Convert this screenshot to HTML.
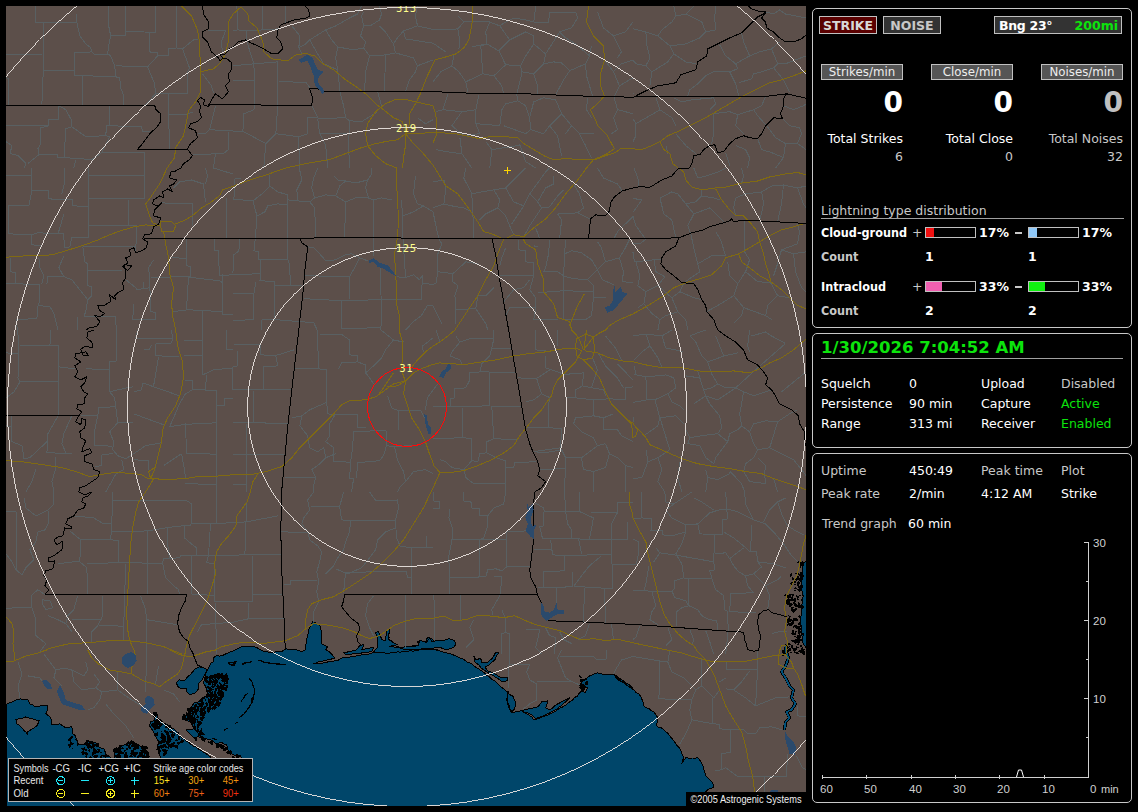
<!DOCTYPE html>
<html><head><meta charset="utf-8"><title>Lightning Detector</title>
<style>
html,body{margin:0;padding:0;background:#000;}
body{width:1138px;height:812px;position:relative;overflow:hidden;font-family:"DejaVu Sans","Liberation Sans",sans-serif;color:#fff;font-size:12.5px;}
#map{position:absolute;left:6px;top:6px;width:800px;height:800px;overflow:hidden;background:#5c4f4a;}
#map svg{position:absolute;left:0;top:0;}
.box{position:absolute;border:1px solid #c8c8c8;border-radius:5px;box-sizing:border-box;}
.t{position:absolute;white-space:nowrap;line-height:16px;height:16px;}
.r{text-align:right;}
.btn{position:absolute;box-sizing:border-box;border:1px solid #c0c0c0;text-align:center;white-space:nowrap;}
.g{color:#c8c8c8}
.gr{color:#0ce40c}
.b{font-weight:bold}
.bc{font-weight:bold;font-family:"DejaVu Sans Condensed","DejaVu Sans","Liberation Sans",sans-serif}
.big{position:absolute;font-weight:bold;font-size:28px;line-height:30px;height:30px;text-align:right;}
.bar{position:absolute;box-sizing:border-box;border:1px solid #c0c0c0;height:11px;width:51px;background:#000;}
.bar i{position:absolute;left:0;top:0;height:9px;display:block;}
</style></head><body>
<div id="map">
<svg width="800" height="800" viewBox="0 0 800 800" shape-rendering="crispEdges">
<g id="ocean"><path d="M0.0 698.9L2.8 697.0L6.0 695.9L8.8 694.4L11.3 693.7L14.0 692.9L16.2 693.2L18.8 693.5L21.9 693.9L23.9 697.9L26.5 698.9L29.9 700.9L32.6 700.7L35.0 699.6L38.3 699.8L40.9 698.9L41.9 701.8L41.0 704.7L39.9 707.8L43.9 710.8L45.0 713.0L45.6 715.9L45.9 718.8L48.2 718.1L51.0 718.5L53.9 717.8L56.5 719.9L59.8 721.8L63.0 721.2L65.8 720.8L66.4 723.9L66.8 727.8L69.8 729.8L70.0 732.1L71.3 735.0L71.8 737.8L74.6 738.3L77.8 738.8L79.7 736.6L81.8 734.8L84.7 735.6L86.9 736.2L89.8 736.8L91.8 739.6L93.8 741.7L97.7 742.7L99.0 745.5L99.7 748.7L103.2 750.3L105.7 752.7L108.7 752.7L108.6 750.0L108.4 746.7L108.7 743.7L110.6 742.6L113.6 741.2L115.7 739.8L119.1 738.6L121.7 737.8L125.7 734.8L128.5 736.5L131.1 738.0L133.7 739.8L136.7 742.2L138.9 743.9L141.6 745.7L141.7 749.4L142.6 752.7L145.5 753.2L148.4 752.5L150.7 752.9L153.6 752.7L154.3 751.0L152.9 747.8L152.2 744.3L151.6 741.5L151.8 739.1L153.0 736.1L151.2 733.2L150.1 731.1L148.5 727.9L147.5 725.3L145.6 723.0L143.5 719.9L144.8 715.8L148.9 714.4L148.5 711.4L147.5 707.7L150.9 706.3L151.1 708.9L151.6 711.7L153.3 713.9L155.7 715.0L157.0 717.2L160.1 718.2L163.8 719.9L165.8 721.7L168.4 723.2L170.6 725.3L172.1 727.9L174.6 730.7L178.7 733.4L180.8 735.3L183.7 737.2L185.5 738.8L187.7 740.3L190.2 741.1L192.2 742.9L194.9 744.5L197.1 745.9L199.0 747.0L201.6 748.9L204.4 751.0L205.4 753.5L206.7 755.3L208.2 757.8L209.9 760.5L212.4 760.1L214.8 760.2L217.6 760.4L220.2 760.9L223.5 760.1L225.9 760.3L228.7 760.1L231.9 761.0L234.2 760.5L237.0 760.5L236.1 757.4L235.9 754.8L235.6 752.4L234.2 749.7L231.9 748.9L228.3 749.2L226.1 748.3L224.1 745.9L222.1 744.2L221.4 741.1L220.7 738.8L218.0 737.9L215.3 736.1L212.9 737.0L209.9 737.5L206.9 735.3L204.4 733.4L201.4 733.0L199.0 732.1L195.7 731.7L192.2 730.7L188.2 732.1L186.0 729.7L184.1 728.0L182.4 726.4L180.1 723.9L183.1 723.8L185.8 723.3L188.2 722.6L186.6 719.9L185.5 717.2L182.6 715.3L180.1 714.4L176.0 711.7L177.3 710.4L180.3 708.8L184.1 707.7L181.4 703.6L185.5 700.9L188.2 696.8L190.7 696.3L193.6 695.5L196.3 691.4L199.5 690.7L201.7 690.1L201.5 687.2L200.4 683.3L199.5 680.4L197.7 677.9L198.1 674.2L199.0 671.1L199.7 667.4L201.1 664.3L202.3 662.5L203.7 659.8L204.4 657.5L207.8 655.5L207.2 652.1L210.5 649.4L213.9 650.1L217.5 649.0L220.7 647.4L223.0 646.4L226.5 645.4L228.8 644.0L231.4 642.8L233.2 642.0L235.9 640.6L238.7 640.9L242.4 640.5L244.8 641.0L247.9 640.6L250.8 641.6L252.8 642.9L255.9 644.6L258.8 645.4L260.5 645.9L263.8 646.2L265.8 646.6L268.2 646.4L270.4 645.6L273.8 646.0L275.8 645.6L279.8 642.6L282.3 643.3L284.7 643.5L287.6 643.1L289.8 643.6L292.5 644.4L295.8 645.6L299.7 643.6L299.7 641.2L300.0 638.5L300.1 636.5L300.7 633.6L301.1 631.1L301.8 629.0L302.2 626.6L302.7 623.6L304.1 621.0L305.4 617.8L306.7 615.7L309.0 616.3L310.9 618.0L313.7 618.7L314.4 622.1L315.7 625.6L315.9 628.7L315.5 631.6L315.8 634.9L315.7 637.6L318.3 639.2L321.7 640.6L319.7 643.6L321.9 644.9L324.7 646.6L323.6 645.9L325.7 648.0L327.3 650.4L329.1 652.2L327.0 652.7L324.1 653.3L321.4 654.0L318.7 654.4L316.2 655.3L313.6 655.4L310.8 656.8L307.6 657.4L311.0 657.2L313.6 657.4L316.3 657.4L319.2 656.2L321.2 656.1L323.8 655.4L326.5 655.4L329.5 654.8L332.2 654.2L333.9 653.1L336.5 651.8L339.2 651.1L341.9 651.6L343.7 651.2L346.4 650.4L349.5 650.4L351.2 649.6L354.0 649.1L356.2 648.8L359.2 648.1L361.6 648.2L364.0 647.9L365.9 646.9L368.9 646.3L370.7 646.0L373.9 645.1L376.0 643.9L378.4 643.0L381.1 643.0L384.1 641.7L387.1 641.9L389.9 640.9L392.7 640.9L394.6 641.8L397.5 641.8L399.9 641.9L402.3 641.6L405.7 642.2L407.9 642.9L411.2 643.0L413.9 642.9L416.0 643.4L418.6 643.5L421.5 643.1L424.2 643.9L426.5 643.2L429.3 643.5L431.8 643.9L429.9 644.0L432.0 644.4L434.5 645.2L437.2 646.0L440.2 646.8L442.4 647.4L444.7 648.0L447.1 648.8L449.9 650.0L452.4 651.2L454.1 652.2L457.1 653.0L459.3 654.5L461.3 656.0L463.4 656.8L465.8 658.0L468.3 660.1L470.3 661.6L473.0 663.1L475.0 664.5L477.0 665.9L479.8 667.9L481.4 669.8L483.5 670.8L485.4 673.1L488.1 674.5L489.8 675.9L491.5 677.4L493.5 679.4L495.4 681.1L497.7 682.9L500.0 684.9L502.7 685.9L502.5 688.6L501.1 691.7L500.7 693.9L501.3 696.2L501.7 698.7L503.0 701.4L503.7 703.8L505.7 706.8L507.9 706.3L510.2 705.6L512.8 705.2L515.7 704.8L517.7 705.9L520.5 707.6L523.3 709.4L525.7 710.8L527.7 713.8L530.3 713.2L532.7 712.6L534.7 711.3L537.7 710.3L539.6 709.8L542.3 708.8L544.0 707.8L547.2 706.4L549.4 705.4L551.6 703.8L553.6 702.3L556.4 701.0L559.1 699.4L561.3 697.9L563.6 695.9L566.4 694.1L568.6 691.4L571.6 689.9L573.2 687.2L575.5 684.9L579.5 686.9L580.1 684.7L581.5 681.9L578.9 681.4L576.3 680.8L573.5 679.9L575.5 676.4L577.5 673.9L580.8 672.2L583.5 669.9L586.2 669.0L589.0 667.5L591.5 666.9L594.4 667.4L596.4 668.0L599.5 668.9L602.4 668.3L605.0 668.7L607.5 667.9L609.4 669.8L611.4 672.1L613.4 673.9L616.4 676.0L618.9 677.5L621.4 679.9L623.9 680.7L627.0 681.9L625.0 680.2L622.6 678.3L619.9 677.0L618.3 675.9L616.1 673.9L613.7 672.6L611.4 670.7L609.6 669.2L607.0 667.9L609.1 670.4L609.8 671.9L612.0 673.9L614.9 675.7L617.2 676.4L619.9 677.9L622.3 680.4L625.0 682.0L627.9 683.9L629.9 686.2L633.0 688.2L634.9 690.9L636.2 693.9L637.3 697.1L637.9 699.9L640.1 701.7L642.9 702.4L644.9 704.3L647.9 705.8L649.8 708.6L651.9 711.8L651.2 714.3L651.0 717.5L650.9 719.8L652.7 721.4L655.9 722.1L657.8 723.8L660.3 726.0L662.2 727.6L663.8 729.8L665.7 732.3L668.3 735.2L669.8 737.8L671.3 739.7L672.9 741.3L674.8 743.7L675.4 746.7L676.6 749.5L677.8 751.7L676.5 754.5L675.8 757.7L677.8 754.4L679.8 751.7L682.7 752.2L686.2 752.0L688.9 752.1L691.8 751.7L694.2 754.8L695.8 757.7L697.0 760.2L697.7 763.7L699.0 766.6L699.7 769.7L702.0 771.8L703.5 773.2L705.7 775.7L707.1 778.3L707.7 781.6L704.7 782.5L701.7 783.6L699.7 786.0L699.5 788.9L700.2 791.0L699.9 793.6L699.8 796.3L699.4 798.7L699.7 801.6L0.0 806.0Z" fill="#00466a" stroke="#000" stroke-width="1" stroke-linejoin="round"/><path d="M170.6 676.5L173.3 673.8L175.8 674.5L178.7 674.5L180.4 672.2L182.1 670.4L184.4 668.8L186.2 666.4L188.1 664.0L190.2 662.3L193.6 660.9L196.1 661.3L199.0 662.3L201.1 664.3L199.8 666.3L198.6 668.6L197.7 671.1L195.0 675.2L192.2 677.9L192.3 680.9L192.2 683.3L189.5 686.7L187.0 687.6L184.1 688.7L180.7 686.0L180.1 682.6L177.3 682.6L174.6 682.6L171.3 679.9Z" fill="#00466a" stroke="#000" stroke-width="1" stroke-linejoin="round"/><path d="M371.6 641.6L371.5 638.8L371.2 636.1L371.6 633.6L370.9 629.8L369.6 626.6L372.6 625.6L373.6 628.4L374.8 630.7L375.5 633.6L379.5 634.6L379.6 631.9L380.0 629.6L380.6 627.4L380.5 624.6L383.5 623.6L383.6 625.8L382.6 628.8L383.1 631.1L382.5 633.6L384.8 634.5L386.9 636.5L389.5 637.6L391.5 638.6L389.2 639.1L385.9 639.7L383.5 640.6L386.2 640.9L389.2 641.1L391.6 641.3L394.1 641.3L396.5 641.7L399.5 641.6L402.1 641.3L405.2 640.2L407.6 639.6L410.8 639.4L413.4 638.6L411.5 635.6L413.8 635.6L416.8 636.3L419.4 636.6L420.3 633.9L421.4 631.6L424.3 632.2L427.0 633.6L428.0 636.6L429.4 639.6L427.3 640.7L424.7 641.6L421.7 642.4L419.4 643.6L417.3 644.0L414.3 643.7L411.9 644.5L409.4 644.4L407.1 645.2L404.2 644.7L401.8 645.3L399.5 645.6L397.1 645.5L394.7 646.2L392.0 645.9L389.9 646.2L387.3 646.4L384.3 647.0L381.9 647.3L379.5 647.2L376.5 646.5L373.3 646.3L370.7 646.3L367.6 645.6L369.3 643.5Z" fill="#00466a" stroke="#000" stroke-width="1" stroke-linejoin="round"/><path d="M337.6 646.6L340.4 646.5L343.3 645.2L346.3 645.0L349.6 644.6L351.9 642.4L353.6 639.6L357.6 638.6L356.8 641.5L355.6 643.6L358.9 643.0L361.3 642.9L364.8 641.7L367.6 641.6L365.6 645.6L362.9 646.0L359.9 646.4L356.9 646.6L354.2 647.4L351.6 648.0L349.0 647.8L346.0 648.0L342.5 648.7L339.6 648.6Z" fill="#00466a" stroke="#000" stroke-width="1" stroke-linejoin="round"/><path d="M400.0 640.6L403.2 640.3L405.6 640.1L408.9 640.2L412.0 639.6L412.7 637.0L414.0 634.6L417.3 635.2L419.9 636.6L421.9 634.4L423.9 631.6L425.9 635.6L428.6 635.0L430.5 634.8L433.7 634.7L435.9 634.6L439.6 633.9L442.9 632.6L445.8 633.4L448.9 634.6L449.2 637.7L448.9 640.6L446.4 641.8L444.1 642.4L441.9 643.6L439.0 643.3L437.2 642.7L434.8 641.7L431.9 641.6L428.7 641.8L426.3 642.5L422.8 642.1L419.9 642.6L417.2 642.9L415.0 643.0L412.0 643.6L409.2 643.8L406.2 643.8L403.1 643.5L400.0 643.6L396.9 643.0L394.0 642.6L397.2 641.3Z" fill="#00466a" stroke="#000" stroke-width="1" stroke-linejoin="round"/><path d="M467.8 650.0L469.8 654.0L472.1 653.2L474.8 652.0L475.1 654.1L475.8 657.0L478.4 656.5L481.8 656.0L483.6 654.4L486.1 652.4L487.8 650.0L489.8 646.0L492.8 647.0L491.2 649.0L489.8 651.6L488.8 654.0L486.9 655.6L484.6 657.2L482.8 659.0L478.8 661.0L481.8 664.9L484.9 666.1L487.8 666.9L491.0 669.2L493.8 670.9L497.7 671.9L501.7 671.9L501.7 674.9L498.9 675.1L495.8 675.9L493.5 673.8L490.8 671.9L488.5 670.5L486.3 669.0L483.8 667.9L480.6 665.7L477.8 663.9L475.0 661.8L472.8 659.0L468.8 656.0L468.4 652.8Z" fill="#00466a" stroke="#000" stroke-width="1" stroke-linejoin="round"/><path d="M501.7 686.9L504.1 688.8L506.7 689.9L508.0 692.7L509.3 695.9L509.3 699.5L508.7 702.8L505.7 705.8L503.3 701.8L503.1 698.9L502.0 696.8L501.3 693.9L501.8 690.7Z" fill="#00466a" stroke="#000" stroke-width="1" stroke-linejoin="round"/><path d="M515.7 704.8L518.0 704.0L520.7 703.3L523.7 702.8L526.7 702.2L529.3 701.4L531.7 700.9L533.9 698.3L535.6 695.9L538.4 695.6L541.6 694.9L541.0 698.0L539.6 701.8L543.6 703.8L546.2 702.2L548.4 700.2L550.8 698.4L553.6 696.9L555.9 695.7L558.7 694.1L560.7 693.0L563.6 691.9L561.7 693.6L559.6 695.9L557.4 697.4L555.8 699.4L553.3 700.8L551.6 702.8L549.1 704.1L546.9 704.9L544.2 706.6L542.0 707.5L539.6 708.8L537.0 710.2L534.5 710.9L532.0 711.8L529.7 712.8L528.0 711.2L525.7 708.8L523.1 707.6L520.9 706.6L517.8 706.2Z" fill="#00466a" stroke="#000" stroke-width="1" stroke-linejoin="round"/><path d="M801.5 553.8L798.9 556.1L796.5 557.8L796.6 561.1L796.8 563.5L796.5 566.8L797.1 569.8L796.7 572.6L795.8 574.9L795.5 577.3L795.1 579.8L795.3 582.1L796.1 585.1L796.3 587.2L797.1 589.7L796.9 592.6L796.0 594.4L796.2 597.6L795.5 599.7L795.3 602.1L795.4 605.2L795.2 608.2L795.0 610.6L794.5 613.7L795.0 616.4L794.9 619.9L795.5 622.4L795.5 625.6L795.7 628.5L796.3 631.5L796.4 634.4L797.1 637.6L799.5 640.9L801.5 643.6L801.1 641.1L801.7 638.1L801.7 635.6L801.6 633.4L801.6 630.6L801.4 628.3L801.4 625.8L801.4 623.0L801.1 620.6L801.5 617.7L801.7 615.6L801.4 612.6L801.5 609.9L801.2 607.6L801.1 605.1L801.5 602.2L801.6 599.7L801.7 597.6L801.5 594.5L801.5 592.2L801.8 589.4L801.8 587.6L801.7 584.9L801.2 582.4L801.5 579.8L801.8 576.6L801.7 574.7L801.1 571.7L801.7 568.9L801.8 566.5L801.7 563.8L801.5 561.9L801.2 558.8L801.5 556.2Z" fill="#00466a" stroke="#000" stroke-width="1" stroke-linejoin="round"/><path d="M10.0 713.8L12.1 712.8L14.7 712.7L17.6 711.9L19.9 710.8L22.3 711.9L24.8 712.4L27.8 713.1L30.6 714.1L32.9 714.8L32.0 717.6L30.9 719.8L28.4 721.7L26.5 722.7L24.4 724.1L21.9 725.8L21.9 728.8L20.3 726.5L17.8 724.3L16.0 721.8L13.4 719.5L11.0 717.8Z" fill="#5c4f4a" stroke="#000" stroke-width="1"/><path d="M779.5 644.0L782.5 652.0L779.5 660.0L775.5 665.9L779.5 671.9L783.5 679.9L787.5 683.9L785.5 691.9L789.5 697.9L785.5 703.8L780.5 705.8L783.5 711.8L779.5 715.8L778.5 723.8" fill="none" stroke="#000" stroke-width="3.2" stroke-linejoin="round"/><path d="M779.5 644.0L782.5 652.0L779.5 660.0L775.5 665.9L779.5 671.9L783.5 679.9L787.5 683.9L785.5 691.9L789.5 697.9L785.5 703.8L780.5 705.8L783.5 711.8L779.5 715.8L778.5 723.8" fill="none" stroke="#00507a" stroke-width="1.6" stroke-linejoin="round"/><path d="M780.5 639.6L779.5 643.6L779.5 648.0" fill="none" stroke="#000" stroke-width="3.2" stroke-linejoin="round"/><path d="M780.5 639.6L779.5 643.6L779.5 648.0" fill="none" stroke="#00507a" stroke-width="1.6" stroke-linejoin="round"/><path d="M209.3 672.6L207.9 670.8L208.1 668.6L210.1 667.6L211.9 668.6L212.5 670.4L210.8 671.2ZM190.0 706.4L190.2 707.1L190.0 708.2L189.1 707.4L188.9 707.0L188.6 706.2L189.4 706.2ZM203.1 704.9L202.6 705.8L201.9 705.2L202.0 704.3L202.6 704.1L203.0 704.0L203.8 703.9L203.6 704.7ZM202.7 707.3L202.2 705.8L201.2 705.4L201.8 704.5L202.6 704.4L203.1 704.9L204.4 705.3L203.1 705.8ZM203.2 699.3L203.2 697.8L205.3 697.3L205.9 699.4L204.7 700.6L203.1 700.6ZM218.1 673.0L217.2 672.8L217.3 671.9L217.8 670.9L219.6 670.9L219.8 672.8ZM187.7 704.1L186.6 703.0L187.6 702.0L188.0 701.0L188.8 701.7L190.1 702.4L189.3 703.7ZM216.9 680.4L216.4 678.7L217.7 677.4L219.3 678.1L219.3 679.6L218.4 680.4ZM212.8 692.5L212.0 692.7L210.2 692.3L211.6 691.0L212.7 691.1L213.0 691.9ZM177.8 710.3L179.5 710.5L178.8 712.1L176.9 712.9L175.9 710.7ZM218.0 672.0L217.2 672.3L216.5 671.9L214.5 671.5L215.1 669.7L216.8 669.2L218.6 669.3L219.1 671.0ZM209.7 689.4L209.5 690.4L209.8 691.1L209.1 691.5L208.1 691.6L208.0 690.6L207.8 689.6L208.8 689.3ZM184.7 716.4L183.0 714.9L185.3 712.9L188.1 714.6L186.6 717.3ZM201.6 677.2L201.6 675.4L203.1 676.3L204.9 677.1L203.7 679.0L201.5 679.2ZM206.1 688.7L206.0 689.8L205.8 690.8L204.8 690.7L204.2 690.3L203.8 689.6L204.1 688.7L205.0 688.9ZM218.8 676.1L218.6 674.8L219.4 673.1L221.1 674.6L220.6 676.6ZM216.8 680.9L217.6 681.5L217.9 682.5L217.4 683.5L216.2 683.2L215.7 682.4L216.1 681.7ZM206.6 678.4L207.1 679.3L206.7 679.9L206.0 680.5L205.8 679.6L205.9 679.0ZM193.4 717.6L193.0 716.3L194.4 716.0L195.9 716.1L196.6 717.9L195.0 718.7L193.6 719.0ZM210.0 692.8L211.0 693.1L211.3 693.9L211.0 694.9L210.2 694.3L209.6 693.8ZM206.7 683.2L205.8 684.0L204.8 684.4L203.6 684.0L203.2 682.7L204.4 682.2L205.1 682.4L206.3 681.9ZM218.5 675.0L217.1 675.2L216.8 673.8L217.5 673.3L218.3 672.8L218.9 673.8ZM207.7 699.5L207.9 697.7L209.4 698.7L210.8 699.1L210.2 700.4L209.2 701.6L208.4 700.3ZM194.5 693.4L195.1 692.6L196.2 692.7L197.7 693.9L196.7 695.8L194.6 696.2L193.0 694.7ZM217.0 671.8L218.0 670.5L219.6 668.9L220.2 671.1L220.1 672.9L218.0 673.6ZM213.8 695.8L214.9 696.4L214.2 697.3L213.3 698.1L212.3 697.3L212.3 695.7ZM206.0 699.3L205.9 697.7L206.2 696.4L207.7 695.8L208.1 697.3L209.5 698.8L207.5 698.7ZM190.0 707.0L188.3 707.3L188.5 705.6L189.0 704.6L190.4 704.5L191.1 705.9ZM189.6 697.6L191.0 698.0L190.3 699.3L189.3 699.1L189.0 698.3ZM199.7 702.6L197.5 703.1L197.3 700.7L199.0 700.0L200.6 701.0ZM194.4 729.3L195.9 730.0L197.3 730.4L196.8 732.1L194.8 732.9L194.4 730.9ZM179.0 713.7L177.7 714.0L176.1 714.1L176.0 712.5L176.4 710.9L178.0 711.7L178.7 712.4ZM199.7 675.6L198.6 675.1L197.4 675.3L197.9 674.2L198.3 673.6L199.1 673.8L199.7 674.4ZM201.3 692.0L200.3 691.4L200.1 690.2L201.2 690.5L201.6 691.0ZM193.7 718.6L193.8 719.4L193.5 720.0L192.5 721.2L191.3 720.2L190.8 718.3L192.7 717.7ZM210.9 694.1L210.4 693.2L211.0 692.2L212.7 691.7L213.9 693.0L213.0 694.5L212.1 695.2L211.2 694.6ZM205.3 680.7L204.9 679.8L206.3 679.3L206.9 680.8L205.8 681.2ZM189.6 702.7L190.1 704.1L188.6 704.8L188.0 703.6L187.3 702.4L188.7 702.3ZM202.3 698.3L202.4 699.0L201.9 699.5L200.5 700.6L199.8 698.9L200.4 697.5L201.8 697.4ZM189.2 704.3L190.1 702.4L191.9 703.4L192.2 705.0L191.3 706.0L190.7 708.1L189.7 706.1L187.5 705.5ZM211.7 687.3L211.3 688.3L211.1 688.8L210.3 689.7L209.7 688.7L209.3 687.5L210.6 687.5ZM211.1 682.8L210.7 681.8L211.2 680.1L213.0 681.2L212.8 683.1ZM212.1 698.0L213.4 698.0L213.8 699.5L212.2 699.7L211.3 700.4L210.3 699.6L210.5 698.5L211.3 698.0ZM186.0 714.4L187.0 713.6L187.9 714.0L189.0 714.1L189.4 715.3L188.4 715.9L187.1 717.1L186.5 715.6ZM199.8 681.0L198.7 680.5L198.4 679.4L199.5 679.0L200.3 679.8ZM180.6 708.1L179.6 707.5L179.7 705.8L181.3 706.5L182.0 707.2L182.3 709.3ZM200.7 705.0L200.9 703.8L201.7 703.1L203.0 703.2L202.8 704.4L202.3 704.8L201.9 705.0ZM221.8 682.9L220.9 684.5L219.3 684.5L219.3 683.1L220.3 681.2ZM192.1 726.4L189.9 725.1L190.9 722.5L193.4 723.1L193.2 724.9ZM185.2 713.8L186.0 713.9L186.2 714.7L185.7 715.3L185.1 716.1L184.5 715.3L184.1 714.6L184.6 714.0ZM209.8 679.9L209.1 680.1L208.2 680.0L208.1 679.0L209.0 678.3L210.0 678.9ZM190.7 713.7L190.7 712.7L191.5 713.2L192.1 713.5L191.8 714.1L191.6 714.5L190.9 715.1L190.6 714.2ZM189.9 723.7L191.3 723.4L191.5 724.7L190.8 725.7L190.2 724.7ZM221.5 675.0L221.9 675.8L221.7 676.5L221.9 678.1L220.5 677.7L220.2 676.6L219.7 675.7L220.1 674.2ZM185.4 703.3L185.8 702.9L186.7 702.6L187.3 703.6L186.5 704.6L185.4 704.3ZM210.5 677.9L211.1 677.7L212.0 677.6L211.8 678.6L211.1 679.3L210.7 678.4ZM214.7 689.2L213.8 690.6L212.8 689.3L211.3 688.8L212.2 687.7L212.9 686.5L214.8 686.1L214.2 688.2ZM217.2 691.3L214.4 692.0L212.9 689.4L215.2 688.2L217.6 688.6ZM194.3 714.6L194.0 715.5L193.1 715.5L192.8 714.6L193.6 714.5ZM220.2 682.2L219.1 681.2L220.4 680.8L221.7 680.5L221.5 682.0ZM186.2 720.1L187.5 719.7L188.3 718.2L189.5 719.2L188.8 720.4L188.6 721.0L187.8 721.8L186.8 721.3ZM183.5 703.3L184.2 704.8L182.4 705.5L181.0 704.1L181.4 702.3L182.9 702.7ZM220.8 671.3L220.0 671.2L218.9 670.4L219.5 669.3L220.6 668.6L221.7 669.1L222.3 670.2L221.1 670.7ZM218.2 683.9L218.4 682.6L219.1 681.7L220.3 682.6L219.3 683.4ZM187.7 709.7L188.7 709.2L189.2 710.4L188.5 711.8L187.5 710.6ZM190.9 708.7L190.2 709.5L189.5 708.8L189.2 708.2L189.4 707.2L190.4 707.0L190.9 707.9ZM189.6 712.3L190.4 713.7L190.0 715.2L188.5 715.0L186.9 715.0L187.1 713.4L188.0 712.2ZM203.9 697.5L203.1 696.9L203.4 695.4L204.7 696.0L205.9 696.9L204.6 697.5ZM216.7 681.1L215.7 681.7L215.8 680.5L216.5 680.4L217.1 680.6ZM197.3 713.8L197.0 714.9L195.9 714.6L195.2 713.9L196.0 713.4L196.5 713.3ZM204.0 682.4L206.2 683.8L205.2 686.0L202.9 686.6L202.0 684.1ZM216.5 676.2L217.3 674.5L218.7 673.6L220.9 675.3L218.4 676.2ZM214.1 685.8L213.9 684.1L215.5 683.0L216.3 684.7L215.7 686.0ZM200.9 692.1L200.4 691.5L200.5 690.4L201.6 690.5L202.3 690.8L202.4 691.5L202.6 692.6L201.5 692.4ZM219.7 669.7L219.3 669.0L218.9 668.3L219.6 667.8L220.5 667.3L221.2 668.1L220.9 669.0L220.5 669.5ZM177.3 708.9L178.4 709.6L178.9 710.6L177.7 711.2L176.5 710.3ZM195.4 704.5L196.8 705.9L197.9 706.6L197.5 707.9L196.2 707.8L195.0 707.7L195.1 706.4ZM205.4 684.9L206.3 684.2L206.8 685.3L207.9 685.9L206.9 686.6L206.2 686.4L205.3 686.6L205.6 685.8ZM209.8 700.5L210.9 701.8L209.8 702.9L209.1 704.1L207.6 703.9L207.4 702.5L206.9 701.0L208.3 700.3ZM184.4 716.0L183.1 716.2L182.4 715.5L182.9 714.7L184.0 714.6ZM203.0 676.9L202.4 676.7L201.2 676.6L201.7 675.6L202.6 675.3L203.4 675.5L203.5 676.3ZM196.9 707.5L195.8 707.0L195.8 706.3L196.3 705.1L197.2 706.3ZM177.9 710.9L177.4 709.2L179.1 709.4L181.0 709.0L179.8 710.6L179.1 711.1ZM214.1 689.5L215.0 687.3L216.7 687.2L217.6 688.6L216.4 689.7ZM182.8 702.2L184.0 701.1L184.7 700.3L185.7 700.7L186.5 701.4L186.7 702.8L185.4 703.5L184.3 702.8ZM201.8 696.2L202.4 694.6L203.2 692.6L205.4 693.7L204.4 695.5L203.7 697.8ZM213.0 682.4L211.6 683.0L210.5 682.0L211.4 681.2L212.5 680.9ZM213.9 690.8L214.9 691.5L214.3 692.5L214.1 693.1L213.5 693.0L212.5 693.3L212.3 692.2L213.0 691.6ZM196.4 709.0L196.2 711.0L194.6 709.8L193.8 709.0L194.4 708.0L195.9 707.4ZM184.7 710.8L185.5 709.7L186.2 708.6L187.3 709.6L187.2 711.0L185.9 712.0ZM203.4 680.8L203.3 682.1L202.5 683.5L201.5 682.1L200.3 681.6L201.0 680.3L202.4 679.6ZM207.4 668.8L208.4 668.5L208.3 669.6L208.0 670.7L206.7 670.8L206.5 669.6L206.9 669.0ZM204.2 696.2L204.0 695.2L205.0 695.4L205.8 695.4L205.2 696.1L204.9 696.8ZM212.1 683.4L212.9 683.0L214.0 682.8L214.3 684.0L213.3 684.6L212.3 684.4ZM182.1 711.4L183.6 710.7L183.2 712.3L182.8 713.8L181.0 713.4L181.4 711.8ZM187.1 706.6L187.9 706.4L188.0 707.2L187.6 707.7L187.0 708.2L186.2 707.9L186.6 707.1L186.6 706.6ZM185.7 712.7L184.2 712.8L184.2 711.3L185.2 710.3L185.7 711.5ZM192.3 713.8L192.5 714.8L191.5 714.9L190.8 714.9L190.7 714.2L190.6 713.7L191.0 712.9L191.9 712.9ZM179.8 713.7L179.8 712.7L180.3 712.1L180.9 712.2L182.3 712.3L182.0 713.6L180.8 713.6ZM196.3 714.6L194.8 714.5L193.3 713.0L195.4 711.8L198.3 712.5ZM176.5 713.1L176.9 710.4L179.9 710.0L179.7 712.6L178.6 713.7ZM195.2 703.1L195.6 702.0L196.7 701.9L197.6 702.7L197.3 703.9L196.2 703.6ZM194.4 705.1L195.3 705.4L195.1 706.4L194.2 706.5L193.8 705.7ZM207.0 674.7L208.4 676.4L206.3 677.9L205.2 676.1L205.1 674.2ZM185.0 714.2L185.6 713.6L186.5 714.3L185.9 715.1L185.5 715.7L184.7 715.6L184.1 714.7ZM195.5 710.0L197.1 709.9L198.6 709.6L197.8 711.0L197.3 711.7L196.2 711.4ZM206.1 693.1L208.2 691.6L209.5 693.4L210.7 695.0L208.8 695.7L206.7 695.6ZM208.5 670.7L207.7 669.2L209.3 669.1L211.3 669.2L209.8 670.7ZM192.6 711.4L192.3 711.6L191.7 712.0L191.8 711.2L191.7 710.7L192.3 710.6L192.9 710.5L193.0 711.2ZM193.1 698.1L193.0 697.2L193.8 696.9L194.2 696.6L194.6 696.9L195.4 697.5L194.7 698.1L194.0 697.8ZM197.2 704.7L196.4 704.1L196.9 703.3L197.5 702.9L198.8 702.6L198.9 704.0L198.2 705.0ZM208.6 676.2L209.1 674.9L210.5 675.4L210.9 677.2L208.9 677.9ZM206.3 689.0L206.5 690.4L205.5 690.9L204.3 691.1L203.9 689.8L204.9 689.1ZM204.4 690.8L203.6 689.8L203.5 688.3L204.8 687.5L206.0 688.1L207.2 688.8L206.9 690.3L205.8 691.5ZM202.8 674.5L204.7 674.4L204.4 676.3L204.4 678.2L202.5 677.9L202.2 676.5L202.1 675.7ZM193.0 715.5L193.2 716.5L192.6 718.1L191.2 716.8L191.4 715.1ZM204.4 682.4L204.2 681.6L205.2 681.1L205.7 682.1L205.0 682.6ZM203.5 671.3L204.5 671.1L205.7 672.1L204.2 672.7L203.3 673.4L202.9 672.4L202.4 671.4ZM216.8 670.4L215.2 670.4L215.3 668.9L214.8 667.8L215.9 667.0L217.5 667.4L217.1 669.0ZM206.4 687.5L205.9 687.8L204.9 687.4L204.6 686.1L206.0 685.9L206.8 686.2L207.1 687.1ZM202.6 679.7L203.4 680.9L204.4 681.8L204.0 683.4L202.4 683.1L201.6 682.4L200.9 681.5L201.0 680.0ZM199.0 710.3L197.5 710.2L195.5 709.8L195.7 707.6L197.6 706.9L198.6 708.0L199.7 708.8ZM185.3 715.0L186.5 715.5L186.9 716.7L186.1 717.7L185.0 717.5L184.6 716.8L184.4 715.8ZM186.6 717.7L185.7 718.0L184.7 717.5L185.6 717.0L186.3 716.7ZM195.8 725.7L195.6 727.8L194.0 726.6L193.3 725.2L194.4 724.1L196.0 724.2ZM186.9 723.3L187.7 721.6L189.6 721.1L189.6 722.9L189.5 723.8L188.6 723.7ZM210.9 672.1L208.9 672.4L208.7 670.5L209.1 669.7L209.5 669.1L210.8 667.5L210.6 669.7L212.2 670.8ZM182.2 714.1L182.4 713.3L183.2 713.0L183.9 713.7L183.4 714.4L182.7 714.5ZM184.8 707.0L184.9 706.4L185.5 706.6L185.6 707.0L185.8 708.0L185.0 707.5ZM215.9 674.6L216.1 673.8L217.3 673.6L218.0 674.9L217.0 676.0L215.2 676.3ZM219.9 670.5L221.1 671.2L221.4 672.5L220.2 673.0L219.3 672.5L218.3 671.2ZM194.5 703.0L193.7 702.3L194.7 701.6L195.6 702.0L195.5 703.2ZM201.8 690.6L202.2 691.5L201.6 692.2L200.8 692.1L200.2 692.0L199.5 691.4L200.1 690.6L200.9 690.3ZM207.2 672.1L208.0 673.7L206.1 673.7L204.8 672.5L206.1 671.0ZM186.3 707.8L184.3 707.4L185.8 706.4L186.5 705.2L188.2 705.3L187.7 707.0L188.5 708.5L187.0 709.1ZM186.3 720.3L187.4 719.5L188.5 719.6L190.6 719.8L189.6 721.6L188.2 722.4L186.7 721.9ZM214.1 683.5L213.0 683.5L212.5 682.7L212.2 681.8L213.1 681.5L213.7 681.5L214.6 681.6L214.3 682.5ZM193.9 713.0L193.7 711.8L194.2 710.9L195.0 711.1L195.8 711.3L196.6 712.6L195.2 713.2ZM197.7 697.5L197.5 699.0L195.6 699.2L194.7 697.4L195.9 695.9L197.9 695.5ZM188.1 702.6L187.9 703.3L187.3 702.9L187.1 702.5L187.3 702.1L187.8 701.5L188.0 702.2ZM208.2 686.7L207.5 685.9L207.6 684.4L209.0 685.0L210.5 685.0L210.2 686.4L209.1 686.9ZM206.0 688.6L205.8 688.0L205.8 687.2L206.7 687.0L206.9 687.7L207.5 688.0L207.2 688.6L206.6 688.8ZM213.5 693.9L213.8 692.4L215.6 691.9L216.2 693.8L214.8 695.1ZM208.2 703.1L207.3 703.2L205.8 704.0L206.4 702.3L206.6 701.7L207.2 700.1L208.5 701.0L208.2 702.3ZM208.7 691.8L208.6 693.3L208.9 694.1L208.4 695.0L207.6 694.2L205.7 694.4L206.8 693.2L207.4 692.6ZM199.5 694.5L199.0 694.2L198.7 693.6L199.3 693.2L199.7 693.4L200.0 693.7L200.3 694.3ZM209.5 678.7L207.6 677.7L207.7 676.1L207.7 674.9L209.0 674.1L210.2 675.2L210.6 676.7ZM211.0 686.7L211.6 685.4L212.1 684.7L212.9 684.6L214.5 684.3L213.6 685.8L213.2 686.4L212.2 687.8ZM210.3 676.5L210.5 677.3L211.1 678.2L210.1 678.7L209.2 678.2L209.0 677.4L209.6 676.9ZM209.2 694.9L209.1 695.7L208.0 696.3L206.9 695.0L208.2 693.4ZM209.9 687.9L208.5 688.2L208.2 686.8L208.8 686.3L209.5 685.9L210.3 686.6ZM186.6 702.2L186.2 702.4L185.7 702.2L185.9 701.7L185.9 701.2L186.4 700.8L186.7 701.4L187.3 701.9ZM200.1 670.3L202.0 671.1L200.6 672.3L199.4 672.7L198.4 671.1ZM202.5 701.7L202.8 700.6L203.9 700.3L204.4 701.3L203.9 701.9L203.2 702.3ZM192.8 699.0L191.7 698.4L191.5 697.8L191.2 696.9L192.1 697.0L193.1 696.9L193.6 698.0ZM202.6 696.9L202.9 696.0L203.8 695.4L203.8 696.4L203.6 697.3ZM208.8 691.8L207.7 689.5L209.6 688.4L210.7 689.5L210.4 690.5ZM216.0 675.3L215.1 674.3L216.4 673.8L217.4 674.0L217.9 675.9ZM188.7 700.4L190.1 701.5L190.1 702.8L189.2 703.5L188.3 703.0L186.6 701.4ZM208.3 679.4L209.5 680.1L208.8 681.1L207.4 681.6L206.7 679.9ZM189.5 724.6L188.6 724.4L188.5 723.3L189.4 723.3L189.9 723.4L190.3 724.1ZM212.6 688.2L213.2 687.5L214.9 686.6L215.8 688.3L214.2 689.3L214.0 691.1L212.9 689.7L211.8 689.2ZM211.2 679.1L212.0 679.3L214.1 679.9L212.1 680.7L211.1 681.9L210.1 680.7L210.6 679.6ZM205.1 669.0L204.7 671.3L203.9 673.3L202.4 671.5L203.1 670.1ZM212.2 674.4L212.6 676.3L211.2 677.8L209.4 677.3L208.7 675.9L208.6 674.0L210.5 673.3ZM218.4 687.1L215.8 688.6L213.7 686.6L214.8 683.7L217.0 685.1ZM201.2 704.3L201.0 701.5L203.6 700.7L205.8 702.6L203.9 705.1ZM193.4 705.0L192.1 705.6L191.4 705.9L189.5 705.9L190.2 704.2L191.2 703.0L192.7 703.6ZM191.1 722.8L191.3 720.9L190.7 719.3L192.4 719.5L193.6 719.9L193.3 721.1L192.6 721.8ZM204.5 693.7L203.6 691.9L203.6 690.8L203.3 688.8L205.2 688.9L207.0 689.3L206.5 691.2L206.0 692.4ZM214.7 676.7L215.2 677.7L214.2 678.8L212.7 677.8L213.3 675.9ZM206.2 674.9L207.4 673.9L208.2 675.2L208.8 677.0L206.8 677.0L205.2 677.0L204.8 675.3ZM191.4 700.4L192.8 699.8L193.2 698.0L194.8 698.6L194.2 700.2L194.3 701.2L193.4 701.5L192.2 701.5ZM182.4 705.7L181.6 704.3L183.1 704.7L183.7 705.2L184.8 706.3L183.4 706.9L181.9 707.4ZM183.5 706.6L182.3 705.0L181.9 702.5L184.6 702.4L186.5 703.9L185.7 706.2ZM192.5 730.3L191.9 728.7L192.9 727.8L193.5 726.7L195.4 726.9L194.6 728.6L194.4 730.3ZM192.9 712.0L192.1 712.1L192.0 711.4L191.9 710.8L192.3 710.3L193.0 710.4L194.1 710.7L193.3 711.5ZM210.9 695.9L211.7 696.1L212.9 697.0L211.9 698.0L210.8 698.1L209.7 698.1L209.8 697.0L209.6 695.6ZM204.8 689.2L204.0 691.4L202.0 690.6L200.3 690.7L199.6 688.7L201.2 687.1L203.3 687.5ZM219.0 676.8L220.2 677.4L219.4 678.7L218.3 678.1L218.1 677.2ZM212.1 689.1L212.7 688.2L214.0 688.3L213.7 689.4L213.4 690.0L212.8 689.7ZM193.6 698.2L195.0 697.1L196.2 698.3L197.2 700.2L195.1 701.4L192.9 700.3ZM184.9 708.3L184.7 711.0L182.3 711.9L181.0 709.8L182.2 707.5ZM181.5 709.8L183.1 710.4L183.7 711.8L183.2 713.2L181.6 714.1L180.9 712.4L180.8 711.3ZM202.0 674.8L200.4 675.8L199.1 676.0L198.8 674.8L198.9 673.2L200.9 673.0ZM211.8 669.7L212.1 667.2L215.2 667.8L214.8 670.5L212.9 670.8ZM213.1 682.8L214.0 683.3L214.5 684.2L214.1 685.2L213.1 684.9L211.8 684.7L211.7 683.2ZM210.3 698.3L211.5 699.4L210.5 700.5L209.5 701.5L208.2 700.4L209.2 699.2ZM213.2 668.9L212.1 669.2L209.9 669.0L211.1 666.7L213.4 667.1ZM185.5 708.8L183.6 709.7L182.1 708.4L182.6 707.1L182.4 705.1L184.6 705.0L185.1 706.9ZM218.2 690.0L217.3 691.8L215.6 692.0L213.9 692.1L214.4 690.3L214.7 689.5L215.4 688.2L216.7 688.8ZM210.3 692.1L209.7 692.7L208.3 692.8L208.2 691.4L209.2 690.9L209.9 689.1L211.4 690.0L211.4 691.6ZM199.3 671.7L200.0 671.1L200.5 670.7L201.6 670.3L201.6 671.5L201.1 671.9L200.7 672.8L200.2 672.1ZM208.9 694.6L209.4 695.4L208.5 696.1L207.3 695.3L208.0 694.2ZM204.8 674.9L204.7 676.5L203.5 675.4L202.8 675.0L202.3 673.9L203.2 672.9L204.5 673.1L205.5 673.9ZM186.0 711.0L185.4 710.4L183.7 709.6L185.4 709.0L186.3 706.9L187.9 708.3L187.3 709.9L187.8 711.7ZM198.7 704.8L200.5 705.6L200.2 707.4L198.5 708.1L197.6 706.4ZM187.5 711.9L186.3 712.7L185.8 713.8L184.4 713.7L184.7 712.2L184.7 711.4L185.4 709.8L187.2 710.1ZM199.4 703.7L199.1 704.3L198.0 704.9L197.5 703.7L198.2 702.7L199.3 702.8ZM196.6 704.8L196.2 707.2L194.5 706.6L192.9 705.8L194.3 703.9ZM194.7 723.4L195.2 722.6L195.7 722.2L196.4 722.4L196.6 723.0L196.1 723.4L195.6 723.8ZM209.8 684.3L210.1 683.6L210.9 683.6L211.9 683.8L211.1 684.6L211.4 685.6L210.5 685.2L209.9 684.9ZM179.4 708.8L179.7 709.7L178.9 710.3L178.0 710.4L177.8 709.6L177.2 708.8L177.8 707.9L178.9 708.1ZM204.3 676.2L205.4 676.8L205.2 677.8L205.3 679.7L203.7 678.8L202.9 677.9L202.0 675.8ZM207.6 686.3L208.0 686.0L208.8 686.0L208.7 687.1L207.5 687.2ZM216.0 683.8L216.9 682.8L217.8 681.5L218.4 682.9L218.7 684.3L217.3 683.8ZM213.5 680.2L214.5 680.7L215.3 681.1L216.3 683.0L214.2 682.5L212.6 682.8L212.2 681.1ZM206.7 678.1L207.1 678.7L206.5 679.0L205.5 678.9L206.1 678.2ZM192.5 700.9L193.1 701.2L193.2 702.0L192.5 702.1L191.9 702.1L191.1 701.5L191.9 701.0ZM194.5 714.9L194.9 716.2L193.7 716.4L192.4 716.7L192.8 715.5L193.4 715.3ZM198.2 698.3L197.9 698.9L197.5 698.5L197.2 698.2L197.1 697.6L197.7 697.6L198.0 697.7L198.5 697.9ZM200.2 671.0L201.3 670.1L202.7 670.7L202.1 671.8L201.7 673.1L200.7 672.2ZM214.6 680.8L215.0 679.9L215.8 680.1L216.7 679.9L216.7 680.8L216.0 681.0L215.5 681.1ZM211.3 671.5L211.8 670.9L212.1 669.5L213.3 670.1L213.1 671.3L213.6 672.3L212.6 673.4L211.3 672.7ZM215.2 689.6L216.7 689.1L217.8 690.9L216.0 692.1L213.8 692.4L214.1 690.2ZM191.4 697.8L192.1 697.2L192.9 696.7L193.4 697.5L193.0 698.1L192.7 698.9L192.2 698.3ZM191.9 709.1L192.7 709.1L192.2 709.8L192.1 710.6L191.3 710.3L191.1 709.7L191.2 709.0ZM202.6 684.5L202.4 685.3L201.1 685.9L201.1 684.5L201.3 683.5L202.2 683.9ZM188.4 703.1L188.7 704.4L187.4 704.2L187.2 703.5L186.6 702.3L187.8 702.8ZM200.9 673.5L200.3 674.6L199.8 674.9L198.9 675.8L198.5 674.7L199.1 674.0L199.7 673.2ZM192.6 699.6L194.4 699.3L193.7 701.0L192.5 701.6L190.6 700.4ZM220.1 673.4L218.6 672.3L220.1 671.3L221.4 670.3L222.4 671.7L223.0 673.0L222.0 674.0L220.6 675.7ZM204.8 696.4L205.5 695.4L206.5 696.0L206.6 697.0L206.5 697.9L205.6 697.5L204.4 697.6ZM219.9 678.7L220.7 678.7L222.0 678.9L222.3 680.5L220.9 681.7L220.0 680.2L218.1 679.4ZM204.0 693.5L203.3 694.2L201.7 693.6L203.1 692.7L204.1 692.5ZM189.2 712.5L188.4 713.4L187.0 712.9L186.9 711.0L188.7 711.4ZM192.3 726.7L191.5 727.3L190.8 726.6L189.9 725.9L190.6 724.9L191.6 725.2L192.3 725.7ZM183.3 712.7L181.6 711.8L182.6 710.6L183.7 710.0L183.9 711.3ZM212.0 681.6L212.2 681.2L212.8 680.9L212.9 681.6L213.3 682.1L212.7 682.3L212.2 682.3L211.7 682.0ZM205.8 683.8L205.7 682.8L206.8 682.6L207.6 683.4L207.4 684.5L206.3 684.4ZM211.0 687.1L210.8 685.8L212.1 685.6L212.6 686.7L212.3 687.5L211.8 687.7L210.9 687.9ZM207.9 699.1L210.0 699.5L209.8 701.0L208.9 703.0L207.3 701.2ZM207.8 700.4L208.6 699.5L210.1 700.0L209.7 701.5L208.8 701.9L207.2 703.4L206.0 701.5ZM204.1 686.3L203.9 685.8L204.4 685.7L205.3 685.2L204.9 686.1L204.9 686.6L204.2 687.1ZM212.1 693.4L212.2 694.8L211.1 694.7L209.5 694.2L210.6 692.5ZM208.6 691.2L209.3 690.7L210.3 691.2L210.2 692.4L209.1 692.2L208.6 691.9ZM220.4 673.1L221.8 673.2L222.1 675.1L220.4 675.9L218.3 675.7L218.2 673.6L219.4 672.7ZM212.9 683.0L212.9 684.1L211.6 684.1L211.7 683.0L212.3 682.6ZM195.8 705.6L195.8 707.4L196.5 709.6L194.4 708.6L193.8 707.6L194.1 706.3ZM185.8 714.2L185.0 711.8L187.0 710.2L187.9 712.1L188.5 714.3ZM207.7 669.5L207.6 670.8L206.8 672.3L205.0 672.3L203.9 670.8L204.7 669.4L205.7 669.2L206.5 669.1ZM203.9 698.2L204.4 698.0L204.8 698.3L205.2 698.8L205.0 699.6L204.2 699.6L203.8 699.1L203.7 698.7ZM190.9 725.4L191.4 723.3L193.5 724.1L193.1 725.8L192.0 726.5ZM191.8 726.6L193.7 726.9L194.3 728.6L192.7 728.8L191.8 728.3ZM189.8 701.9L187.4 700.9L188.6 699.0L190.4 697.7L191.9 700.2ZM190.9 713.1L192.1 712.6L192.5 714.3L191.0 714.7L189.9 713.9ZM213.3 690.0L214.8 687.8L217.2 688.1L218.3 690.1L216.6 691.2L215.0 691.6ZM205.8 669.9L207.1 671.1L205.6 672.1L204.4 671.5L202.7 670.8L204.1 669.7L205.0 669.4ZM209.0 675.8L207.4 674.7L208.7 673.6L209.5 672.1L210.4 673.6L209.8 674.5ZM208.3 676.1L208.1 677.5L206.8 676.9L206.3 676.1L206.8 675.4L207.8 675.1ZM203.9 686.5L203.7 685.7L204.6 685.8L205.1 686.1L205.1 686.9L204.2 687.6ZM200.0 698.2L198.9 697.8L199.2 696.8L199.8 696.3L201.3 696.1L200.9 697.5ZM208.0 697.3L205.8 698.4L204.1 697.3L204.3 695.0L206.9 694.9ZM184.2 708.2L184.0 709.7L181.9 710.4L181.1 707.9L183.2 706.7ZM206.3 687.5L207.4 687.6L209.4 687.1L210.1 689.1L208.4 690.4L206.8 691.2L205.7 689.7L205.8 688.5ZM203.0 704.2L202.7 702.4L204.4 700.4L205.9 702.7L204.7 704.2ZM191.9 719.4L191.6 719.7L191.1 720.6L190.9 719.7L190.7 719.2L191.0 719.0L191.4 718.7L192.2 718.6ZM218.9 671.9L220.3 672.3L220.5 674.0L218.9 674.4L217.3 674.6L216.2 673.3L217.4 672.1L218.2 671.7ZM191.4 711.8L190.9 712.3L190.1 711.8L189.7 710.9L190.7 710.6L191.4 709.9L191.8 710.8L191.9 711.4ZM208.8 677.1L209.6 677.9L209.1 678.8L208.2 679.2L207.2 678.5L207.6 677.3ZM207.2 699.1L206.8 699.9L206.2 700.1L205.6 699.5L206.2 698.5ZM211.5 700.3L211.5 699.5L211.9 698.9L212.6 699.3L213.3 699.7L213.0 700.6L212.1 700.9ZM205.1 687.1L205.3 688.2L204.1 688.5L203.9 687.4L203.1 686.7L204.1 686.2L205.1 686.1ZM192.9 701.9L192.9 703.6L192.7 705.1L191.3 704.2L190.3 704.1L190.8 703.2L191.2 702.3ZM191.3 700.4L189.3 700.2L188.3 699.4L189.2 698.5L191.3 697.9ZM196.0 712.8L196.5 712.3L197.4 712.5L197.0 713.4L197.1 714.3L196.2 714.1L195.6 713.8L194.8 713.1ZM193.3 704.1L194.4 702.5L195.5 700.8L196.9 702.3L196.6 703.6L196.7 705.4L195.2 704.4ZM205.7 672.6L204.6 670.1L206.7 669.1L208.5 668.8L209.1 670.6L207.7 671.3ZM216.5 679.5L218.7 679.8L217.3 681.4L216.3 681.5L214.7 680.4ZM217.7 677.8L217.6 677.0L218.0 675.8L219.3 675.9L219.7 677.1L219.5 678.2L218.4 678.9ZM191.4 728.2L192.1 726.8L194.0 726.3L194.2 728.1L194.2 730.3L192.2 729.5ZM195.3 727.2L196.7 726.4L197.7 727.1L199.0 727.8L198.1 729.1L196.9 729.3L195.5 728.8ZM206.4 691.7L205.2 690.7L205.4 689.2L206.6 688.6L207.5 689.2L207.6 690.0L207.7 691.2ZM186.3 704.4L185.7 706.2L184.3 705.1L183.2 704.2L184.4 703.5L185.0 702.6L186.8 702.7ZM209.8 672.8L208.2 672.6L207.4 672.1L206.6 671.4L206.5 670.0L207.9 668.7L209.9 669.2L210.8 671.1ZM184.5 712.7L184.8 713.8L183.7 714.1L182.9 714.0L182.6 713.3L182.2 711.9L183.5 712.4ZM189.5 703.6L189.9 703.0L190.0 702.8L190.4 702.4L190.7 702.8L191.3 703.4L190.6 703.6L190.0 704.2ZM198.2 693.0L196.6 692.4L197.2 691.0L198.5 690.7L199.6 691.9ZM204.0 677.5L204.5 678.4L204.0 678.9L203.1 679.3L203.4 678.4ZM211.4 696.7L209.6 695.9L210.6 694.0L212.4 694.1L212.9 695.3L212.4 696.1ZM205.7 677.7L205.1 677.1L205.2 675.6L207.3 675.7L206.7 677.5ZM197.8 712.5L196.0 712.8L195.5 710.3L197.9 710.5L198.7 711.7ZM207.5 681.5L207.1 681.8L206.5 681.9L206.0 681.5L205.6 680.6L206.5 680.2L207.5 679.9L207.7 680.9ZM202.2 695.8L201.9 696.3L201.2 696.2L201.5 695.5L201.5 695.2L201.9 694.3L202.6 694.8L203.0 695.6ZM214.2 672.4L212.8 673.9L211.3 672.7L210.4 671.1L212.1 670.3L214.0 670.4ZM179.5 712.1L180.7 712.3L182.6 713.1L180.7 714.1L179.6 714.4L179.1 713.3ZM217.1 671.2L217.4 672.3L217.4 673.6L216.1 673.4L214.8 673.2L214.9 671.8L215.8 670.9ZM184.4 713.3L185.0 712.8L185.6 712.7L186.2 713.0L186.2 713.8L185.5 714.1L184.7 714.1ZM187.5 715.9L187.4 714.1L189.2 714.5L190.0 715.6L189.7 716.7L188.9 717.5L187.3 717.5ZM213.4 695.5L215.3 696.5L215.1 698.3L213.8 698.6L212.6 698.6L211.9 697.0ZM195.6 713.1L196.2 713.4L196.8 713.7L196.3 714.2L195.8 715.4L195.0 714.4L194.7 713.4ZM210.4 697.7L210.6 698.2L210.3 699.0L209.5 699.0L208.2 698.4L209.2 697.5L210.0 697.3ZM182.6 710.2L181.1 708.9L181.9 707.3L182.5 705.7L184.5 706.0L184.6 707.8L183.8 708.7ZM210.9 691.2L210.7 690.4L211.5 690.3L211.9 690.6L212.3 690.9L212.0 691.5L211.5 691.3ZM192.6 715.0L193.4 715.0L194.5 715.7L193.3 716.8L192.3 715.9ZM219.0 683.0L217.7 683.4L216.2 683.0L217.1 681.6L217.4 680.6L218.4 681.0L219.2 681.7ZM205.7 694.3L204.7 693.5L205.7 692.4L206.7 693.3L207.5 694.3L206.4 695.0ZM193.9 716.9L194.9 717.2L195.0 718.3L194.1 718.6L193.3 719.0L192.8 718.1L193.5 717.6ZM217.1 678.7L217.1 678.1L217.7 678.0L218.5 678.0L218.1 678.8L218.2 679.3L217.6 679.5L217.2 679.2ZM216.8 678.7L217.6 680.3L216.6 681.4L215.3 682.7L213.9 681.4L213.6 679.5L214.9 677.9ZM204.8 677.0L203.3 675.2L205.5 674.5L206.8 675.3L206.2 676.5ZM197.3 694.1L196.2 694.2L196.1 693.1L195.7 692.7L195.8 691.6L196.8 692.1L197.3 692.4L197.0 693.0ZM200.9 672.4L200.4 671.6L200.1 670.7L201.0 670.7L201.8 670.9L201.6 671.7ZM202.0 676.3L200.5 676.9L200.0 675.3L201.2 674.1L203.0 674.9ZM200.8 680.5L202.0 680.1L203.0 680.2L204.3 681.1L203.4 682.5L202.0 682.6L201.7 681.5ZM211.7 682.6L210.3 684.4L209.7 686.1L208.5 684.8L208.7 683.6L209.4 681.6ZM166.2 733.5L166.1 734.3L165.5 733.7L165.3 733.3L165.4 732.8L165.9 732.6L167.0 732.7ZM161.5 735.0L161.4 733.2L162.4 731.3L164.7 732.0L165.5 734.5L163.2 734.9ZM172.8 727.2L172.2 728.1L171.1 728.6L170.5 727.5L170.6 726.8L170.8 726.2L171.6 725.5L172.4 726.2ZM156.9 729.9L157.0 728.8L158.0 729.2L158.9 729.6L158.3 730.4L157.4 730.9ZM146.5 720.3L145.1 719.8L145.6 718.4L145.7 717.0L147.2 716.5L147.8 718.0L148.8 719.0L147.3 719.4ZM162.3 734.0L160.6 732.1L161.4 729.9L163.6 729.1L164.6 731.1L164.5 733.1ZM149.3 726.5L150.3 726.8L151.9 726.2L152.1 727.8L151.0 728.6L149.9 729.5L148.9 728.5L149.4 727.5ZM160.0 743.8L160.1 745.3L158.7 745.4L156.4 745.3L156.4 742.5L159.0 743.1ZM156.0 718.3L154.1 720.1L153.2 717.9L153.7 716.6L155.1 716.6ZM157.6 740.9L155.9 739.6L157.7 737.7L160.6 738.8L158.9 740.9ZM156.8 748.6L156.5 747.3L157.5 746.5L158.8 746.7L159.3 747.8L158.8 748.9L157.7 749.5ZM153.4 744.2L152.5 744.4L150.4 744.0L150.8 741.9L152.5 740.5L154.1 741.7L154.2 743.1L155.1 744.5ZM149.2 724.0L148.8 724.4L148.2 724.6L147.9 724.1L148.2 723.7L148.4 723.0L148.9 723.5ZM163.4 742.4L163.1 743.5L161.7 743.2L161.8 741.8L163.0 741.5ZM164.5 739.2L165.4 736.6L167.3 738.6L167.1 740.6L165.3 740.6ZM156.3 739.4L157.5 739.3L158.9 739.9L157.6 740.7L156.6 740.7ZM163.0 723.5L163.2 721.3L165.0 721.4L166.4 721.8L166.1 723.2L164.9 723.2ZM159.0 746.7L160.0 745.9L159.7 747.1L159.9 747.7L159.5 748.6L158.9 747.7L158.2 747.5L158.6 746.9ZM147.9 716.0L148.8 715.8L149.4 716.1L149.5 717.3L148.3 716.9ZM161.9 719.7L164.1 718.8L165.0 719.9L164.8 721.2L163.1 721.8ZM160.8 721.7L159.2 722.0L158.3 720.9L159.2 719.8L161.1 719.7ZM152.8 719.4L153.7 719.4L154.4 719.4L154.7 720.2L154.5 721.4L153.2 721.4L152.4 720.5ZM167.2 729.7L167.2 731.0L165.9 730.7L164.7 730.3L165.1 729.0L166.6 728.1ZM154.2 737.4L152.8 737.5L152.1 736.4L151.8 735.0L153.1 734.7L154.2 734.2L154.4 735.4L155.0 736.3ZM151.3 740.3L152.8 739.6L153.6 741.0L154.3 741.8L153.3 742.3L152.6 742.2L151.1 742.0ZM163.3 729.2L161.1 730.3L159.7 728.1L160.4 725.5L162.7 726.4L163.1 727.6ZM161.8 727.3L159.5 727.3L158.8 726.1L159.3 724.4L161.0 725.1ZM158.0 737.4L157.7 736.5L157.0 735.8L157.6 735.1L158.4 735.6L159.2 735.5L158.6 736.2L158.8 737.0ZM172.8 738.6L171.8 738.4L171.0 738.1L171.1 737.2L171.0 736.0L172.3 735.9L173.5 736.4L173.6 737.7ZM171.5 731.6L171.6 731.0L172.5 730.3L173.6 731.0L172.8 732.0L172.3 732.5L171.4 732.4ZM163.3 725.6L162.7 726.7L162.1 727.1L161.0 727.8L160.4 726.5L160.9 725.2L162.1 725.5ZM150.6 719.4L151.0 720.7L152.5 721.9L150.6 722.1L149.9 722.0L148.8 722.0L149.4 721.0L149.3 719.8ZM158.2 747.6L158.8 748.7L158.7 749.6L157.8 750.2L157.0 749.3L156.9 748.0ZM161.6 721.9L161.0 721.4L160.5 721.0L160.6 720.4L160.9 719.5L162.2 719.0L163.0 720.2L163.3 721.8ZM174.6 732.1L173.7 733.6L171.6 734.2L171.6 732.0L173.0 731.0ZM167.7 729.5L166.0 730.2L164.7 728.4L166.3 727.0L167.2 728.3ZM175.1 734.7L175.2 736.2L174.6 737.2L173.6 736.5L173.8 735.5ZM171.4 733.3L171.7 734.8L170.2 735.1L168.7 734.6L169.8 733.6L170.4 732.8ZM162.0 741.5L162.1 739.2L161.5 738.3L161.9 736.7L163.3 737.7L165.1 737.8L165.2 739.6L164.0 741.1ZM149.2 716.0L151.4 716.7L151.2 719.1L149.3 719.9L148.4 718.6L147.3 717.0ZM159.4 744.8L161.0 745.5L160.6 747.8L158.0 748.6L158.1 746.1L158.0 744.9ZM157.0 731.7L155.9 730.5L157.1 728.0L159.2 729.9L158.1 731.5ZM160.1 741.8L158.1 740.8L159.0 739.3L159.9 739.3L161.5 740.1ZM154.3 738.0L153.2 737.8L153.6 736.7L153.2 735.1L154.9 734.6L155.4 736.2L156.4 737.2L155.6 738.4ZM147.5 717.3L148.4 718.2L147.8 719.2L147.6 720.3L146.6 719.9L145.9 719.4L144.6 718.0L146.6 718.2ZM162.8 725.5L163.8 725.2L164.4 724.8L164.9 725.3L165.0 726.0L165.0 727.0L164.0 726.6L163.4 726.3ZM152.9 746.6L152.7 745.3L152.6 744.6L153.1 744.2L153.9 743.6L154.7 744.3L154.9 745.4L154.0 746.2ZM165.2 729.3L165.5 728.0L167.1 728.2L166.8 729.6L166.0 729.7ZM165.2 741.2L164.5 739.6L164.8 738.0L166.5 737.7L168.6 739.0L167.6 741.5ZM175.3 732.6L176.6 733.8L177.8 734.5L177.5 735.8L176.6 737.4L174.6 737.2L174.3 735.4L175.2 734.5ZM167.9 737.3L167.4 736.9L167.5 736.0L168.4 735.9L168.9 736.7L168.5 737.4ZM167.9 739.4L169.6 739.0L171.2 738.6L171.8 740.3L171.7 742.6L169.5 741.8L168.4 741.0ZM160.2 737.8L159.1 735.2L161.4 734.7L163.6 735.1L162.5 737.2ZM162.7 730.6L162.1 730.4L162.0 729.9L162.5 729.3L163.4 730.0ZM154.5 725.5L154.5 724.4L155.7 724.8L155.5 725.8L154.7 726.3ZM153.0 714.2L152.8 715.1L151.9 715.2L151.2 715.7L150.5 715.1L150.6 714.1L151.5 714.2L152.0 714.0ZM155.4 718.2L156.3 717.4L157.0 718.3L156.5 718.9L155.5 719.5ZM158.8 736.0L158.1 735.3L157.2 734.8L157.9 734.0L158.5 733.1L159.5 733.6L160.3 734.4L160.1 735.7ZM156.0 741.2L156.2 740.0L157.2 740.0L158.7 740.0L158.0 741.4L157.0 742.3ZM153.9 739.3L155.6 739.4L156.4 740.6L156.6 742.2L155.1 743.0L154.2 741.8L153.3 740.8ZM164.2 739.2L163.8 738.7L164.0 737.6L164.8 738.3L165.1 738.8L165.2 739.5L164.5 739.6ZM156.6 734.6L155.5 733.5L154.0 732.0L155.4 730.0L157.3 731.3L159.1 732.1L158.5 734.1ZM156.5 715.4L155.3 716.0L154.6 715.7L153.0 715.7L154.0 714.7L154.7 714.3L155.3 714.7ZM148.6 717.5L148.8 716.5L149.8 715.5L150.3 717.0L151.1 717.5L151.0 718.6L149.8 718.6L149.2 718.2ZM154.1 716.8L152.7 718.3L152.0 719.8L151.1 718.4L150.7 716.9L152.2 715.7ZM155.3 727.7L156.6 727.2L157.3 728.6L156.2 729.3L155.2 729.7L155.0 728.6ZM157.3 727.6L156.8 729.0L155.6 728.8L154.7 728.4L155.0 727.3L156.1 726.6ZM161.3 741.5L160.8 742.2L160.1 742.0L159.4 741.7L159.1 740.6L160.2 740.2L161.0 740.8ZM148.3 715.4L148.0 714.8L147.9 713.6L149.0 713.8L150.2 714.2L150.4 715.7L149.0 716.2ZM153.4 722.7L152.1 722.4L151.8 720.9L153.4 719.8L154.1 721.5ZM166.4 729.4L168.0 727.5L168.7 730.0L167.6 731.8L165.1 731.3ZM152.0 714.1L150.5 715.6L150.2 713.3L149.3 712.2L150.6 712.0L152.5 710.5L151.9 712.8ZM168.2 727.2L169.8 727.7L169.0 729.2L167.6 730.3L167.0 728.7L167.4 727.9ZM173.8 730.6L173.2 730.9L172.8 730.3L173.1 729.9L173.7 729.6L174.0 730.1ZM160.4 744.0L162.0 744.3L161.2 745.7L160.2 746.8L158.8 746.0L158.6 744.1ZM150.4 721.6L150.3 722.5L149.3 722.7L147.6 722.9L147.3 721.0L148.7 719.8L150.6 719.7ZM160.5 729.7L162.8 730.0L163.9 732.3L161.6 733.5L160.6 731.8ZM157.7 725.1L158.0 724.4L158.8 724.2L159.8 724.7L159.5 725.8L158.6 726.2L158.0 725.7ZM149.2 706.4L148.8 708.2L148.1 709.3L146.9 708.8L147.0 707.8L147.2 706.0ZM172.2 728.8L170.6 728.6L170.5 727.2L171.2 726.4L172.5 726.0L173.0 727.5ZM160.7 733.3L159.0 733.8L158.0 732.7L157.1 730.8L159.4 730.1L160.1 731.8ZM152.9 722.5L151.8 723.6L150.3 722.9L150.1 721.5L150.4 719.8L152.2 719.9L152.3 721.4ZM151.0 730.0L149.7 729.8L148.7 729.7L147.6 728.7L147.8 726.9L149.6 726.9L150.6 727.8L151.6 728.7ZM153.0 740.7L153.8 740.4L154.2 741.2L153.8 741.9L153.0 742.6L152.2 741.9L152.6 741.1ZM149.4 723.7L148.7 723.2L148.4 722.8L148.0 721.9L148.9 721.6L149.3 722.3L150.0 722.9ZM162.7 732.9L162.0 733.5L161.4 734.1L160.6 733.6L161.0 732.8L161.1 731.7L161.8 732.6ZM149.2 719.4L148.4 721.0L146.7 721.1L145.7 719.7L146.9 719.0L148.0 718.0ZM164.0 736.6L162.4 736.9L161.6 735.0L163.6 734.2L164.7 735.4ZM152.7 743.3L153.5 743.7L153.5 744.7L152.8 745.5L151.8 745.2L151.5 744.2L151.8 743.4ZM155.6 718.5L155.9 719.9L154.4 719.7L153.9 718.7L154.1 717.4L155.8 716.6ZM153.1 715.6L151.8 714.4L151.3 713.9L151.4 713.0L152.2 712.1L153.4 712.8L153.8 714.0ZM165.2 740.1L166.0 741.0L165.4 741.8L164.7 741.8L163.7 742.1L163.7 741.1L164.3 740.4ZM153.3 714.6L152.8 714.0L153.1 713.1L154.1 712.8L154.8 713.5L155.6 714.5L154.3 714.7L153.7 715.2ZM160.9 740.9L162.4 740.6L163.5 741.3L163.4 743.3L161.9 742.0ZM153.3 736.1L154.4 734.6L155.3 734.0L156.7 733.8L158.0 734.8L158.0 736.8L156.1 737.0L154.5 737.4ZM156.7 745.1L157.0 744.3L157.5 742.5L159.1 743.5L159.7 745.1L158.7 746.5L157.2 746.3ZM153.9 747.8L152.9 748.3L152.1 747.0L153.4 746.4L154.4 746.9ZM150.2 718.0L150.9 716.1L151.3 714.2L153.5 714.8L153.9 717.0L152.3 718.1ZM152.3 720.1L152.9 720.8L152.0 721.2L151.2 722.0L150.9 720.8L150.1 720.0L150.9 718.9L152.0 719.3ZM164.5 737.5L166.0 737.3L167.0 736.3L168.8 737.0L168.0 738.7L167.3 740.0L166.1 739.0L164.7 739.0ZM165.0 725.5L165.9 724.8L167.0 725.0L168.2 725.7L168.2 727.2L166.6 727.1L165.7 727.3L165.1 726.5ZM162.4 737.9L162.1 738.8L161.3 738.8L160.4 738.4L160.9 737.7L161.8 736.8ZM154.2 734.9L155.4 735.5L154.9 736.7L154.6 737.7L153.1 738.2L152.8 736.6L153.5 735.9ZM166.2 728.6L166.5 728.9L166.5 729.5L165.9 729.8L165.5 729.4L165.1 729.0L165.1 728.2L165.9 728.3ZM152.0 728.7L151.8 729.7L151.0 729.2L150.9 728.8L150.7 727.8L151.5 728.3ZM164.0 721.7L165.2 722.5L163.7 722.9L163.2 723.7L161.7 723.9L162.2 722.4L162.4 721.6L163.2 720.9ZM147.2 710.2L147.4 709.2L147.8 707.5L149.7 707.4L151.3 708.9L150.0 710.5L149.4 712.3L147.7 711.5ZM142.3 743.1L140.3 743.5L138.5 742.9L139.7 741.5L140.4 739.9L142.1 740.9ZM136.1 744.1L135.9 743.4L136.3 741.6L137.5 743.0L138.1 743.8L138.3 745.7L136.2 746.2ZM133.7 748.7L133.0 748.3L133.2 747.4L134.0 747.2L135.1 747.1L136.2 748.5L134.8 749.5ZM135.6 742.2L135.1 741.5L135.8 741.1L136.5 741.3L136.6 742.4ZM136.4 748.1L137.4 747.8L137.5 749.0L136.5 749.0L136.0 748.6ZM139.7 749.4L139.7 748.7L140.3 748.3L140.9 748.6L141.0 749.1L141.1 749.7L140.6 750.1L139.8 750.2ZM136.7 743.4L134.6 742.7L135.5 740.9L136.6 739.3L137.9 740.8L138.2 742.4ZM137.2 751.2L136.8 751.6L135.8 751.5L135.7 750.5L136.5 750.1L137.2 750.2L137.7 750.7ZM139.0 743.7L137.0 742.4L135.3 740.5L137.7 739.5L139.7 739.5L140.2 741.6ZM137.0 748.1L136.9 749.0L136.0 748.7L135.3 748.6L135.9 748.1L136.4 747.5ZM140.3 752.6L141.0 750.8L140.2 749.4L141.6 748.7L142.9 749.4L143.7 750.5L142.7 751.4L142.1 753.1ZM141.0 744.6L140.5 745.4L139.7 745.2L138.1 745.8L137.7 744.2L138.6 743.0L139.9 743.8L140.8 743.7ZM135.2 746.7L135.7 747.6L135.3 748.6L133.0 749.2L132.9 746.4ZM90.5 737.1L92.9 737.5L92.8 739.9L90.8 741.1L88.5 739.2ZM93.3 747.1L91.4 747.2L90.4 746.3L91.1 745.0L93.4 744.6ZM77.8 743.2L77.4 742.9L77.0 742.8L76.4 742.0L77.4 742.0L78.0 741.8L78.8 742.2L78.2 742.8ZM88.3 739.4L87.9 740.3L86.9 739.9L86.5 739.2L85.3 737.8L86.7 736.6L88.4 737.0L88.6 738.5ZM96.4 748.7L97.7 748.6L98.6 749.2L98.7 750.8L97.1 750.8L96.0 750.0ZM81.2 738.3L83.1 738.3L84.8 739.2L83.5 740.6L83.1 743.0L81.1 742.0L80.5 740.1ZM79.0 744.7L79.8 743.3L81.3 743.0L81.3 744.4L81.1 745.2L80.2 745.4ZM79.5 742.7L80.3 743.3L81.1 743.3L81.5 744.1L81.0 745.1L79.9 744.9L79.6 744.2L78.6 743.5ZM88.7 751.9L89.6 751.7L90.2 752.3L89.8 752.9L89.3 752.9L89.1 752.6ZM101.7 749.6L102.4 751.2L100.6 751.3L98.9 750.5L99.8 747.7ZM103.6 753.5L102.6 752.9L103.1 751.9L103.8 751.4L104.3 752.1L104.9 753.1ZM79.8 737.0L80.8 735.9L81.8 736.6L82.4 737.4L81.6 737.8L80.8 737.8ZM79.8 735.6L80.4 735.4L81.4 735.7L81.2 736.8L80.3 736.7L79.8 736.6L79.0 736.0ZM92.3 743.8L92.8 742.6L94.0 743.0L94.1 744.0L94.7 744.8L94.1 745.8L92.8 745.7L91.9 744.9ZM80.9 738.2L80.7 736.8L82.0 737.1L83.4 737.0L82.8 738.3L81.8 738.6ZM84.4 750.4L85.8 750.9L85.5 752.1L85.6 753.1L84.6 753.4L83.5 752.8L84.1 751.8ZM85.7 741.0L85.5 742.6L84.0 742.0L83.1 741.6L82.9 740.7L82.9 739.3L84.3 739.4L85.7 739.6ZM82.9 742.3L81.9 742.7L81.1 742.2L81.4 741.4L81.1 740.4L82.0 739.7L82.6 740.8L83.5 741.4ZM88.6 744.7L87.8 744.3L87.1 743.7L87.7 743.0L88.5 742.1L89.4 742.9L89.9 744.2ZM90.1 749.2L92.4 749.2L91.3 751.1L90.3 752.9L88.6 751.7L87.0 750.2L88.7 748.8ZM84.3 736.0L84.4 737.6L83.7 738.8L82.2 738.1L82.9 736.8ZM85.9 747.6L86.7 745.7L89.0 745.7L89.5 747.8L88.1 748.5L86.4 749.7ZM81.0 739.4L80.7 739.7L79.9 739.9L80.0 739.0L80.3 738.6L80.8 737.8L81.1 738.8L81.4 739.1ZM89.6 740.2L88.3 739.6L89.2 738.6L89.7 737.9L91.1 738.2L90.9 739.7ZM90.9 746.2L88.8 745.4L87.2 744.2L88.5 742.7L89.8 743.3L90.4 744.0ZM84.4 740.2L83.6 741.0L83.3 742.4L81.7 742.3L82.0 740.8L81.5 739.7L82.5 739.1L83.9 738.9ZM86.5 736.6L86.1 737.6L84.6 737.9L83.8 736.5L84.4 735.1L85.7 735.6L87.0 735.4ZM78.5 737.8L79.4 738.3L79.7 738.5L80.3 739.6L79.2 739.3L78.7 738.8ZM99.9 751.7L98.6 751.7L98.3 750.2L99.7 750.2L100.3 750.8ZM81.1 737.9L79.8 736.7L79.8 735.3L80.1 733.4L81.9 734.0L82.3 735.4L82.5 736.8ZM89.7 747.1L88.3 746.6L87.1 745.9L86.5 744.3L88.4 744.3L89.5 743.3L90.2 744.5L90.9 745.9ZM82.1 745.2L82.5 743.6L83.2 742.8L84.1 743.4L84.5 744.3L83.8 745.6ZM89.0 740.7L87.1 741.4L85.4 741.1L86.2 739.6L87.4 739.3ZM86.7 738.6L87.0 738.3L87.4 738.4L87.5 738.8L87.9 739.4L87.3 739.8L86.5 739.9L86.3 739.1ZM90.5 740.5L89.3 739.6L90.8 739.3L91.4 739.2L92.4 739.0L92.4 739.9L91.9 740.6L91.2 740.6ZM86.8 740.5L87.9 741.0L88.6 741.8L87.5 743.1L86.2 741.9ZM80.4 750.3L79.1 747.8L79.6 745.5L81.6 746.6L82.6 748.3ZM87.3 736.1L88.6 736.9L87.4 737.8L86.5 738.4L85.7 737.7L84.7 736.9L85.9 736.2L86.6 734.7ZM95.6 749.2L96.6 750.9L95.7 752.3L93.2 752.7L94.0 750.3ZM79.8 743.5L80.6 743.8L81.0 744.4L80.9 745.5L79.9 745.2L79.5 744.8L79.1 744.1ZM84.4 752.6L83.9 752.9L82.6 753.2L83.1 752.0L83.2 750.7L84.6 750.8L84.9 752.0ZM88.9 746.2L90.0 745.3L91.0 746.5L90.4 747.5L89.1 747.5ZM79.8 749.1L81.3 749.0L81.3 750.4L80.5 751.6L79.5 750.5ZM97.7 750.6L97.1 749.9L97.6 749.1L98.4 749.1L99.1 749.1L99.5 749.8L99.2 750.5L98.5 750.4ZM76.2 749.0L75.2 746.2L77.5 744.1L78.9 746.3L78.8 748.2ZM79.9 740.9L79.3 741.8L78.5 741.7L77.8 740.8L78.9 740.8ZM100.5 750.6L100.2 749.8L100.9 749.3L102.0 749.4L102.2 750.5L101.2 750.8ZM95.6 747.5L94.6 747.0L94.1 745.9L95.3 746.2L96.1 746.5ZM83.3 741.9L81.7 741.6L80.1 740.9L81.5 739.9L82.3 739.4L82.9 740.3ZM90.5 749.7L91.6 750.8L90.5 752.8L88.9 751.4L87.9 750.0L89.2 748.5ZM76.5 744.2L75.1 742.7L76.8 741.5L78.6 741.6L78.9 743.3L77.9 744.5ZM91.0 743.3L91.3 742.6L91.8 743.0L92.3 743.5L92.0 744.6L90.7 744.3ZM131.8 752.3L131.8 751.2L133.0 750.6L133.6 751.8L134.3 753.2L133.0 754.2L132.2 752.9ZM126.6 748.7L125.4 748.6L123.8 747.7L125.3 746.6L126.4 744.9L128.2 746.0L127.2 747.8ZM125.0 738.1L125.5 736.6L126.0 735.4L127.4 735.0L128.9 735.7L129.0 737.4L127.8 738.4L126.7 737.9ZM131.9 738.4L132.9 740.5L132.7 742.6L130.4 743.1L128.8 741.4L130.5 740.1ZM111.0 741.1L112.4 742.3L113.9 743.4L112.0 744.3L111.3 744.6L110.1 744.8L110.3 743.7L109.2 741.9ZM119.6 753.7L117.3 753.9L117.7 751.3L120.4 749.8L122.2 752.8ZM139.1 750.8L139.8 752.2L138.3 753.1L137.1 752.1L137.6 750.6ZM113.3 746.1L111.6 746.5L111.7 744.9L112.1 743.4L113.6 744.0L114.8 744.2L114.6 745.4L114.7 746.9ZM116.6 746.7L116.5 748.4L114.8 747.9L114.2 746.5L115.0 745.5L116.0 745.0L116.6 745.9ZM112.2 745.5L111.9 744.1L111.1 742.0L113.2 741.6L114.0 743.2L115.8 743.7L115.0 745.2L113.6 745.6ZM132.9 749.6L133.7 750.1L133.7 751.2L132.7 750.9L131.9 750.8L132.1 750.0ZM111.2 751.9L112.1 749.4L114.0 747.2L114.4 750.1L114.1 752.1ZM124.8 736.5L124.3 737.9L124.9 739.2L123.5 738.6L123.0 738.5L121.9 738.0L122.5 737.0L123.5 736.7ZM109.1 741.9L110.1 741.1L110.8 742.2L111.6 742.9L111.0 743.7L110.2 744.7L109.1 744.2L108.6 743.0ZM130.5 739.0L130.6 741.5L127.8 741.3L126.6 738.7L129.1 737.0ZM124.9 742.0L124.7 743.4L123.5 742.6L121.8 741.4L123.8 741.0L125.8 740.0ZM132.5 746.3L134.3 745.7L135.5 746.6L135.0 747.9L133.6 747.8ZM131.6 752.2L131.3 751.6L130.8 750.4L131.9 749.1L133.6 749.6L133.3 751.3L133.9 752.7L132.5 753.7ZM123.9 749.2L125.0 749.5L125.7 749.6L126.3 750.5L125.4 751.0L124.8 750.6L124.2 750.3ZM125.0 751.5L122.8 751.3L123.7 749.3L125.1 749.2L127.1 750.4ZM114.3 748.0L112.5 749.2L111.9 747.2L112.5 745.9L113.5 744.6L114.4 746.0L115.5 747.1ZM128.9 739.3L128.3 740.8L127.4 741.4L125.6 741.4L125.3 739.3L127.3 739.5ZM122.9 738.9L124.3 739.5L123.4 740.8L122.0 740.8L121.6 739.3ZM121.1 748.9L121.8 750.9L119.7 751.1L118.8 750.9L117.0 750.3L118.6 749.3L119.5 748.7ZM118.5 747.8L117.8 748.1L116.8 748.2L116.7 747.2L116.8 746.0L118.1 746.0L118.2 747.0ZM140.4 751.8L139.3 751.7L138.9 750.8L139.0 749.4L140.4 749.8L141.7 750.9ZM127.2 749.6L127.8 749.1L128.4 748.6L128.8 749.3L129.1 750.1L128.3 750.5L127.8 750.0ZM118.8 747.7L119.4 747.7L119.6 748.3L119.5 749.0L118.8 748.6L118.2 748.6L118.4 748.0ZM127.6 739.7L127.9 738.5L128.8 739.0L130.2 739.1L129.2 740.0L128.3 740.6ZM139.4 748.3L140.2 746.9L141.3 746.0L142.6 746.5L142.7 747.7L143.1 748.9L141.8 748.9L140.9 749.0ZM112.5 742.9L111.8 742.5L111.8 741.8L112.0 741.0L112.9 741.0L113.6 741.7L113.4 742.6ZM127.0 746.9L128.1 746.3L129.7 746.2L129.7 747.9L128.9 748.6L128.2 749.2L127.4 748.8L127.3 748.0ZM130.0 739.2L129.4 738.6L129.7 737.8L129.9 737.1L130.7 736.8L131.1 737.6L131.4 738.3L131.1 739.3ZM121.8 738.0L120.6 737.1L121.6 736.1L122.6 735.4L123.2 736.5L123.3 737.0L123.4 737.8L122.7 737.8ZM141.9 745.7L142.4 746.8L141.5 747.3L141.1 747.5L140.6 747.3L139.9 746.5L140.9 746.3ZM138.6 749.9L137.6 750.4L137.4 749.3L137.6 748.7L138.4 748.1L138.8 749.1ZM133.4 748.4L134.8 747.5L134.9 749.1L134.5 750.7L133.4 749.5ZM124.0 742.6L121.6 741.7L121.7 739.7L123.4 738.3L123.9 740.3ZM130.9 750.4L128.4 750.6L126.4 748.8L128.6 747.6L129.8 748.3ZM136.1 747.9L135.6 747.4L134.6 746.4L135.7 745.3L136.7 746.4L137.3 747.0L137.5 748.4ZM135.3 752.3L137.2 751.3L138.7 749.4L140.0 751.4L140.5 753.5L138.5 754.4L136.4 754.3ZM137.4 744.6L136.0 746.3L134.1 744.6L136.0 743.3L137.2 741.4L139.1 743.2ZM129.8 740.3L130.1 738.8L131.5 739.4L132.9 741.2L130.5 742.3ZM128.0 741.3L129.2 740.8L129.7 742.1L130.5 743.8L128.6 744.3L127.0 743.7L126.6 742.0ZM109.4 749.8L110.9 748.5L112.3 749.9L111.9 751.4L110.7 752.4L109.8 751.2ZM109.4 745.9L107.5 745.5L107.0 743.6L108.4 742.4L110.2 742.8L111.0 744.7ZM139.5 744.9L138.6 745.4L137.6 745.1L136.9 744.1L137.6 743.1L138.5 741.4L140.1 742.4L140.1 744.0ZM133.2 751.2L133.5 752.1L132.5 752.6L131.9 751.8L131.9 751.3L131.9 750.3L132.8 750.6ZM122.4 742.0L121.6 743.4L121.3 744.3L120.4 743.8L119.7 743.6L119.3 742.7L120.1 742.2L121.0 741.5ZM113.0 747.0L112.3 746.6L112.2 745.1L113.5 745.7L114.7 746.3L114.1 747.8ZM138.2 745.0L140.2 745.7L139.3 748.4L137.4 746.9L137.0 745.6ZM111.6 751.0L109.8 751.9L109.1 749.7L110.8 748.9L112.8 748.0L112.2 750.1ZM113.9 741.0L114.8 742.0L113.6 744.1L111.4 742.4L113.0 740.9ZM125.9 738.4L125.3 736.4L126.9 735.1L128.0 736.4L128.3 737.3L127.9 739.1ZM128.9 748.3L127.9 748.5L127.9 747.2L128.9 747.5L130.0 747.8ZM126.5 744.6L127.0 745.9L128.3 746.7L127.4 747.8L126.1 748.0L125.0 747.5L125.0 746.3L125.4 745.3ZM134.8 751.1L134.0 751.4L132.4 751.6L133.0 750.0L134.1 748.8L135.4 749.9ZM124.2 735.7L125.9 733.9L127.7 736.0L126.7 738.4L124.3 737.8ZM130.2 737.6L129.6 738.5L129.1 738.9L128.2 739.1L128.3 738.2L128.7 737.8L129.3 736.9ZM119.8 750.6L120.5 751.4L119.3 752.4L118.9 751.1L118.7 749.6ZM117.6 741.9L117.5 743.6L116.0 743.0L114.8 742.7L115.6 741.8L116.4 741.4ZM118.0 744.1L118.7 743.3L119.5 743.9L120.0 745.2L118.2 745.8ZM137.1 749.7L135.4 751.2L133.8 749.3L135.4 748.3L136.8 747.9ZM120.8 753.8L119.6 753.4L119.5 752.3L119.7 751.0L120.9 751.4L121.9 751.3L123.3 752.4L121.8 753.4ZM124.3 749.8L124.9 747.7L126.3 746.4L126.7 748.2L126.4 749.3ZM116.5 739.3L115.5 741.5L114.4 742.4L112.2 741.4L113.5 738.8ZM113.3 746.1L111.2 747.7L108.9 746.6L110.3 744.8L111.5 744.8ZM127.8 745.5L127.1 746.5L126.0 746.6L125.2 745.8L125.3 744.0L127.4 743.6ZM141.8 752.3L140.9 752.8L139.0 753.0L139.7 751.2L140.7 749.7L142.2 750.9ZM138.4 750.9L137.4 749.3L139.1 749.8L140.7 749.2L140.6 750.8L141.0 752.5L139.2 752.0L137.8 752.4ZM115.7 749.9L115.0 751.1L114.1 751.9L113.3 751.2L112.0 750.9L112.5 749.8L113.2 748.7L114.7 748.7ZM128.4 746.4L129.9 746.5L131.7 746.3L131.6 748.3L129.8 749.0L128.1 748.2ZM121.1 750.3L119.9 750.3L120.0 749.0L120.9 748.1L121.5 749.1L122.2 750.0ZM119.0 749.0L119.0 747.6L118.5 746.4L119.6 745.7L120.8 745.9L121.2 747.0L121.1 747.9L120.4 749.0ZM108.5 743.4L108.5 742.2L109.5 742.6L110.5 743.0L110.5 744.1L110.0 745.3L108.7 744.7L108.3 744.0ZM119.9 740.1L120.4 738.0L120.3 737.1L121.3 736.6L123.2 736.6L122.1 738.2L121.9 739.9ZM138.9 750.7L139.9 752.0L139.7 753.6L137.8 753.5L136.6 751.4ZM114.4 747.9L114.3 749.2L112.9 750.0L110.9 749.5L111.8 747.5L112.2 746.2L113.7 744.9L115.4 746.2ZM141.1 752.3L140.5 752.2L140.3 752.0L140.1 751.8L140.1 751.4L140.4 751.3L141.1 750.9L141.2 751.7ZM63.1 732.1L64.8 732.6L65.3 734.2L63.9 734.9L63.2 733.8ZM64.1 731.9L64.2 730.9L65.1 729.8L66.6 730.3L66.7 731.7L65.8 732.4L64.6 733.2ZM62.3 735.4L62.1 734.7L62.3 734.4L62.1 733.6L62.9 733.5L63.2 734.2L63.8 734.8L63.1 735.3ZM62.6 740.5L62.2 738.1L64.6 738.5L65.8 740.3L64.3 741.3L62.9 742.0ZM67.0 742.6L66.8 742.8L66.4 743.4L65.9 743.1L65.9 742.5L66.0 741.9L66.6 742.2L66.8 742.3ZM64.8 734.9L66.5 736.5L68.3 737.5L66.5 738.6L64.4 739.4L63.6 737.1ZM63.6 739.0L63.7 737.0L64.1 734.7L66.1 736.2L66.0 738.5ZM62.5 735.2L62.2 733.3L63.9 731.8L64.8 733.7L64.2 735.0ZM63.4 738.9L64.1 738.2L64.8 738.5L65.3 738.9L65.0 739.7L64.3 739.3ZM73.0 738.6L71.3 739.9L70.8 738.1L71.1 737.2L72.1 737.4ZM70.8 733.0L71.4 734.0L72.0 734.9L70.8 735.4L69.6 735.0L69.4 733.4ZM211.4 738.4L212.0 738.0L213.2 738.4L212.3 739.3L211.6 739.5L210.7 739.0ZM197.7 733.7L198.6 732.4L199.9 733.3L199.4 734.5L199.5 735.4L198.5 735.6L198.1 734.7ZM221.2 745.6L221.5 745.2L221.9 744.9L222.9 745.3L222.1 745.9L221.3 746.7ZM198.7 731.5L199.8 731.9L200.1 733.1L199.3 734.2L198.2 733.7L197.8 732.9L198.3 732.4ZM212.8 739.4L212.8 738.4L213.0 737.8L214.0 737.9L213.8 738.9ZM220.1 740.8L220.6 740.8L220.8 741.3L220.7 741.9L220.1 742.3L219.2 742.1L219.3 741.3L219.5 740.6ZM221.9 745.9L222.1 746.8L221.8 747.7L221.0 747.4L220.4 747.2L220.0 746.3L220.9 745.7ZM217.6 739.0L218.7 739.9L218.3 741.2L218.0 742.9L216.1 743.3L215.7 741.3L216.1 740.4L216.0 738.7ZM188.3 732.4L188.5 731.7L189.1 730.9L189.7 731.8L190.5 732.2L189.8 732.8L189.3 733.8L188.8 732.8ZM197.8 732.0L198.9 733.6L197.2 734.9L195.3 734.1L194.6 732.3L196.3 731.6L197.4 730.7ZM206.3 735.9L205.4 736.8L204.2 736.9L203.2 735.7L204.6 735.2L205.8 734.4ZM202.7 736.7L201.8 736.1L202.6 735.3L203.5 735.7L203.2 736.4ZM204.5 737.3L203.8 737.0L203.6 736.5L204.1 735.9L205.4 736.3ZM220.4 743.2L219.8 744.6L218.5 745.3L217.4 744.5L217.0 743.4L217.6 742.6L218.3 742.2L219.7 741.9ZM230.9 752.5L231.1 751.2L231.5 749.9L233.4 749.0L233.2 751.2L233.5 752.4L232.2 752.6ZM220.9 740.6L221.8 740.9L222.8 741.8L221.6 742.4L221.0 744.4L219.5 743.4L219.2 741.9L219.9 740.8ZM225.2 747.7L223.0 748.5L222.0 746.9L222.4 745.0L223.9 746.1ZM228.3 752.0L227.9 751.1L228.8 751.0L229.3 751.5L229.3 752.0L229.1 752.5L228.4 752.8ZM231.4 748.2L231.6 748.9L231.2 749.5L230.9 749.9L230.3 749.7L228.9 749.4L229.9 748.5L230.5 748.1ZM207.2 736.1L207.5 737.6L206.5 738.9L205.1 738.4L203.5 738.1L204.4 736.7L205.0 736.2L206.0 735.4ZM203.0 736.6L203.1 736.1L203.9 735.6L204.5 736.3L204.2 737.1L203.7 737.3L203.1 737.9L202.8 737.1ZM232.4 750.0L232.2 750.9L232.3 752.2L230.8 752.3L229.9 751.1L230.0 749.6L231.5 748.8ZM233.7 749.5L234.1 750.9L232.6 750.8L230.5 749.5L232.9 748.8ZM225.0 748.6L223.2 748.3L223.3 746.7L222.6 744.9L224.6 744.1L225.9 745.6L226.6 747.4ZM225.8 751.0L227.0 750.1L228.0 750.6L228.7 752.2L226.4 753.3ZM210.9 740.6L210.8 738.9L211.4 737.4L213.0 737.7L214.7 737.7L214.6 739.4L213.8 740.5L212.5 741.6ZM211.6 738.6L212.7 738.9L212.5 739.9L212.5 741.0L211.4 741.7L209.8 741.4L209.7 739.8L209.9 738.0ZM188.7 734.9L188.6 733.0L189.9 731.6L191.2 732.9L191.2 734.0L190.5 735.2ZM215.6 738.1L216.7 740.1L217.6 741.8L215.7 743.2L214.5 741.5L213.3 739.5ZM792.9 554.8L793.4 556.2L792.7 557.4L791.3 556.9L791.3 555.4ZM795.2 558.1L796.5 557.5L797.6 557.8L798.2 559.1L797.0 560.4L794.6 560.4ZM796.4 559.3L794.5 559.9L793.0 559.1L792.9 557.6L793.7 556.5L795.0 556.4L796.4 557.3ZM795.6 560.1L795.0 561.7L793.5 561.4L793.3 560.2L794.2 559.5ZM797.0 557.5L796.0 557.2L795.0 556.2L796.4 555.3L797.3 556.3ZM784.7 578.4L784.7 577.4L785.6 577.3L786.5 577.1L786.4 578.0L786.1 578.4L785.4 579.3ZM790.8 568.0L789.7 567.9L788.9 568.0L788.8 567.1L789.5 566.7L790.4 566.9ZM796.1 573.4L795.0 573.8L794.4 573.2L794.3 572.5L794.9 572.0L795.8 572.3ZM785.5 572.5L785.5 571.3L786.7 571.0L787.5 571.7L787.3 572.6L787.4 573.4L786.6 573.7L785.7 573.4ZM788.3 576.6L787.3 575.5L788.7 574.7L789.8 575.5L789.8 577.3ZM796.9 566.1L797.0 567.4L796.7 568.9L795.5 567.8L794.7 567.6L794.7 566.5L795.7 566.6ZM793.0 569.4L793.7 567.9L795.3 568.3L796.1 569.2L796.5 570.7L795.0 571.5L794.3 570.1ZM788.5 585.1L788.0 584.2L789.0 584.2L789.8 584.4L789.4 585.3ZM786.2 573.6L786.4 572.5L788.1 572.3L787.9 574.1L786.7 574.6ZM792.3 569.3L790.8 568.2L791.2 567.1L792.3 566.4L793.6 567.7ZM788.3 574.6L788.0 574.0L787.6 573.0L788.6 572.9L789.5 572.7L789.5 573.6L789.8 574.3L789.0 574.5ZM794.3 575.4L792.6 574.3L793.4 572.5L794.8 571.2L796.5 572.0L797.5 573.3L796.3 574.4L795.9 576.3ZM791.0 578.9L791.2 577.5L792.7 578.0L793.1 579.3L792.4 580.5L791.0 580.1ZM797.0 580.0L795.9 581.1L794.6 580.7L794.1 579.7L794.0 578.4L795.3 578.9L796.2 578.9ZM786.2 578.7L786.3 578.2L785.9 577.0L787.0 577.2L787.7 577.7L787.3 578.4L787.1 578.9L786.7 578.8ZM796.2 568.1L795.7 569.0L794.8 568.5L794.4 568.0L794.2 567.3L794.4 566.1L795.7 566.4L796.1 567.3ZM793.3 569.7L793.1 571.8L794.3 573.0L793.3 574.7L791.4 574.2L790.2 572.9L790.6 571.4L791.3 569.6ZM788.8 572.3L790.3 572.7L791.2 572.4L791.1 573.3L791.1 574.0L790.7 574.7L789.7 574.5L788.6 573.8ZM791.0 582.5L789.8 583.0L788.7 583.4L788.2 582.2L788.9 580.9L789.9 581.7ZM797.4 579.5L797.3 581.1L796.5 581.9L795.3 581.9L793.7 580.6L795.3 578.7ZM783.8 571.0L784.0 569.0L784.3 568.1L785.2 566.9L786.1 568.1L786.6 569.3L785.5 569.9ZM793.1 581.7L791.5 581.9L792.0 580.4L792.7 579.6L794.0 579.8L793.7 581.0ZM795.0 569.8L796.3 570.0L796.9 571.0L796.7 572.0L796.1 573.4L795.0 572.5L794.7 571.7L793.6 570.4ZM791.1 583.5L792.6 582.8L793.7 581.2L795.7 581.9L794.9 583.9L794.5 585.2L793.1 586.6L792.4 584.6ZM788.0 578.6L788.0 577.3L789.2 577.8L790.2 578.1L789.8 579.1L789.1 579.5L788.3 579.4ZM791.6 575.4L793.2 575.3L793.2 576.8L792.9 578.2L790.8 578.7L790.7 576.6ZM784.8 576.2L786.3 575.9L787.8 577.1L786.5 578.8L784.0 578.3ZM795.6 567.9L797.2 567.5L797.4 569.2L796.3 570.7L794.9 569.3ZM793.4 578.8L792.3 579.0L791.1 578.3L791.6 577.0L792.4 576.2L793.9 575.5L793.9 577.3L793.6 578.0ZM786.8 597.4L787.6 596.0L789.0 596.2L789.8 596.7L790.2 597.5L790.1 598.8L788.9 598.8L787.6 598.6ZM797.2 600.6L797.5 601.5L797.0 602.9L795.5 602.6L794.8 601.5L795.1 600.3L795.8 599.3L797.1 599.5ZM794.3 602.2L793.3 601.8L794.1 601.0L794.3 600.5L795.2 600.3L795.3 601.1L795.4 602.2ZM782.8 597.7L781.8 597.0L781.2 595.7L782.5 594.8L783.5 595.7L783.9 596.9ZM782.1 597.2L782.7 598.0L783.3 599.3L781.9 599.2L780.6 598.9L780.8 597.4ZM782.6 588.6L785.1 589.4L784.5 591.4L782.7 593.4L780.8 590.9ZM784.9 604.4L786.0 603.4L787.2 602.5L788.2 603.6L787.8 604.7L787.6 606.6L785.8 605.8ZM788.2 594.5L786.8 595.4L785.8 595.2L784.4 594.1L785.9 593.3L787.2 593.2ZM783.0 592.1L783.2 594.2L782.6 595.1L781.9 595.6L780.3 595.9L780.0 594.2L781.2 593.2ZM793.2 591.5L792.0 591.8L791.0 592.6L790.8 591.3L790.1 590.4L790.7 588.9L791.9 590.2L793.1 590.2ZM784.6 595.8L784.5 595.2L785.1 594.4L785.6 595.3L785.2 595.8ZM794.9 588.9L794.9 589.7L794.6 590.2L793.6 590.7L793.3 589.6L793.9 588.8ZM791.8 594.4L790.9 593.4L791.1 592.1L792.2 592.5L792.9 592.8L793.1 593.9ZM784.9 591.9L784.1 591.8L784.4 591.1L785.2 590.5L785.9 591.5ZM786.4 588.5L787.5 587.7L787.9 589.0L787.7 590.2L786.5 590.9L785.6 589.9L785.9 589.0ZM789.1 601.2L787.9 599.1L789.6 598.2L790.8 598.5L791.3 600.2ZM783.3 596.0L783.9 597.4L782.4 597.8L781.2 599.0L780.0 597.7L780.7 596.1L781.9 595.1ZM789.9 595.8L788.9 595.8L788.2 595.8L787.5 595.1L788.3 594.5L788.8 593.9L789.5 594.2L789.9 594.9ZM786.4 601.2L787.6 600.5L788.0 601.8L787.2 602.5L786.8 603.4L785.5 603.5L785.6 602.2L784.9 600.9ZM778.8 588.3L780.3 588.6L780.9 589.0L782.0 589.3L781.5 590.3L780.7 590.8L779.7 590.6L778.4 589.9ZM785.6 599.1L785.7 600.3L784.6 600.5L783.6 601.0L782.3 600.0L783.9 599.4L784.6 598.2ZM780.7 596.2L781.6 596.1L783.2 597.5L781.0 599.1L780.2 597.0ZM784.3 593.5L785.9 594.8L783.8 595.4L782.8 597.3L781.4 595.8L781.8 594.1L782.9 593.1ZM785.6 593.4L783.8 591.8L785.4 590.6L786.8 590.6L787.6 592.3ZM789.1 605.2L788.2 605.0L788.3 604.0L788.8 603.5L789.5 602.4L789.8 603.7L790.4 604.3L789.9 604.9ZM789.6 597.9L790.2 599.3L788.7 599.3L787.8 598.8L786.8 597.7L787.9 596.5L789.3 596.7ZM784.0 587.4L784.9 588.1L785.8 588.7L785.3 589.8L784.2 590.1L783.5 589.3L783.2 588.3ZM790.8 603.7L790.6 604.4L789.8 604.5L789.4 603.9L788.6 603.3L789.1 602.4L790.1 602.3L791.1 602.7ZM796.0 593.0L797.3 592.6L797.1 593.8L797.4 595.2L796.0 594.6L794.6 595.0L794.9 593.7L794.6 592.1ZM791.1 598.6L793.1 598.6L794.7 599.2L795.1 601.5L792.7 602.6L791.3 600.7ZM784.6 597.8L785.9 597.1L786.5 598.4L786.4 599.4L785.7 599.9L784.7 600.7L784.3 599.5L784.1 598.7ZM783.3 593.6L783.9 592.9L784.8 592.5L785.9 592.8L785.8 594.0L785.3 594.8L784.4 594.8L783.9 594.3ZM782.6 588.3L783.1 586.8L783.9 588.2L783.8 589.3L782.7 589.1ZM785.7 599.7L784.2 601.1L783.3 599.2L782.7 597.6L784.3 596.8L786.1 596.6L786.9 598.5ZM785.5 601.5L786.8 601.3L786.9 602.7L786.5 603.2L786.1 603.6L785.7 603.2L785.3 602.7ZM789.4 604.6L789.3 603.7L789.4 603.0L790.1 603.2L791.0 603.2L791.1 604.1L790.3 604.6ZM792.9 599.3L791.7 598.7L791.6 597.1L792.9 596.2L794.1 596.9L794.5 598.0L794.3 599.3ZM786.6 603.2L787.7 603.0L788.7 603.5L788.8 604.7L788.4 606.2L787.1 605.4L786.1 605.0L785.3 603.8ZM792.3 596.0L793.6 596.6L794.0 597.2L794.2 598.4L792.9 598.3L792.8 597.3ZM797.4 602.0L796.5 602.5L795.1 602.7L795.7 601.4L796.3 600.8L798.4 600.1ZM788.3 594.7L787.4 593.6L788.0 592.3L789.2 592.3L790.1 592.8L790.1 593.7L789.6 594.7ZM784.8 610.5L784.4 611.2L784.4 611.7L783.9 611.9L783.4 611.7L783.6 611.1L783.2 610.3L784.1 610.3ZM792.3 622.7L790.1 623.1L789.9 620.5L792.0 620.0L792.8 621.4ZM785.8 618.4L785.8 619.5L784.4 619.5L784.6 618.3L784.8 617.6L786.0 617.1ZM785.8 613.9L785.2 616.0L783.3 616.3L781.7 616.4L780.2 615.0L781.4 613.5L782.4 611.7L784.3 612.4ZM784.8 616.1L783.7 614.6L782.6 613.5L784.1 612.9L785.5 613.0L785.6 614.4ZM781.4 618.1L781.7 617.2L782.6 616.8L783.6 617.3L784.5 618.5L783.2 619.2L782.3 619.5L780.4 619.8ZM793.3 625.0L792.1 623.3L792.0 622.4L792.3 620.1L794.4 621.2L795.1 623.4ZM788.0 615.7L786.4 616.0L787.1 614.6L787.7 614.1L788.4 613.4L789.1 614.0L789.7 615.0L788.7 615.4ZM788.0 614.8L786.4 614.3L786.7 612.8L788.0 612.3L789.0 613.5ZM794.3 620.5L793.5 619.5L794.6 618.6L795.6 619.3L796.3 620.3L795.1 620.6ZM795.2 617.5L794.3 618.9L792.9 619.6L791.6 618.7L791.9 617.3L792.7 616.5L794.4 615.8ZM791.9 624.3L791.6 622.9L791.9 621.3L793.7 621.1L794.5 622.3L794.6 623.3L793.9 623.7L793.1 625.2ZM787.1 614.4L787.2 614.7L787.0 615.2L786.4 615.6L786.2 614.9L786.3 614.4L786.6 614.2L787.2 613.5ZM790.0 619.5L789.7 620.8L788.9 621.9L788.1 620.8L788.0 620.0L788.6 618.5ZM788.3 619.8L788.3 620.7L788.4 621.7L787.4 621.8L786.6 621.4L786.4 620.7L786.9 620.1L787.4 620.0ZM784.8 617.6L784.4 618.8L783.1 620.1L781.8 618.7L782.0 617.2L783.0 616.4L784.1 616.8ZM783.0 615.7L782.7 617.2L780.9 616.7L781.2 615.1L782.3 614.9ZM790.4 615.2L788.9 615.3L789.1 613.8L788.0 612.4L789.4 611.5L790.6 612.5L791.5 613.2L791.5 614.5ZM784.0 613.2L785.0 612.6L785.6 613.6L786.6 614.0L786.5 615.3L785.2 615.0L783.9 615.6L783.5 614.3ZM792.1 620.5L791.0 622.5L789.1 621.8L788.3 620.3L789.2 618.9L790.7 619.2ZM792.3 621.8L791.8 620.9L792.7 620.5L793.8 620.2L794.5 621.2L794.3 622.4L793.2 622.4L792.6 622.1ZM792.3 611.1L791.8 609.7L793.1 609.4L794.2 609.5L794.3 610.7L793.6 612.3ZM792.3 618.2L792.3 617.3L793.0 617.1L793.6 617.6L793.2 618.3ZM787.7 616.6L787.4 618.5L785.6 618.7L784.1 617.6L785.2 616.3L786.5 615.0ZM792.7 610.6L792.9 609.6L792.6 608.8L793.4 609.2L794.0 609.2L794.0 609.8L793.4 610.0ZM789.0 619.8L790.3 619.6L791.4 619.8L791.0 620.8L790.4 622.0L789.8 620.8ZM783.1 619.0L783.8 617.7L784.0 617.1L784.6 616.4L785.8 616.6L785.4 617.8L785.0 618.3L784.4 619.9ZM783.3 608.8L783.3 609.7L782.6 610.1L781.6 609.8L782.3 608.9ZM795.2 647.3L794.5 645.9L796.0 645.7L798.1 644.8L797.3 646.8L796.4 647.4ZM787.8 628.6L786.9 627.8L786.5 625.9L788.5 626.6L790.0 625.7L790.0 627.3L790.2 628.7L788.8 628.8ZM791.1 635.0L792.1 635.6L792.7 635.8L793.6 636.5L793.0 637.6L791.9 636.8L791.0 636.9L790.7 636.0ZM782.7 643.0L783.2 642.0L784.5 642.0L785.3 643.2L784.8 644.6L783.6 645.3L782.8 644.2L782.0 643.7ZM788.0 625.1L788.3 626.5L786.5 627.4L786.2 625.5L786.6 623.2ZM792.4 641.7L791.8 642.0L791.1 642.4L790.7 641.7L790.1 640.8L791.3 640.7L791.9 640.6L793.0 640.8ZM791.3 634.8L791.5 634.0L792.4 633.7L792.7 634.5L792.6 635.2L791.8 635.6ZM790.0 631.4L790.3 630.7L791.0 631.1L791.1 631.6L791.6 632.3L790.9 632.8L790.3 632.3L789.8 632.0ZM791.8 633.7L791.1 634.3L789.8 634.0L789.9 632.4L791.2 632.8L792.3 632.8ZM798.9 647.0L799.2 648.5L797.3 648.5L796.6 646.6L798.4 645.5ZM789.8 646.7L791.0 646.5L791.7 645.7L792.4 646.4L792.9 647.4L791.9 647.8L791.2 648.1L790.2 647.8ZM796.6 640.4L794.9 641.1L793.8 640.0L794.5 639.0L795.4 639.3ZM798.8 645.3L798.9 646.3L797.9 646.3L797.1 645.8L796.9 644.8L797.6 643.6L798.5 644.7ZM795.0 634.2L795.9 633.9L796.2 634.8L795.5 635.4L794.5 635.1ZM791.7 639.2L790.6 639.9L790.5 638.5L791.3 637.7L792.1 638.4ZM796.1 628.8L795.5 628.7L794.8 628.1L794.6 626.7L796.1 627.2L797.3 626.7L798.3 628.0L797.0 628.9ZM793.4 637.2L792.9 639.1L791.9 637.6L790.4 636.5L792.0 635.7L793.0 635.9L794.7 636.2ZM787.3 641.5L787.8 642.1L787.1 642.7L786.3 642.5L785.7 641.7L786.1 640.7L787.2 640.3ZM789.1 624.8L789.8 624.3L790.5 624.8L790.6 625.6L789.9 625.7L789.6 625.7L788.8 625.5ZM795.1 634.5L794.5 634.2L794.4 633.7L794.1 633.0L794.9 632.7L795.6 632.9L796.3 633.5L795.4 634.0ZM784.2 637.9L784.9 638.4L784.5 639.1L783.7 639.0L783.1 638.9L781.8 638.3L782.5 637.1L783.8 637.2ZM793.9 645.1L795.3 643.6L797.2 644.7L798.1 647.0L795.7 647.0L793.5 647.4ZM791.1 635.2L791.8 633.9L793.2 632.3L793.8 634.4L794.3 635.5L793.5 636.7L792.3 635.9ZM779.2 638.1L780.7 638.8L780.7 640.3L779.5 640.3L778.5 639.6ZM798.8 647.1L798.3 647.8L797.5 647.3L797.3 646.8L797.3 646.0L798.1 645.7L798.5 646.4ZM793.8 645.8L793.0 646.0L792.1 646.7L791.9 645.6L791.6 644.8L792.5 644.9L793.3 643.9L793.8 644.9ZM796.1 642.4L795.4 642.0L795.9 641.3L796.5 641.3L796.8 641.7L797.4 642.0L796.8 642.3L796.5 642.6ZM791.3 632.7L791.5 630.9L791.4 629.4L793.0 629.2L795.1 629.6L794.6 631.7L793.2 632.9ZM788.9 631.3L788.2 630.5L789.1 630.1L790.4 629.9L790.2 631.4ZM795.3 643.6L794.9 641.5L796.6 642.8L798.7 643.4L797.2 645.0L795.6 644.8ZM797.4 646.3L797.1 645.4L798.0 645.0L798.5 645.6L799.0 646.4L798.1 646.7ZM794.3 627.5L792.0 628.0L792.1 625.7L792.6 623.2L794.7 624.7L795.9 626.3ZM780.9 641.1L781.2 640.0L782.2 640.5L783.0 641.3L782.3 642.2L781.6 642.7L780.7 642.4L779.9 641.7ZM775.4 644.8L777.1 643.9L778.5 644.7L779.2 645.7L778.5 646.8L777.5 646.5L776.0 646.7ZM787.5 641.5L789.7 641.5L791.2 643.2L790.0 645.0L787.9 645.4L786.5 643.6ZM788.4 636.5L789.3 636.1L790.1 636.7L790.3 637.9L789.1 637.9L788.5 637.3ZM794.5 640.0L793.7 639.9L793.7 639.0L794.4 639.0L794.8 639.4ZM794.9 645.2L794.0 646.0L791.8 645.4L793.5 644.0L794.9 643.9ZM783.2 648.8L782.1 648.3L782.2 647.5L782.8 646.9L783.6 647.6ZM789.7 640.6L790.3 639.5L791.5 640.0L791.1 641.0L790.8 641.6L789.9 641.5ZM780.3 644.7L781.5 644.3L783.0 644.6L782.5 646.0L781.7 646.5L780.9 646.5L780.4 645.8ZM776.3 647.8L776.9 647.0L777.2 645.5L778.4 646.3L779.0 647.1L779.3 648.3L778.3 649.3L776.7 649.4ZM787.2 633.3L787.4 634.2L789.0 635.6L787.0 635.6L785.8 636.3L785.4 635.0L784.6 633.6L786.2 633.6ZM797.1 628.3L797.8 627.8L798.6 628.7L797.8 629.7L796.7 629.1ZM790.0 629.1L789.0 628.9L789.5 627.8L790.4 628.2L790.5 628.8ZM790.6 633.9L790.2 634.8L789.5 634.4L788.6 633.7L789.8 633.5ZM792.8 630.1L792.0 629.5L792.8 628.8L793.9 628.1L794.2 629.4L793.6 630.0ZM793.7 645.4L796.2 645.4L798.3 644.5L798.5 646.9L796.9 648.2L795.7 647.0ZM778.3 649.5L776.2 649.8L776.7 647.7L776.8 646.0L778.5 646.8L780.0 646.5L779.8 648.0L779.3 648.9ZM792.4 634.2L791.6 636.4L789.4 635.8L788.1 634.1L789.8 633.2L791.5 632.2ZM789.8 646.2L789.9 647.1L788.9 647.2L788.4 647.1L787.6 646.8L787.8 645.9L788.4 645.4L789.1 645.8ZM785.0 647.5L784.3 647.2L784.1 646.2L785.0 645.4L786.3 646.0L786.2 647.4ZM785.1 640.5L785.2 640.0L785.6 639.1L786.9 639.2L786.7 640.4L786.2 641.0L785.7 642.1L784.8 641.5ZM786.9 627.2L787.8 628.8L785.9 628.7L785.0 627.6L785.9 626.5ZM794.5 635.2L794.3 635.7L793.6 635.7L793.6 635.0L793.1 634.3L793.8 633.9L794.7 633.9L795.3 634.6ZM782.7 639.3L783.1 639.6L783.4 639.8L783.6 640.6L782.8 640.8L782.4 640.2L782.5 639.7ZM790.4 647.0L789.3 647.2L788.8 645.9L790.0 645.7L790.7 645.8L790.8 646.5ZM575.6 674.2L576.4 673.1L577.6 672.8L578.3 673.8L578.0 675.2L576.7 674.9ZM575.9 674.2L576.6 674.8L576.4 675.7L575.7 676.0L575.1 675.6L574.6 675.1L575.1 674.4ZM574.1 670.2L575.0 670.6L575.7 671.0L575.6 671.8L575.1 672.2L574.3 672.5L573.2 672.2L573.8 671.2ZM575.8 678.9L575.8 680.1L575.3 680.7L574.2 681.3L574.3 680.0L574.5 679.0ZM580.0 674.5L579.0 674.2L579.4 673.4L580.1 672.8L580.7 673.8ZM579.1 683.4L577.6 684.5L576.3 684.7L575.0 683.5L575.9 681.8L578.0 681.6ZM575.1 672.6L576.7 673.0L577.8 673.4L578.1 675.2L576.3 675.3L574.8 674.5ZM579.2 678.0L578.8 676.6L579.9 675.3L581.7 675.2L582.0 676.9L582.5 678.2L581.3 679.0L579.9 679.5ZM575.3 677.4L575.8 677.4L576.0 677.8L576.1 678.7L575.1 679.2L574.6 678.2L574.9 677.6ZM579.4 679.7L580.2 680.7L579.3 681.7L578.2 681.4L577.3 680.7L577.1 679.2L578.6 679.4ZM578.3 680.1L577.5 681.0L575.8 680.9L575.0 679.1L576.5 677.9L577.8 678.6L578.8 679.1ZM573.6 673.2L575.5 672.9L576.7 674.7L575.1 675.8L573.4 676.5L573.7 674.7ZM576.8 674.4L576.6 675.7L575.8 674.8L575.3 674.0L576.0 673.0L577.2 673.4ZM575.8 679.5L577.2 680.1L577.8 681.4L577.6 683.1L575.9 682.7L574.4 683.1L573.3 681.6L574.9 680.6ZM577.7 675.1L576.5 673.5L577.9 672.2L579.0 673.1L579.4 674.5ZM573.1 671.1L572.6 670.2L572.9 669.3L573.9 669.2L574.5 669.6L574.2 670.3L574.0 670.7Z" fill="#000"/><g fill="none" stroke="#000" stroke-width="1.2"><path d="M243.0 672.4L246.4 676.5L247.1 679.5L248.5 683.3L248.4 686.8L247.8 690.1L246.4 695.5L244.4 699.2L242.4 702.2L240.1 705.3L238.3 707.7L235.3 710.0L232.9 711.7"/><path d="M228.8 717.8L231.5 715.8"/><path d="M218.0 724.2L222.1 721.9"/><path d="M205.8 732.1L211.2 734.1"/><path d="M222.1 656.9L225.8 656.6L228.8 656.2L226.1 659.6L222.1 656.9"/><path d="M235.6 658.6L239.7 657.5"/><path d="M242.4 656.5L246.4 655.5"/><path d="M237.0 692.8L239.7 688.7L242.4 687.3"/><path d="M234.9 696.2L236.3 693.4"/><path d="M245.1 695.5L246.4 691.4"/><path d="M221.8 656.8L225.6 656.4L229.8 655.8L227.8 659.8"/><path d="M235.8 657.4L240.1 656.7L243.8 656.2"/><path d="M251.7 654.2L255.5 654.9L258.2 656.2L261.7 656.8L264.4 657.2L267.7 657.6L270.7 658.0L273.7 658.0L276.4 658.4L279.7 658.8"/></g></g>
<g id="counties"><g fill="none" stroke="#596062" stroke-width="1" stroke-linejoin="round"><path d="M29.9 0.0L29.9 16.4L70.8 16.4"/><path d="M37.3 17.0L37.3 63.8L35.9 97.7"/><path d="M0.0 48.9L35.9 48.9"/><path d="M37.3 64.2L68.8 64.2"/><path d="M70.8 8.0L70.8 16.4L73.8 29.9L79.8 37.9L84.8 41.9L85.8 45.9L68.8 46.9L68.8 69.4L109.7 70.8L108.7 59.8L104.7 49.9L101.7 47.9L102.7 39.9L104.7 29.9L102.7 19.9L102.7 0.0"/><path d="M85.8 45.9L88.8 48.9L101.7 48.9"/><path d="M104.7 29.5L119.7 29.5L119.7 0.0"/><path d="M119.7 25.5L149.6 26.3L149.6 0.0"/><path d="M143.6 26.9L143.6 45.9L151.6 46.9L151.6 49.9L162.6 49.9L162.6 42.9L170.6 41.9L170.6 0.0"/><path d="M109.7 59.8L141.6 60.8L151.6 49.9"/><path d="M141.6 60.8L148.6 77.8L149.6 87.8L139.6 98.7"/><path d="M109.7 70.8L113.7 71.8L114.7 81.8L117.7 89.8L117.7 98.7"/><path d="M76.8 69.8L76.8 98.7"/><path d="M0.0 71.8L2.4 72.2L2.4 98.7"/><path d="M170.6 41.9L176.5 42.9L187.5 33.9L192.5 32.9"/><path d="M176.5 42.9L183.5 61.8L181.5 65.8L181.5 87.2L149.6 87.2"/><path d="M162.6 87.8L162.6 108.7L179.5 108.7"/><path d="M162.6 108.7L163.6 143.2"/><path d="M201.5 24.9L219.4 24.9L215.4 35.9L216.4 45.9"/><path d="M196.5 67.8L205.5 79.8L207.5 86.8"/><path d="M52.9 99.7L52.3 113.7L42.9 113.7L42.9 119.7L0.0 119.7"/><path d="M52.9 99.7L59.8 103.7L65.8 114.7L65.8 120.7L59.8 122.7L58.8 139.6L58.8 151.6L51.9 151.6L51.9 148.6L32.9 148.6L31.9 142.6L34.9 137.6L34.9 121.7L42.9 119.7"/><path d="M65.8 120.7L79.8 130.7L99.7 129.7L100.7 119.7L103.7 118.7L103.7 99.7"/><path d="M100.7 119.7L135.6 120.7L136.6 125.3L143.6 125.3"/><path d="M99.7 129.7L103.7 130.7L95.8 146.6L138.6 146.6L138.6 162.0"/><path d="M58.8 151.6L85.8 153.6L95.8 146.6"/><path d="M0.0 135.6L6.0 139.6L4.0 147.6L12.0 149.6L19.9 157.6L18.0 162.0"/><path d="M32.9 148.6L21.9 157.6"/><path d="M179.5 108.7L187.5 105.7"/><path d="M209.5 99.7L203.5 123.7L227.0 125.0"/><path d="M203.5 123.7L199.5 127.7L191.5 127.7"/><path d="M222.4 125.7L222.4 143.6L217.4 147.6L187.5 148.6"/><path d="M209.5 147.6L207.5 162.0"/><path d="M69.8 153.6L67.8 162.0"/><path d="M230.9 0.0L231.9 23.9L226.9 24.3"/><path d="M231.9 23.9L240.9 24.9L240.9 35.9"/><path d="M256.9 0.0L256.9 23.9L240.9 24.9"/><path d="M256.9 23.9L271.8 22.9"/><path d="M279.8 0.0L279.8 17.0"/><path d="M240.9 35.9L247.9 57.8L248.9 99.7"/><path d="M226.9 59.8L247.9 57.8L271.8 55.9L271.8 99.2"/><path d="M226.9 74.8L247.9 74.2"/><path d="M272.8 75.8L299.7 76.2L304.7 82.8"/><path d="M285.8 19.9L293.8 29.9L292.8 41.9L299.7 37.9L303.7 33.9L319.7 23.9L329.7 19.9L343.6 12.0L351.6 8.0L355.6 0.0"/><path d="M292.8 41.9L295.8 47.9"/><path d="M303.7 33.9L311.7 47.9L317.7 57.8L331.7 63.8L334.2 86.8"/><path d="M319.7 23.9L325.7 33.9L331.7 40.9L347.6 43.9L357.6 41.9L359.6 35.9L354.6 29.9L357.6 19.9L355.6 10.0L357.6 6.0"/><path d="M331.7 40.9L329.7 51.9L331.7 63.8"/><path d="M357.6 19.9L365.6 19.0L373.5 14.0L375.5 8.0L373.5 0.0"/><path d="M357.6 41.9L363.6 49.9L379.5 48.9L389.5 46.9L387.5 37.9L391.5 31.9L397.5 24.9L411.5 19.9L409.5 10.0L411.5 0.0"/><path d="M363.6 49.9L359.6 65.8L358.6 85.8"/><path d="M379.5 48.9L378.5 85.8"/><path d="M389.5 46.9L407.5 51.9L411.5 59.8L409.5 65.8L403.5 73.8L399.5 85.4"/><path d="M411.5 59.8L427.0 53.9"/><path d="M411.5 19.9L427.0 23.4"/><path d="M373.5 19.9L379.5 25.9L387.5 37.9"/><path d="M397.5 24.9L399.5 32.9L427.0 37.2"/><path d="M227.0 125.0L236.9 125.3L237.9 107.7L247.9 103.7L248.9 99.7"/><path d="M236.9 125.3L259.8 137.6L269.8 127.7L271.8 99.2"/><path d="M259.8 137.6L257.8 162.0"/><path d="M269.8 127.7L292.8 130.7L293.3 162.0"/><path d="M292.8 130.7L301.7 127.7L301.7 111.7L311.7 111.7L305.7 99.7"/><path d="M311.7 112.7L313.7 127.7L319.7 139.6L321.7 162.0"/><path d="M311.7 112.7L339.6 111.7L337.6 99.7L334.2 86.8"/><path d="M339.6 111.7L343.6 114.7L355.6 115.7L371.6 105.7"/><path d="M343.6 114.7L342.6 139.6L343.6 162.0"/><path d="M313.7 127.7L342.6 127.7"/><path d="M371.6 85.8L375.5 99.7"/><path d="M411.5 111.7L419.4 117.7L427.0 113.7"/><path d="M427.0 23.4L433.9 23.9L451.9 22.9L453.9 35.9L452.9 42.9"/><path d="M427.0 37.2L439.9 45.9"/><path d="M451.9 10.0L457.8 16.0L451.9 22.9"/><path d="M457.8 16.0L465.8 15.0L483.8 16.0L479.8 25.9L480.8 37.9L465.8 40.9"/><path d="M480.8 37.9L474.8 39.9L476.8 67.8L459.8 75.8L452.9 65.8L445.9 59.8L447.9 48.9"/><path d="M459.8 75.8L461.8 85.8"/><path d="M445.9 59.8L434.9 65.8L426.9 75.8L426.9 75.8"/><path d="M483.8 16.0L493.8 19.9L503.7 33.9L492.8 44.9L480.8 37.9"/><path d="M493.8 19.9L499.7 16.0L507.7 12.0L519.7 14.0L527.7 16.0L529.7 0.0"/><path d="M503.7 33.9L511.7 29.9L519.7 25.9L527.7 29.9L527.7 37.9L519.7 49.9L514.7 59.8L499.7 58.8L492.8 44.9"/><path d="M499.7 58.8L487.8 69.8L476.8 67.8"/><path d="M487.8 69.8L495.8 79.8L497.7 87.4"/><path d="M514.7 59.8L515.7 67.8L510.7 88.3"/><path d="M515.7 65.8L527.7 67.8L531.7 79.8L531.7 88.8"/><path d="M527.7 37.9L539.6 47.9L537.6 57.8L527.7 67.8"/><path d="M539.6 47.9L553.6 25.9L565.6 21.9L571.6 12.0L569.6 6.0L543.6 6.0L542.6 16.0L527.7 16.0"/><path d="M537.6 57.8L547.6 55.9L555.6 56.9L563.6 64.8L557.6 73.8L549.6 88.8"/><path d="M563.6 64.8L579.5 57.8L583.5 49.9L585.5 39.9"/><path d="M553.6 25.9L559.6 31.9L569.6 37.9L583.5 49.9"/><path d="M579.5 57.8L580.5 69.8L586.5 89.8"/><path d="M598.5 53.9L607.5 65.8L613.4 79.8L608.0 91.3"/><path d="M607.5 65.8L615.4 57.8L627.0 54.0"/><path d="M613.4 79.8L627.0 71.8"/><path d="M591.5 6.0L597.5 21.9L607.5 29.9L619.4 25.9L627.0 16.0"/><path d="M607.5 29.9L615.4 45.9L611.5 51.9"/><path d="M441.9 87.8L436.9 103.7L429.9 105.7"/><path d="M436.9 103.7L455.9 105.7L469.8 103.7L472.8 88.8"/><path d="M469.8 103.7L469.8 117.7L473.8 127.7L457.8 129.7L445.9 119.7L455.9 105.7"/><path d="M469.8 117.7L493.8 119.7L495.8 103.7L499.7 97.7L511.7 94.8L510.7 88.3"/><path d="M511.7 94.8L519.7 99.7L523.7 111.7L524.7 123.7L519.7 127.7L497.7 119.7"/><path d="M523.7 111.7L527.7 95.8L537.6 91.8L549.6 93.8L555.6 107.7L543.6 119.7L537.6 127.7L524.7 123.7"/><path d="M555.6 107.7L565.6 119.7L573.5 127.7L579.5 139.6L585.5 151.6"/><path d="M543.6 119.7L551.6 129.7L555.6 149.6"/><path d="M581.5 91.8L580.5 103.7L585.5 111.7"/><path d="M573.5 127.7L587.5 127.7"/><path d="M608.0 91.3L611.5 103.7L607.5 111.7L611.5 123.7L605.5 127.7"/><path d="M611.5 103.7L627.0 107.7"/><path d="M453.9 131.7L455.9 147.6L445.9 146.6L429.9 143.6"/><path d="M455.9 147.6L465.8 162.0"/><path d="M479.8 135.6L485.8 143.6L483.8 162.0"/><path d="M485.8 143.6L511.7 139.6L513.7 138.6"/><path d="M513.7 138.6L519.7 155.6L529.7 162.0"/><path d="M559.6 127.7L565.6 119.7"/><path d="M626.9 22.7L639.9 25.9L651.9 29.9L655.9 23.9L665.8 16.0L669.8 10.0L667.8 0.0"/><path d="M639.9 25.9L640.9 39.9L643.9 51.9L639.9 59.8L645.9 65.8L643.9 79.8"/><path d="M627.0 54.0L629.9 57.8L639.9 59.8"/><path d="M651.9 29.9L663.8 39.9L667.8 47.9L661.8 55.9L645.9 65.8"/><path d="M669.8 10.0L679.8 8.0L687.8 0.0"/><path d="M679.8 8.0L695.8 16.0L699.7 25.9L693.8 31.9L679.8 37.9L663.8 39.9"/><path d="M699.7 25.9L709.7 23.9L708.7 12.0L709.7 0.0"/><path d="M667.8 47.9L679.8 55.9L689.8 57.8"/><path d="M713.7 38.9L719.7 49.9L729.7 57.8L743.6 49.9L753.6 45.9L765.6 42.9L773.5 35.9"/><path d="M735.6 26.9L737.6 35.9L743.6 49.9"/><path d="M729.7 57.8L731.7 62.8L723.7 65.8L707.7 65.8L699.7 69.8L691.8 77.8L683.8 83.8L681.8 89.8"/><path d="M723.7 65.8L729.7 77.8L732.7 89.8"/><path d="M765.6 42.9L771.6 57.8L779.5 57.8L800.1 49.9"/><path d="M771.6 57.8L767.6 61.8L755.6 65.8L747.6 67.8L745.6 72.8L732.7 76.8"/><path d="M767.6 61.8L777.5 73.8L783.5 85.8"/><path d="M626.9 87.3L627.9 87.8"/><path d="M626.9 112.7L629.9 117.7L643.9 109.7L653.9 103.7L649.9 91.8"/><path d="M629.9 117.7L629.9 129.7L626.9 135.6"/><path d="M653.9 103.7L665.8 111.7L669.8 119.7"/><path d="M667.8 91.8L675.8 95.8L685.8 93.8L707.7 91.8L709.7 97.7L703.7 103.7"/><path d="M707.7 107.7L707.7 127.7L705.7 137.6"/><path d="M707.7 107.7L723.7 105.7L731.7 108.7L729.7 119.7L737.6 127.7"/><path d="M731.7 108.7L747.6 103.7L751.6 109.7L760.6 119.7"/><path d="M747.6 103.7L755.6 99.7L759.6 90.8"/><path d="M669.8 127.7L679.8 139.6L689.8 147.6"/><path d="M659.8 139.6L661.8 147.6"/><path d="M777.5 99.7L787.5 103.7L797.5 99.7L800.1 97.7"/><path d="M776.5 112.7L783.5 119.7L793.5 121.7L795.5 127.7L791.5 137.6L779.5 137.6L769.6 131.7L760.6 119.7"/><path d="M779.5 137.6L777.5 151.6L769.6 162.0"/><path d="M729.7 139.6L739.6 143.6L743.6 151.6L741.6 162.0"/><path d="M751.6 132.7L755.6 143.6L765.6 146.6L777.5 151.6"/><path d="M791.5 137.6L800.1 143.6"/><path d="M719.7 146.6L723.7 159.6"/><path d="M759.6 6.0L767.6 8.0L773.5 4.0L779.5 8.0L800.1 12.0"/><path d="M82.8 162.0L82.8 231.8L65.8 231.8L63.8 240.8L58.3 241.8"/><path d="M82.8 169.6L138.2 169.6L138.6 162.0"/><path d="M138.2 169.6L138.9 192.9"/><path d="M82.8 192.3L138.9 192.9"/><path d="M122.3 193.5L122.3 219.3L82.8 219.3"/><path d="M122.3 219.3L130.7 219.8L129.7 246.8"/><path d="M25.9 162.0L25.9 184.9L42.9 184.9L42.9 192.9L66.8 193.9L66.8 199.9L82.8 200.3"/><path d="M58.8 162.0L58.8 176.0L55.9 187.9"/><path d="M25.9 184.9L22.9 199.9L2.0 199.9L2.0 227.8L25.9 228.8L25.9 238.8L35.9 239.8"/><path d="M0.0 169.0L25.9 169.0"/><path d="M57.8 207.9L53.9 221.8L51.9 227.8L57.8 227.8L58.3 241.8"/><path d="M25.9 228.8L31.9 226.8L57.8 227.8"/><path d="M76.8 240.8L78.8 255.8L81.8 257.8L81.8 279.7L85.8 280.7L85.8 289.7L81.8 293.7L79.8 305.6L77.8 310.6"/><path d="M76.8 240.8L129.7 240.4"/><path d="M81.8 264.1L115.7 264.7"/><path d="M4.0 251.8L4.0 265.7L10.0 266.7L9.0 277.7L33.9 278.7L32.9 299.6L43.9 300.6L47.9 307.6L51.9 324.0"/><path d="M32.9 251.8L33.9 261.7L37.9 269.7L35.9 277.7"/><path d="M57.8 249.8L52.9 261.7L57.8 270.7L41.9 270.7L40.9 277.7"/><path d="M57.8 270.7L65.8 273.7L73.8 283.7L81.8 293.7"/><path d="M77.8 310.6L109.7 310.6L110.2 324.0"/><path d="M71.8 310.6L71.8 324.0"/><path d="M31.9 299.6L30.9 312.6L10.0 313.6L11.5 324.0"/><path d="M0.0 277.7L9.0 277.7"/><path d="M167.6 181.9L173.5 176.0L185.5 174.0L197.5 178.0L199.5 195.9"/><path d="M199.5 162.0L201.5 170.0L199.5 178.0"/><path d="M155.6 196.9L186.5 197.9L186.5 219.8"/><path d="M220.4 191.9L220.4 231.8"/><path d="M180.5 232.8L180.5 259.7L184.5 260.7L184.5 270.7L144.6 271.3"/><path d="M147.6 253.8L142.6 261.7L143.6 271.3L144.6 305.6L149.6 306.6L149.6 313.8"/><path d="M208.5 232.8L208.5 244.8L212.4 244.8L213.4 269.7L227.0 268.7"/><path d="M182.5 271.2L213.4 274.7L216.4 276.7"/><path d="M182.5 271.2L180.5 303.6L196.5 304.6L196.5 324.0"/><path d="M166.6 305.6L180.5 304.0"/><path d="M216.4 267.7L216.4 308.6L227.0 308.6"/><path d="M196.5 304.6L216.4 305.6"/><path d="M130.7 283.7L143.6 281.7"/><path d="M127.7 297.6L126.7 313.6L149.6 313.8"/><path d="M137.6 275.7L137.6 281.7"/><path d="M119.7 273.7L129.7 281.7L130.7 283.7"/><path d="M165.6 251.8L180.5 252.2"/><path d="M207.5 162.0L227.0 168.0"/><path d="M228.9 173.0L227.9 192.9L227.4 193.1"/><path d="M227.4 193.1L246.9 194.9L250.9 209.9L249.4 232.3"/><path d="M246.9 194.9L255.9 187.9L263.8 180.0L263.8 169.0"/><path d="M263.8 180.0L271.8 185.9L281.8 188.9L281.3 232.3"/><path d="M250.9 209.9L258.8 205.9L261.8 199.9L271.8 197.9L281.8 198.9"/><path d="M281.8 193.9L291.8 194.9L290.8 183.9L295.8 174.0L293.3 162.0"/><path d="M291.8 194.9L303.7 195.9L308.7 201.9L309.7 231.8"/><path d="M303.7 195.9L308.7 191.9L319.7 188.9L329.7 189.9L339.6 195.9L338.6 231.8"/><path d="M308.7 191.9L305.7 181.9L307.7 172.0L311.7 162.0"/><path d="M339.6 195.9L349.6 191.9L361.6 191.9L367.6 193.9L367.1 232.3"/><path d="M329.7 189.9L333.7 180.0L339.6 175.0L349.6 177.0L361.6 174.0L365.6 168.0L365.6 162.0"/><path d="M361.6 174.0L359.6 181.9L362.6 191.9"/><path d="M367.6 193.9L375.5 191.9L385.5 193.9"/><path d="M327.7 170.0L331.7 174.0L339.6 175.0"/><path d="M395.5 193.9L396.5 209.9L407.5 205.9L417.4 199.9L427.0 205.6"/><path d="M409.5 170.0L407.5 187.9L411.5 197.9L417.4 199.9"/><path d="M396.5 209.9L397.0 232.3"/><path d="M228.9 173.0L234.9 172.0"/><path d="M233.9 232.8L232.9 244.8L227.9 248.8L226.9 266.7"/><path d="M227.0 268.7L254.9 267.7"/><path d="M249.4 232.3L247.9 244.8L252.9 245.8L252.9 253.8L281.8 253.8L281.3 232.3"/><path d="M254.9 253.8L254.9 267.7L253.9 274.7L268.8 275.7L268.8 279.7L295.8 279.7"/><path d="M282.8 253.8L284.8 279.7"/><path d="M249.9 275.7L247.9 287.7L226.9 287.3"/><path d="M247.9 287.7L247.9 313.6L226.9 314.6"/><path d="M268.8 279.7L268.8 313.6L255.9 314.0L255.9 324.0"/><path d="M268.8 313.6L292.8 315.6"/><path d="M301.7 240.8L307.7 241.8L313.7 247.8L319.7 254.8L329.7 253.8L339.6 248.8L345.6 247.8L353.6 251.8L361.6 254.8"/><path d="M353.6 251.8L348.6 261.7L343.6 270.7L343.6 292.7"/><path d="M298.7 269.7L343.6 270.7"/><path d="M297.7 292.7L335.6 294.7L374.5 293.7L390.5 293.5"/><path d="M335.6 294.7L335.6 322.8"/><path d="M374.5 261.7L375.1 293.7L375.0 324.0"/><path d="M367.1 232.3L367.2 249.8"/><path d="M390.5 270.7L399.5 271.7L407.5 268.7L413.4 273.7L416.4 269.7L415.4 293.7L390.5 293.5"/><path d="M416.4 277.7L427.0 278.2"/><path d="M397.0 232.3L399.5 270.7"/><path d="M427.0 299.9L421.4 299.6L415.4 309.6L407.5 315.6L399.5 324.0"/><path d="M335.6 322.8L374.5 321.6"/><path d="M292.8 315.6L307.7 316.6L311.2 324.0"/><path d="M426.9 175.8L437.9 174.0"/><path d="M437.9 174.0L439.9 181.9L437.9 197.9L426.9 201.6"/><path d="M437.9 197.9L445.9 199.9L457.8 201.9L463.8 204.9"/><path d="M427.0 205.6L429.9 219.8L432.9 233.3"/><path d="M465.8 187.9L466.8 205.9L467.8 231.8"/><path d="M459.8 162.0L457.8 172.0L465.8 187.9L475.8 185.9L487.8 183.9L499.7 181.9L511.7 170.0L519.7 162.0"/><path d="M487.8 183.9L493.8 193.9L491.8 201.9L479.8 207.9L473.8 213.9"/><path d="M491.8 201.9L499.7 209.9L503.7 219.8L507.7 228.8"/><path d="M499.7 181.9L507.7 195.9L517.7 199.9L505.7 217.9"/><path d="M517.7 199.9L523.7 187.9L539.6 166.0L543.6 162.0"/><path d="M523.7 187.9L531.7 195.9L535.6 201.9L523.7 219.8L517.7 230.8"/><path d="M535.6 201.9L543.6 200.9L551.6 189.9L557.6 183.9"/><path d="M551.6 207.9L555.6 213.9L553.6 232.8"/><path d="M551.6 207.9L571.6 206.9L577.5 201.9L573.5 187.9L567.6 178.0"/><path d="M571.6 206.9L583.5 212.9"/><path d="M547.6 170.0L547.6 178.0L539.6 181.9L531.7 195.9"/><path d="M529.7 221.8L533.7 232.8"/><path d="M591.5 162.0L597.5 172.0L611.5 178.0L616.4 184.9"/><path d="M627.0 210.4L619.4 217.9L611.5 225.8L607.5 233.2"/><path d="M512.7 233.8L512.7 243.8L519.7 244.8L519.7 255.8L527.7 256.8L527.7 269.7L493.8 269.7"/><path d="M527.7 239.8L531.7 240.8"/><path d="M543.6 233.8L542.6 247.8L539.6 261.7L537.6 265.7L551.6 265.7L557.6 269.7L558.6 247.8L559.6 233.8"/><path d="M527.7 269.7L523.7 283.7L529.7 291.7L529.7 301.6L527.7 313.6"/><path d="M557.6 270.2L557.6 313.6"/><path d="M558.6 247.8L565.6 244.8L575.5 246.8L585.5 253.8L591.5 263.7L581.5 273.7L567.6 272.7L557.6 270.2"/><path d="M581.5 273.7L587.5 279.7L587.5 291.7L599.5 291.7"/><path d="M531.7 286.7L557.6 284.7L587.5 285.7"/><path d="M591.5 263.7L599.5 255.8L595.5 241.8L591.5 235.8"/><path d="M599.5 255.8L613.4 251.8L619.4 241.8L623.4 233.8"/><path d="M613.4 251.8L617.4 265.7L616.4 275.7L627.0 276.7"/><path d="M591.5 263.7L596.5 273.7L607.5 278.7"/><path d="M499.7 241.8L495.8 251.8L493.8 259.7"/><path d="M523.7 273.7L517.7 281.7L507.7 283.7L497.7 295.7"/><path d="M529.7 301.6L503.7 301.6L499.7 309.6"/><path d="M587.5 291.7L585.5 309.6L579.5 313.6L557.6 313.6"/><path d="M527.7 313.6L551.6 313.6"/><path d="M432.9 233.3L435.9 237.8L431.9 247.8L431.9 265.7L446.9 267.7L446.9 275.7L451.9 279.7L448.9 289.7L449.9 303.6L469.8 302.6L471.8 289.7"/><path d="M427.0 278.2L429.9 277.7L431.9 265.7"/><path d="M427.0 299.9L431.9 309.6L435.9 317.6"/><path d="M449.9 303.6L449.9 317.6"/><path d="M469.8 302.6L479.8 317.6L481.8 324.0"/><path d="M471.8 257.8L459.8 255.8L446.9 267.7"/><path d="M487.8 281.7L479.8 289.7L471.8 289.7"/><path d="M627.9 162.0L631.9 172.0L632.9 181.0"/><path d="M635.9 193.9L626.9 206.5"/><path d="M635.9 193.9L626.9 192.4"/><path d="M627.0 210.4L629.9 219.8L639.9 233.3"/><path d="M653.9 191.9L665.8 185.9L671.8 187.9L679.8 197.9L687.8 207.9L681.8 219.8L684.8 227.8"/><path d="M653.9 191.9L657.8 207.9L665.8 213.9L669.8 231.8"/><path d="M679.8 197.9L689.8 195.9L695.8 189.9L695.8 183.9"/><path d="M687.8 207.9L703.7 201.9L711.7 209.9L717.7 215.9"/><path d="M695.8 189.9L707.7 191.9L713.7 193.9"/><path d="M729.7 191.9L727.7 201.9L729.7 209.9"/><path d="M729.7 191.9L739.6 187.9L755.6 185.9L765.6 180.0L777.5 179.0L791.5 181.9L800.1 180.0"/><path d="M755.6 185.9L757.6 197.9L753.6 214.9"/><path d="M777.5 179.0L775.5 197.9L771.6 215.5"/><path d="M791.5 181.9L797.5 197.9L800.1 201.9"/><path d="M687.8 162.0L691.8 172.0L699.7 170.0L711.7 166.0L719.7 162.0"/><path d="M735.6 162.0L737.6 170.0L735.6 177.0"/><path d="M684.8 227.8L687.8 241.8L691.8 257.8L693.8 265.7L677.8 276.7"/><path d="M709.7 225.8L714.7 233.8L717.7 243.8L719.7 249.8"/><path d="M738.6 214.9L738.6 245.8"/><path d="M691.8 257.8L705.7 249.8L719.7 249.8"/><path d="M721.7 255.8L723.7 269.7L731.7 277.7L739.6 265.7L743.6 253.8L738.6 245.8"/><path d="M731.7 277.7L727.7 289.7L737.6 301.6L735.6 309.6L727.7 317.6"/><path d="M727.7 289.7L711.7 299.6L700.7 305.6"/><path d="M739.6 265.7L751.6 275.7L764.6 276.7"/><path d="M775.5 243.8L771.6 257.8L767.6 269.7"/><path d="M775.5 243.8L791.5 237.8L793.5 225.8L791.5 217.9"/><path d="M775.5 243.8L787.5 247.8L800.1 245.8"/><path d="M764.6 276.7L771.6 289.7L761.6 299.6L759.6 309.6L765.6 313.6"/><path d="M737.6 301.6L759.6 309.6"/><path d="M771.6 289.7L783.5 291.7"/><path d="M787.5 247.8L789.5 265.7L795.5 281.7L800.1 285.7"/><path d="M626.9 245.8L628.4 255.3"/><path d="M626.9 237.8L633.9 237.8L639.9 233.3"/><path d="M628.4 255.3L629.9 255.8L647.9 253.8L655.9 253.8"/><path d="M629.9 255.8L633.9 269.7L631.9 279.7L639.9 285.7L637.9 297.6L631.9 301.6"/><path d="M647.9 253.8L649.9 265.7L658.8 270.7"/><path d="M639.9 285.7L651.9 279.7L658.8 270.7"/><path d="M651.9 279.7L665.8 291.7L673.8 285.7L677.8 276.7"/><path d="M665.8 291.7L671.8 305.6L679.8 313.6L681.8 324.0"/><path d="M673.8 285.7L687.8 291.7L695.8 293.7"/><path d="M671.8 305.6L659.8 309.6L653.9 313.6L651.9 324.0"/><path d="M637.9 297.6L645.9 307.6L653.9 313.6"/><path d="M11.5 324.0L13.0 339.0L43.9 339.6L44.9 324.0"/><path d="M43.9 339.6L52.9 340.0L52.4 409.3"/><path d="M13.0 339.0L12.0 371.9L14.0 375.9L51.9 375.5"/><path d="M0.0 346.9L12.0 347.5"/><path d="M14.0 375.9L8.0 385.8L0.0 391.8"/><path d="M52.9 360.9L68.8 362.9"/><path d="M110.2 324.0L110.7 354.9L103.7 355.9L103.7 385.8L120.7 381.8L126.7 380.9"/><path d="M79.8 362.9L103.7 363.3"/><path d="M103.7 385.8L108.7 391.8L109.7 400.8L92.8 401.4L91.8 409.4L74.8 409.4"/><path d="M109.7 400.8L111.7 416.8L126.7 416.8"/><path d="M91.8 409.4L88.8 423.7L88.8 439.7L105.7 440.1"/><path d="M111.7 416.8L103.7 425.7L107.7 435.7L106.7 443.7L111.7 449.7L119.7 452.7L127.7 447.7"/><path d="M95.8 448.7L106.7 447.7"/><path d="M95.8 448.7L95.8 459.6L88.8 460.6"/><path d="M131.7 324.0L129.7 332.0L166.6 333.0L165.6 324.0"/><path d="M166.6 333.0L165.6 337.0L149.6 338.0L149.6 349.9L172.6 350.3"/><path d="M137.6 343.9L143.6 343.0L145.6 339.0"/><path d="M152.6 350.9L147.6 379.9"/><path d="M136.6 376.9L173.5 389.8"/><path d="M127.7 385.8L135.6 383.8L136.6 376.9"/><path d="M127.7 407.8L157.6 418.8"/><path d="M177.5 334.0L196.5 334.0L196.5 324.0"/><path d="M196.5 334.0L196.5 368.9L207.5 363.9L227.0 361.9"/><path d="M177.5 349.9L196.5 349.9"/><path d="M220.4 324.0L220.4 343.9L227.0 343.9"/><path d="M178.5 373.9L186.5 374.9L186.5 383.8L210.5 384.2L210.5 486.0"/><path d="M200.5 368.9L199.5 383.8"/><path d="M186.5 383.8L179.5 387.8L173.5 397.8L167.6 411.8L163.6 420.7L179.5 418.3"/><path d="M179.5 418.3L210.5 416.8"/><path d="M179.5 416.8L180.5 447.7L210.5 448.1"/><path d="M210.5 399.8L218.4 399.8L218.4 392.8L227.0 392.8"/><path d="M127.7 447.7L139.6 439.7L155.6 436.7"/><path d="M175.5 447.7L178.5 463.6L179.5 471.6"/><path d="M157.6 459.6L175.5 447.7"/><path d="M127.7 453.7L142.6 454.7L142.6 463.6"/><path d="M115.7 453.7L117.7 463.6L109.7 468.1"/><path d="M179.5 477.6L210.5 478.6"/><path d="M52.4 409.3L41.9 427.7L40.9 446.7L65.8 447.7"/><path d="M65.8 409.8L57.8 427.7L55.9 437.7L59.8 446.7"/><path d="M5.0 409.8L6.0 435.7L16.0 439.7L18.0 452.7"/><path d="M40.9 435.7L23.9 451.7L18.0 452.7"/><path d="M49.9 450.7L49.4 463.6"/><path d="M0.0 419.8L5.0 420.7"/><path d="M29.9 463.6L25.9 475.6L19.9 486.0"/><path d="M49.4 463.6L45.9 475.6L47.9 486.0"/><path d="M109.7 468.1L105.7 475.6L99.7 486.0"/><path d="M226.9 338.0L254.9 338.4L254.9 348.9L269.8 349.5L271.8 359.9L257.8 360.9L257.8 383.8"/><path d="M231.9 344.9L231.9 359.9L226.9 360.9L226.9 383.8"/><path d="M226.9 383.8L285.8 383.8"/><path d="M247.9 384.8L247.9 416.8L226.9 416.8"/><path d="M247.9 416.8L281.8 417.4"/><path d="M269.8 349.5L287.8 343.9"/><path d="M311.2 324.0L312.7 362.9L288.8 362.3"/><path d="M312.7 328.0L335.6 328.4L343.6 334.0L343.6 348.9L351.6 349.5L351.6 355.9"/><path d="M312.7 362.9L320.7 363.9L320.7 396.8L321.7 407.8L328.7 409.3"/><path d="M332.7 362.9L335.6 356.9L351.6 355.9L359.6 358.9L359.6 366.9L363.6 371.9L367.6 377.9"/><path d="M375.0 324.0L387.5 334.0L379.5 343.9L375.5 351.9L367.6 359.9L359.6 366.9"/><path d="M387.5 334.0L397.5 336.0"/><path d="M427.0 332.0L416.4 340.0L417.4 345.9"/><path d="M285.8 411.8L295.8 409.8L303.7 403.8L319.7 396.8"/><path d="M295.8 409.8L293.8 419.8L301.7 429.7L303.7 441.7L311.7 445.7L317.7 441.7L319.7 451.7L329.7 447.7"/><path d="M328.7 409.3L323.7 417.8L323.7 429.7L319.7 435.7L327.7 441.7L327.7 455.7L343.6 456.1"/><path d="M327.7 408.8L351.6 408.8L351.6 421.7L359.6 421.7"/><path d="M347.6 425.3L346.6 441.7L344.6 456.1L343.6 472.6L347.6 472.6L345.6 486.0"/><path d="M347.6 425.3L380.5 424.7"/><path d="M381.5 389.8L385.5 401.8L392.5 404.8L392.5 423.7"/><path d="M392.5 404.8L414.4 404.2L418.4 411.8"/><path d="M380.5 424.7L380.5 439.7L377.5 449.7L373.5 454.7L351.6 456.7L350.6 471.6"/><path d="M380.5 439.7L388.5 440.7L391.5 453.7L397.5 465.6L399.5 475.6"/><path d="M388.5 440.7L415.4 438.7"/><path d="M427.0 384.2L421.4 391.8L419.4 403.8"/><path d="M319.7 451.7L311.7 459.6L305.7 463.6L309.7 471.6L307.7 479.6L307.7 486.0"/><path d="M278.8 471.6L309.7 472.0"/><path d="M226.9 448.3L277.8 448.7"/><path d="M240.9 417.8L240.9 486.0"/><path d="M226.9 478.6L240.9 478.6"/><path d="M399.5 475.6L407.5 465.6L419.4 463.6L427.0 467.6"/><path d="M399.5 475.6L393.5 481.6L391.5 486.0"/><path d="M429.9 324.0L433.9 336.0"/><path d="M449.9 330.0L453.9 336.0L465.8 332.0L487.8 333.0L485.8 342.0L483.8 349.9L475.8 357.9"/><path d="M453.9 336.0L445.9 345.9L443.9 349.9L453.9 353.9L455.9 357.9"/><path d="M487.8 324.0L487.8 333.0"/><path d="M485.8 342.0L505.7 343.0"/><path d="M475.8 357.9L473.8 365.9L463.8 366.9L463.8 373.9L459.8 381.8L448.9 382.8L448.9 391.8L444.9 392.8L444.9 400.8"/><path d="M473.8 365.9L508.7 366.3"/><path d="M483.8 366.9L483.8 399.8L444.9 400.8L426.9 400.8"/><path d="M427.0 384.2L431.9 377.9"/><path d="M485.8 400.3L515.7 400.2"/><path d="M456.9 401.8L456.9 431.7L426.9 432.7L426.9 432.7"/><path d="M456.9 431.7L465.8 432.7L465.8 454.7L457.8 463.6"/><path d="M485.8 400.3L487.8 432.7L480.8 435.7L480.8 446.7L489.8 451.7L499.7 454.7L499.7 486.0"/><path d="M487.8 432.7L511.7 433.7"/><path d="M465.8 454.7L471.8 455.7L473.8 447.7L480.8 446.7"/><path d="M499.7 461.6L507.7 461.6L508.7 456.7L529.7 455.7"/><path d="M433.9 453.7L439.9 455.7L445.9 461.6L457.8 463.6L459.8 471.6L467.8 477.6L499.7 478.0"/><path d="M529.7 324.0L529.7 343.9L539.6 344.9"/><path d="M511.7 371.9L530.7 372.5L535.6 387.8L543.1 391.3"/><path d="M519.7 395.8L527.7 393.8L535.6 387.8"/><path d="M539.6 349.9L539.6 361.9L558.6 368.4"/><path d="M531.7 371.9L543.6 363.9"/><path d="M543.1 391.3L542.6 421.7L520.7 421.7"/><path d="M542.6 421.7L555.6 422.7L554.6 441.7L527.7 445.7"/><path d="M558.6 368.4L577.5 366.9L576.5 379.9L569.6 383.8L569.6 391.8L560.6 391.8"/><path d="M576.5 379.9L585.5 381.8L597.5 383.8L599.5 389.8"/><path d="M569.6 391.8L587.5 393.8L587.5 409.8L569.6 411.8L567.6 417.8L575.5 425.7L587.5 431.7L591.5 439.7L599.5 437.7"/><path d="M587.5 393.8L603.5 392.8L619.4 393.8L619.4 381.8L627.0 380.9"/><path d="M587.5 409.8L597.5 411.8L607.5 407.8"/><path d="M597.5 411.8L597.5 423.7L611.5 423.7L615.4 429.7L627.0 435.7"/><path d="M591.5 439.7L583.5 445.7L575.5 451.7L559.6 451.7L555.6 443.7"/><path d="M559.6 451.7L558.6 486.0"/><path d="M575.5 451.7L577.5 463.6L587.5 465.6L587.5 486.0"/><path d="M599.5 437.7L603.5 447.7L611.5 451.7L619.4 459.6L627.0 461.6"/><path d="M587.5 465.6L599.5 461.6L603.5 447.7"/><path d="M619.4 459.6L619.4 486.0"/><path d="M527.7 445.7L539.6 446.7L555.6 443.7"/><path d="M533.7 463.6L559.6 462.6"/><path d="M551.6 324.0L551.6 340.0"/><path d="M591.5 345.9L599.5 359.9L611.5 371.9L617.4 381.8"/><path d="M611.5 357.9L627.0 373.9"/><path d="M599.5 330.0L609.5 342.0L615.4 353.9"/><path d="M586.5 351.9L591.5 363.9L585.5 381.8"/><path d="M626.9 330.0L639.9 328.0L655.9 330.0L665.8 324.0"/><path d="M639.9 328.0L643.9 340.0L635.9 345.9L627.9 353.9"/><path d="M655.9 330.0L659.8 342.0L669.8 343.9L676.8 345.9"/><path d="M643.9 340.0L651.9 351.9L655.9 360.9"/><path d="M627.9 359.9L629.9 367.9L628.4 368.5"/><path d="M628.4 368.5L639.9 370.9L659.8 368.9L667.8 371.9L669.8 381.8L661.8 387.8L665.8 395.8L673.8 399.8L677.8 403.8"/><path d="M639.9 370.9L640.9 393.8"/><path d="M626.9 396.5L640.9 393.8L648.9 393.8L661.8 387.8"/><path d="M648.9 393.8L653.9 411.8L663.8 443.7"/><path d="M653.9 411.8L669.8 409.8L677.8 417.8"/><path d="M626.9 410.8L627.9 415.8"/><path d="M637.9 429.7L651.9 419.8L653.9 411.8"/><path d="M683.8 330.0L689.8 336.0L695.8 349.9L701.7 355.9L707.7 353.9L717.7 349.9L727.7 347.9L731.7 346.9"/><path d="M683.8 330.0L693.8 326.0L699.7 324.0"/><path d="M709.7 330.0L717.7 349.9"/><path d="M701.7 355.9L705.7 367.9L711.7 377.9L719.7 381.8L729.7 381.8L737.6 385.8L735.6 397.8L733.7 407.8L735.6 419.8L731.7 423.7L723.7 427.7L721.7 435.7L715.7 443.7L709.7 451.7L707.7 457.7"/><path d="M729.7 381.8L711.7 393.8L699.7 389.8L697.7 383.8L705.7 381.8L711.7 377.9"/><path d="M697.7 383.8L693.8 371.9L691.8 364.9"/><path d="M679.8 369.9L693.8 371.9"/><path d="M699.7 389.8L703.7 397.8L713.7 409.8L715.7 421.7L711.7 427.7L695.8 429.7L683.8 431.7L679.8 423.7"/><path d="M687.8 397.8L699.7 389.8"/><path d="M737.6 385.8L747.6 389.8L759.6 385.8L765.6 383.8"/><path d="M735.6 419.8L743.6 425.7L747.6 437.7L751.6 443.7L747.6 451.7L739.6 457.7L737.6 465.6"/><path d="M743.6 425.7L747.6 417.8L759.6 414.8L771.6 415.8L765.6 435.7L763.6 441.7L751.6 443.7"/><path d="M771.6 415.8L783.5 407.8L791.5 403.8"/><path d="M763.6 441.7L775.5 447.7L787.5 453.7L795.5 463.6L800.1 469.6"/><path d="M751.6 451.7L759.6 459.6L758.6 467.6"/><path d="M683.8 431.7L681.8 437.7L693.8 439.7L699.7 451.7L707.7 457.7"/><path d="M711.7 427.7L721.7 435.7"/><path d="M639.9 443.7L641.9 455.7L635.9 471.6L626.9 472.5"/><path d="M641.9 455.7L651.9 451.7L663.8 443.7"/><path d="M651.9 451.7L655.9 463.6L651.9 475.6L658.8 486.0"/><path d="M673.8 455.7L671.8 471.6L675.8 486.0"/><path d="M699.7 463.6L701.7 471.6L711.7 473.6L723.7 467.6L724.2 465.6"/><path d="M701.7 471.6L699.7 486.0"/><path d="M724.2 465.6L735.6 477.6L738.6 486.0"/><path d="M737.6 465.6L743.6 475.6L759.6 477.6L758.6 467.6"/><path d="M767.6 472.6L771.6 486.0"/><path d="M729.7 381.8L751.6 361.9L779.5 337.5"/><path d="M743.6 324.0L741.6 340.0L743.6 345.9"/><path d="M745.6 330.0L759.6 326.0L765.6 330.0L779.5 337.5"/><path d="M775.5 385.8L800.1 365.9"/><path d="M106.7 486.0L106.7 494.0L180.5 494.4L185.5 498.0L185.5 517.9L210.5 517.9L210.5 486.0"/><path d="M106.7 494.0L105.7 517.9L104.7 533.9L112.7 534.3L112.7 556.8L80.8 557.4"/><path d="M105.7 525.9L141.6 524.9L161.6 521.5L185.5 518.9"/><path d="M141.6 524.9L141.6 587.7"/><path d="M112.7 556.8L156.6 557.2L157.6 552.8L173.5 551.8L174.5 549.8L227.0 549.2"/><path d="M161.6 521.5L161.6 537.9L163.6 552.8"/><path d="M178.5 519.9L178.5 531.9L185.5 537.9L190.5 541.9L190.5 549.4"/><path d="M156.6 557.2L159.6 571.8L167.6 579.8L172.6 583.7L173.5 588.1"/><path d="M185.5 549.8L186.0 588.4"/><path d="M204.5 517.9L202.5 549.6"/><path d="M202.5 549.6L200.5 556.8L208.5 557.5"/><path d="M210.5 517.9L227.0 516.4"/><path d="M119.7 557.8L118.7 588.9"/><path d="M73.8 533.9L104.7 533.9"/><path d="M63.8 524.9L74.8 533.9L73.8 555.8L80.8 561.8L81.8 587.7"/><path d="M67.8 509.9L87.8 511.9L97.7 517.9L105.7 517.9"/><path d="M51.9 557.8L67.8 555.8L73.8 555.8"/><path d="M10.0 505.6L10.0 563.8L16.0 568.8"/><path d="M0.0 505.0L10.0 505.6"/><path d="M18.0 492.0L19.9 502.0L29.9 509.9L41.9 504.0L42.9 515.9L38.9 523.9L31.9 525.9L29.9 535.9L23.9 543.8L27.9 553.8L19.9 561.8L16.0 568.8"/><path d="M47.9 486.0L47.9 498.0L41.9 504.0"/><path d="M25.9 588.7L25.9 601.7L0.0 602.1"/><path d="M25.9 601.7L29.9 613.7L29.9 629.6L39.9 637.6L33.9 645.6"/><path d="M38.9 588.7L31.9 583.7L25.9 588.7"/><path d="M71.8 589.7L67.8 603.7L61.8 609.7L59.8 617.7L65.8 625.6"/><path d="M96.7 589.7L96.7 609.7L91.8 619.7L85.8 625.6L85.8 636.6"/><path d="M65.8 613.7L95.8 613.7"/><path d="M118.7 588.9L117.3 634.6"/><path d="M92.8 619.7L117.3 620.1"/><path d="M134.6 589.7L139.6 603.7L140.6 613.7L140.6 646.0"/><path d="M140.6 613.7L171.6 618.7"/><path d="M186.0 588.4L208.5 589.3"/><path d="M208.5 557.5L208.5 595.7L227.0 596.0"/><path d="M227.0 616.2L195.5 618.7L191.5 625.6"/><path d="M209.5 596.7L210.5 648.0"/><path d="M35.9 593.7L43.9 594.7L46.9 601.7L39.9 603.7L36.9 598.7L35.9 593.7"/><path d="M41.9 609.7L51.9 613.7L59.8 617.7"/><path d="M0.0 547.8L6.0 555.8L10.0 563.8"/><path d="M227.0 516.4L240.9 515.9L240.9 496.0"/><path d="M239.9 515.9L271.8 509.9"/><path d="M239.9 515.9L238.9 548.8L227.0 549.2"/><path d="M238.9 548.8L274.8 548.8"/><path d="M246.9 549.8L246.9 595.7L227.0 596.0"/><path d="M246.9 588.7L275.8 588.7"/><path d="M242.9 596.7L242.9 612.7L227.0 616.2"/><path d="M242.9 612.7L277.8 612.1"/><path d="M307.7 486.0L301.7 494.0L303.7 504.0L297.7 511.9L295.8 517.9L301.7 525.9L303.7 533.9L311.7 539.9L315.7 545.8L313.7 555.8L310.7 565.8L312.7 575.8L310.7 585.7L312.7 595.7"/><path d="M274.8 525.9L300.7 526.3"/><path d="M303.7 500.0L333.7 500.4L337.6 486.0"/><path d="M333.7 500.4L335.6 513.9L344.6 514.9L343.6 525.9L339.6 535.9L337.6 543.8L331.7 551.8L327.7 559.8L319.7 567.8"/><path d="M344.6 514.9L389.5 514.3L392.5 502.0L391.5 494.0L369.6 494.4L363.6 486.0"/><path d="M389.5 514.3L390.5 531.9L394.5 540.9L427.0 541.5"/><path d="M389.5 521.9L379.5 525.9L371.6 533.9L369.6 543.8L363.6 551.8L355.6 561.8L341.6 567.8L329.7 562.8"/><path d="M420.4 529.9L420.4 541.5"/><path d="M405.5 541.9L405.5 587.7"/><path d="M339.6 566.3L337.6 586.7"/><path d="M339.6 566.3L400.5 565.4L401.5 571.8L405.5 571.8"/><path d="M277.8 578.8L284.8 578.2L284.8 574.8L310.7 574.8"/><path d="M312.7 595.7L307.7 605.7L307.7 615.7"/><path d="M399.5 589.3L399.5 641.6"/><path d="M367.6 589.7L361.6 597.7L359.6 609.7L363.6 621.6L367.6 629.6"/><path d="M427.9 486.0L427.9 495.0L433.9 495.0L433.9 502.0L426.9 502.7"/><path d="M457.8 486.0L457.8 495.0L464.8 495.0L465.8 502.0L473.8 503.0L473.8 509.9L481.8 509.9"/><path d="M443.9 503.0L442.9 511.9L446.9 523.9L445.9 533.9L442.9 549.8"/><path d="M499.7 486.0L497.7 498.0L487.8 502.0L481.8 509.9L481.8 519.9L477.8 531.9L473.8 533.9L473.8 569.8"/><path d="M445.9 533.9L499.7 533.5"/><path d="M500.7 525.9L500.7 560.8L523.7 560.8"/><path d="M500.7 525.9L519.7 524.9"/><path d="M442.9 549.8L443.5 587.7"/><path d="M443.9 571.8L479.8 570.8L481.8 563.8L489.8 562.8L495.8 564.8L500.7 560.8"/><path d="M487.8 570.8L495.8 570.8L494.3 588.7"/><path d="M527.7 496.0L537.6 502.0L538.6 505.9L573.5 505.5L587.5 511.9L583.5 532.9"/><path d="M537.6 505.9L537.6 519.9L533.7 520.9L536.6 532.9L606.0 533.1"/><path d="M559.6 505.7L561.6 517.9L565.6 523.9L565.6 532.3"/><path d="M558.6 486.0L559.6 505.7"/><path d="M573.5 486.0L573.5 505.5"/><path d="M585.5 506.9L611.5 506.5L611.5 496.0L627.0 496.0"/><path d="M611.5 506.5L605.5 517.9L605.5 532.3L606.5 582.7"/><path d="M544.6 533.9L546.6 548.8L557.6 549.8L605.5 548.2"/><path d="M572.6 532.9L575.5 547.8"/><path d="M527.7 543.8L545.6 543.8"/><path d="M558.6 549.8L558.6 564.8L537.6 565.8L537.6 580.8"/><path d="M566.6 565.8L566.6 580.8L531.7 581.8"/><path d="M567.6 580.3L606.5 582.7"/><path d="M595.5 549.8L583.5 559.8L575.5 569.8L567.6 580.3"/><path d="M550.6 581.8L550.6 596.7"/><path d="M578.5 581.8L577.5 615.7"/><path d="M598.5 581.8L599.5 616.7"/><path d="M621.4 515.9L621.4 533.9L606.0 533.1"/><path d="M606.5 558.8L627.0 558.5"/><path d="M427.9 588.7L428.9 633.6"/><path d="M454.9 588.7L454.9 613.7"/><path d="M494.3 588.7L485.8 603.7L486.8 608.7"/><path d="M467.8 613.7L463.8 621.6L467.8 633.6L459.8 641.6"/><path d="M495.8 603.7L499.7 613.7L499.7 626.6L495.8 627.6L495.8 648.0"/><path d="M499.7 626.6L503.7 628.0L503.2 646.0"/><path d="M519.7 623.6L533.7 623.6L531.7 633.6L529.7 641.6L535.6 648.0"/><path d="M539.6 621.6L543.6 629.6L549.6 631.6L548.6 648.0"/><path d="M583.5 617.7L579.5 629.6L571.6 633.6"/><path d="M605.5 617.7L607.5 633.6"/><path d="M553.6 625.6L557.6 633.6L565.6 637.6"/><path d="M635.9 486.0L635.9 511.9L626.9 512.9"/><path d="M635.9 511.9L645.9 512.9L645.9 523.9L643.9 524.9"/><path d="M626.9 532.9L632.9 535.9L631.9 551.8L629.9 558.8L627.0 558.5"/><path d="M626.9 584.4L637.9 584.7L639.9 577.8L642.9 559.8"/><path d="M643.9 524.9L656.9 524.9L656.9 528.9L665.8 529.9L679.8 525.9L679.8 518.9L665.8 511.9L659.8 504.0L667.8 498.0L685.8 486.0"/><path d="M679.8 525.9L675.8 537.9L669.8 547.8L675.8 557.8L677.8 571.8L668.8 574.8L668.8 581.8L665.8 585.2"/><path d="M670.8 549.3L653.9 546.8L647.9 555.8"/><path d="M649.9 541.9L653.9 546.8"/><path d="M670.8 549.3L707.7 555.8L708.7 528.9L716.7 528.5L716.7 513.9L721.7 512.9L720.7 502.5"/><path d="M679.8 518.9L691.8 517.9L693.8 527.9L708.7 528.5"/><path d="M691.8 517.9L703.7 506.9L715.7 503.0L721.7 503.0L731.7 505.9L747.6 513.9L759.6 517.9L767.6 525.9L777.5 537.9L785.5 549.8L791.5 555.8"/><path d="M687.8 492.0L695.8 496.0L707.7 504.0"/><path d="M717.7 525.9L727.7 531.9L737.6 539.9L743.6 545.8L750.6 545.8L751.6 555.8L755.6 560.8L747.6 567.8L739.6 569.8L732.7 565.8L727.7 559.8L723.7 552.8L729.7 547.8L737.6 541.9"/><path d="M745.6 518.9L744.6 545.8"/><path d="M708.7 547.8L719.7 546.8L723.7 552.8"/><path d="M707.7 555.8L708.7 563.8L703.7 564.8L705.7 571.8L709.7 583.7L717.7 589.7L718.7 603.7L721.7 605.7L722.2 624.6"/><path d="M677.8 572.8L705.7 572.2"/><path d="M682.8 572.8L682.8 599.7L675.8 601.7L670.8 605.7L670.8 619.7"/><path d="M682.8 599.7L691.8 603.7L695.8 609.7L703.7 613.7L710.7 614.7L711.7 623.6"/><path d="M665.8 584.7L668.8 591.7L679.8 594.7L682.8 599.7"/><path d="M637.9 584.7L649.9 585.7L665.8 585.2"/><path d="M645.9 585.7L649.9 599.7L645.9 605.7L643.9 613.7L651.9 618.7"/><path d="M739.6 569.8L741.6 579.8L747.6 586.7L724.7 587.7L723.7 605.7L749.6 606.7"/><path d="M747.6 567.8L759.6 579.8L771.6 573.8L775.5 569.8"/><path d="M751.6 555.8L767.6 557.8L779.5 561.8"/><path d="M757.6 515.9L763.6 504.0L771.6 496.0L779.5 492.0"/><path d="M771.6 496.0L775.5 507.9L781.5 519.9L791.5 525.9L797.5 528.9"/><path d="M719.7 486.0L720.7 502.5"/><path d="M738.6 486.0L739.6 498.0L747.6 513.9"/><path d="M759.6 579.8L763.6 589.7L761.6 603.7"/><path d="M658.8 486.0L659.8 496.0L667.8 498.0"/><path d="M633.9 619.7L629.9 631.6L626.9 633.4"/><path d="M661.8 621.6L665.8 633.6L659.8 639.6"/><path d="M683.8 623.6L687.8 633.6L685.8 639.6"/><path d="M699.7 624.6L703.7 635.6L707.7 648.0"/><path d="M722.2 624.6L719.7 648.0"/><path d="M765.6 627.6L773.5 625.6L780.5 625.6"/><path d="M503.2 646.0L502.7 681.9"/><path d="M523.7 658.0L520.7 665.9L523.7 673.9L530.7 677.9L530.7 693.9L523.7 697.9L517.7 702.8"/><path d="M502.7 659.0L523.7 658.0"/><path d="M530.7 675.9L565.6 675.5L573.5 678.9"/><path d="M555.6 644.0L551.6 652.0L555.6 662.0L559.6 671.9L565.6 675.5"/><path d="M553.6 650.0L587.5 650.0L589.5 653.0L600.1 653.0L600.1 644.0"/><path d="M627.0 650.5L615.4 654.0L609.5 663.9L607.5 667.9"/><path d="M627.0 650.5L653.9 655.0L652.9 692.9L685.8 693.5"/><path d="M663.8 644.0L661.8 656.0L665.8 665.9L677.8 671.9L683.8 677.9L689.8 683.9"/><path d="M653.9 655.0L661.8 656.0"/><path d="M695.8 652.0L695.8 679.9L689.8 683.9L685.8 693.9L683.8 703.8L685.8 713.8L679.8 727.8L673.8 737.8"/><path d="M695.8 679.9L707.7 691.9L713.7 683.9"/><path d="M720.7 656.0L720.7 663.9L751.6 663.9L751.6 644.0"/><path d="M743.6 664.9L735.6 675.9L727.7 683.9L719.7 682.9"/><path d="M719.7 671.9L713.7 675.9"/><path d="M727.7 683.9L739.6 691.9L749.6 699.9L751.6 663.9"/><path d="M706.7 691.9L706.7 717.8L713.7 718.2L713.7 722.8L724.7 723.8L724.7 746.7L715.7 747.3L715.7 763.7L708.7 764.7"/><path d="M685.8 713.8L706.7 717.8"/><path d="M724.7 723.8L737.6 723.8L741.6 727.8L749.6 727.8L753.6 721.8L765.6 720.8L775.5 723.8"/><path d="M749.6 699.9L759.6 695.9L769.6 691.9L783.5 690.9"/><path d="M715.7 763.7L719.7 761.7L731.7 770.7L780.5 770.1L781.5 747.7"/><path d="M758.6 770.7L758.6 786.0"/><path d="M791.5 699.9L791.5 709.8L800.1 710.8"/><path d="M790.5 749.7L796.5 761.7L800.1 763.7"/><path d="M37.9 648.0L43.9 656.0L49.9 663.9L57.8 662.0L65.8 663.9L77.8 669.9L81.8 663.9L79.8 656.0"/><path d="M12.0 656.0L16.0 667.9L12.0 679.9L14.0 691.9"/><path d="M21.9 669.9L33.9 671.9L35.9 674.9"/><path d="M65.8 663.9L67.8 675.9L75.8 683.9L89.8 681.9L93.8 675.9L87.8 667.9"/><path d="M89.8 681.9L95.8 685.9L111.7 683.9L119.7 689.9L135.6 699.9"/><path d="M95.8 685.9L93.8 693.9L87.8 701.8L81.8 703.8"/><path d="M99.7 697.9L107.7 707.8L119.7 719.8L127.7 731.8"/><path d="M140.6 646.0L139.6 685.9"/><path d="M152.6 660.0L149.6 677.9"/><path d="M157.6 683.9L167.6 687.9L173.5 695.9"/><path d="M111.7 665.9L111.7 683.9"/><path d="M49.9 663.9L47.9 671.9L55.9 679.9"/></g></g>
<g id="roads"><g fill="none" stroke="#806a12" stroke-width="1" stroke-linejoin="round"><path d="M175.5 0.0L185.5 10.0L191.5 23.9L193.5 35.9L194.5 65.8L194.5 85.8L189.5 95.8L182.5 104.7L180.5 115.7L177.5 129.7L169.6 141.6L168.6 151.6L161.1 162.0"/><path d="M227.0 8.1L222.4 16.0L222.4 35.9L218.4 49.9L213.4 57.8L207.5 62.8L194.5 65.8"/><path d="M226.9 41.9L226.9 41.9"/><path d="M227.0 8.1L234.9 1.0L241.9 8.0L242.9 15.0L250.9 21.9L256.9 35.9L257.8 45.9L265.8 52.9L281.8 54.9L289.8 48.9L299.7 47.5L308.7 49.9L315.7 56.9L327.7 63.8L339.6 73.8L351.6 81.8L359.6 87.8L369.6 97.7L377.5 103.7L387.5 111.7L396.5 115.7L399.5 127.7"/><path d="M359.6 127.7L361.6 117.7L369.6 105.7L379.5 97.7L389.5 93.4L399.5 93.4L409.5 95.8L427.0 99.7"/><path d="M359.6 127.7L361.6 139.6L369.6 149.6L379.5 157.6L391.0 162.0"/><path d="M399.5 127.7L403.5 117.7L403.5 107.7L409.5 97.7L414.4 87.8L417.4 79.8L421.4 69.8L427.0 58.3"/><path d="M399.5 127.7L391.5 133.7L379.5 135.6L369.6 137.6L355.6 141.6L339.6 147.6L323.7 153.6L299.7 157.6L279.8 162.0"/><path d="M399.5 127.7L411.5 127.7L427.0 126.2"/><path d="M399.5 127.7L399.5 139.6L397.5 151.6L396.5 162.0"/><path d="M399.5 127.7L407.5 137.6L417.4 147.6L427.0 159.3"/><path d="M427.0 58.3L428.9 53.9L439.9 50.9L449.9 47.9L457.8 41.9L462.8 33.9L464.8 23.9L466.8 12.0L466.8 0.0"/><path d="M427.0 99.7L428.9 105.7L430.9 115.7L430.9 127.7L426.9 137.2"/><path d="M427.0 126.2L449.9 127.7L473.8 132.7L483.8 130.7L499.7 130.7L511.7 131.7L517.7 137.6L527.7 143.6L539.6 150.6L547.6 153.6L559.6 152.6L575.5 153.6L589.5 153.6L599.5 149.6L609.5 146.6L615.4 142.0L627.0 142.8"/><path d="M582.5 0.0L580.5 16.0L587.5 29.9L597.5 39.9L598.5 53.9L594.5 67.8L594.5 79.8L598.5 89.8L591.5 97.7L584.5 103.7L589.5 113.7L591.5 119.7L601.5 129.7L605.5 137.6L608.5 142.6"/><path d="M608.5 142.6L599.5 148.6L587.5 153.6L580.5 162.0"/><path d="M427.0 159.3L428.9 162.0"/><path d="M800.1 64.8L787.5 69.8L775.5 73.8L763.6 76.8L753.6 81.8L743.6 86.8L735.6 90.8L723.7 97.7L711.7 104.7L699.7 111.7L685.8 118.7L673.8 124.7L661.8 129.7L653.9 135.6L645.9 139.6L635.9 143.6L627.0 142.8"/><path d="M653.9 135.6L657.8 143.6L663.8 147.6L666.8 157.6L672.3 162.0"/><path d="M161.1 162.0L153.6 178.0L145.6 189.9L139.6 197.9L143.6 209.9L146.6 216.9L154.6 219.8"/><path d="M154.6 219.8L139.6 218.9L127.7 220.8L111.7 225.8L103.7 228.8L89.8 234.8L75.8 239.8L59.8 244.8L45.9 248.8L31.9 249.8L19.9 249.8L0.0 251.2"/><path d="M154.6 219.8L154.6 215.9L165.6 215.5L169.6 219.8L167.6 225.4L155.6 225.8L154.6 219.8"/><path d="M169.6 217.9L179.5 213.9L187.5 208.9L195.5 201.9L205.5 195.9L213.4 189.9L216.4 183.9L227.0 180.4"/><path d="M157.6 225.8L159.6 237.8L162.6 251.8L163.6 267.7L167.6 281.7L165.6 297.6L166.6 309.6L169.6 324.0"/><path d="M227.0 180.4L229.9 179.0L243.9 174.0L259.8 169.0L279.8 162.0"/><path d="M391.0 162.0L390.5 178.0L391.5 191.9L392.5 213.9L391.5 231.8L388.5 247.8L389.5 265.7L390.5 281.7L390.5 297.6L393.5 309.6L393.0 324.0"/><path d="M428.9 162.0L439.9 180.0L451.9 187.9L463.8 203.9L471.8 215.9L477.8 225.8L485.8 227.8L497.7 233.2"/><path d="M580.5 162.0L571.6 174.0L559.6 187.9L549.6 201.9L539.6 212.9L527.7 221.8L517.7 230.8L507.7 228.8L501.7 231.8L497.7 233.2"/><path d="M497.7 233.2L491.8 247.8L487.8 259.7L479.8 273.7L471.8 289.7L459.8 307.6L448.9 324.0"/><path d="M516.7 231.8L519.7 237.8L529.7 243.8L531.7 257.8L537.6 273.7L537.6 285.7L547.6 297.6L551.6 311.6L563.6 315.6L565.6 324.0"/><path d="M578.5 287.7L571.6 299.6L567.6 309.6L563.6 319.6"/><path d="M627.0 307.9L611.5 314.6L603.5 319.6L599.5 324.0"/><path d="M672.3 162.0L677.8 166.0L679.8 174.0L685.8 181.0L695.8 183.9L709.7 181.9L719.7 181.0L735.6 177.0L751.6 175.0L763.6 171.0L779.5 168.0L791.5 166.4L800.1 169.0"/><path d="M709.7 182.9L715.7 193.9L723.7 203.9L729.7 209.9L737.6 209.9L743.6 215.9L751.6 225.8L753.6 235.8L757.6 247.8L759.6 257.8L763.6 269.7L764.6 275.7"/><path d="M627.0 307.9L641.9 299.6L657.8 289.7L667.8 281.7L679.8 276.7L693.8 272.7L705.7 268.7L715.7 259.7L719.7 251.8L732.7 247.8L743.6 241.8L753.6 235.8L763.6 229.8L775.5 223.8L787.5 220.8L800.1 216.9"/><path d="M732.7 247.8L735.6 255.8L743.6 261.7L753.6 269.7L764.6 275.7L775.5 283.7L783.5 291.7L791.5 299.6L800.1 302.6"/><path d="M169.6 324.0L171.6 340.0L176.5 355.9L177.5 371.9L174.5 387.8L169.6 399.8L161.6 411.8L156.6 423.7L155.6 435.7L151.6 451.7L148.6 463.6L144.6 472.6"/><path d="M0.0 454.7L16.0 455.7L35.9 458.6L55.9 461.6L69.8 465.6L83.8 470.6L93.8 468.6L107.7 466.6L123.7 467.2L135.6 468.6L141.6 472.6L147.6 472.6L159.6 473.6L179.5 472.6L191.5 470.6L209.5 470.2L227.0 468.8"/><path d="M144.6 472.6L142.6 465.6L148.6 461.6"/><path d="M147.6 472.6L143.6 479.6L139.6 486.0"/><path d="M227.0 468.8L247.9 468.0L259.8 465.6L275.8 460.6L285.8 451.7L293.8 441.7L303.7 431.7L315.7 419.8L327.7 407.8L335.6 398.8L343.6 394.8L359.6 393.8L369.6 390.8L379.5 383.8L387.5 377.9L399.5 374.9L407.5 366.9L417.4 361.9L427.0 358.4"/><path d="M251.9 468.0L246.9 475.6L244.4 486.0"/><path d="M393.0 324.0L396.5 336.0L396.5 349.9L395.5 363.9L399.5 375.9L397.5 387.8L401.5 399.8L405.5 411.8L413.4 423.7L419.4 435.7L423.4 447.7L427.0 456.7"/><path d="M427.0 340.0L419.4 345.9L411.5 353.9L403.5 363.9"/><path d="M381.5 380.9L391.5 379.9L399.5 374.9"/><path d="M387.5 366.9L377.5 381.8L371.6 389.8"/><path d="M427.0 358.4L433.9 356.9L445.9 357.9L459.8 358.3L475.8 355.9L489.8 353.9L507.7 349.9L523.7 347.5L539.6 345.9L555.6 343.0L569.6 342.0L575.5 344.9"/><path d="M427.0 340.0L433.9 336.0L441.9 330.0L448.9 324.0"/><path d="M570.6 333.0L579.5 328.0L587.5 331.0L588.5 343.9L586.5 351.9L577.5 353.9L570.6 349.9L569.6 340.0L570.6 333.0"/><path d="M577.5 343.9L573.5 334.0L569.6 328.0L565.6 324.0"/><path d="M577.5 343.9L587.5 331.0L593.5 327.0L599.5 324.0"/><path d="M578.0 343.0L580.5 324.0"/><path d="M578.0 343.0L579.5 344.9L591.5 346.9L603.5 351.9L615.4 354.9L627.0 355.7"/><path d="M575.5 344.9L569.6 355.9L559.6 365.9L551.6 373.9L547.6 381.8L545.6 389.8L539.6 397.8L535.6 403.8L527.7 411.8L519.7 422.7L513.7 429.7L507.7 439.7L499.7 445.7L485.8 453.7L471.8 459.6L457.8 464.6L443.9 466.6L433.9 466.6"/><path d="M577.5 353.9L585.5 361.9L593.5 371.9L599.5 385.8L605.5 397.8L613.4 405.8L621.4 413.8L625.4 417.8L627.0 429.7"/><path d="M427.0 456.7L427.9 459.6L433.9 466.6L429.9 475.6L425.7 484.7"/><path d="M621.4 413.8L627.0 417.0"/><path d="M627.0 355.7L639.9 358.9L657.8 361.9L675.8 361.5L691.8 364.9L709.7 365.9L727.7 364.9L743.6 366.9L753.6 362.9L763.6 356.9L775.5 351.9L787.5 343.9L800.1 333.0"/><path d="M627.0 417.0L627.9 418.8L633.9 424.7L639.9 431.7L643.9 438.7L659.8 445.7L675.8 452.7L691.8 457.7L707.7 460.6L723.7 462.6L739.6 465.6L755.6 467.6L767.6 472.6L779.5 476.6L791.5 480.6L800.1 483.6"/><path d="M627.0 429.7L626.9 431.7L626.9 431.7"/><path d="M627.9 418.8L631.9 423.7L629.9 429.7L626.9 431.7"/><path d="M139.6 486.0L132.7 496.0L129.7 505.9L126.7 521.9L124.7 537.9L123.7 553.8L122.7 571.8L121.7 588.3L120.7 605.7L121.3 621.6L123.7 634.6L127.7 643.6L128.7 646.0"/><path d="M227.0 523.8L222.4 529.9L215.4 537.9L210.5 545.8L208.5 557.8L209.5 567.8L205.5 581.8L201.5 593.7L195.5 605.7L189.5 617.7L183.5 629.6L179.5 643.6L179.5 646.0"/><path d="M29.9 648.0L45.9 641.6L63.8 637.6L83.8 636.6L103.7 634.6L121.7 634.6L139.6 636.6L157.6 640.6L169.6 645.6L175.5 648.0"/><path d="M0.0 610.7L6.0 617.7L8.0 625.6L7.0 637.6L8.0 646.0"/><path d="M209.5 644.0L216.0 640.6L227.0 638.0"/><path d="M244.4 486.0L240.9 496.0L230.9 509.9L229.9 519.9L227.0 523.8"/><path d="M425.7 484.7L417.4 502.0L407.5 517.9L397.5 533.9L385.5 547.8L375.5 557.8L363.6 567.8L351.6 575.8L339.6 583.7L327.7 590.7L315.7 593.7L305.7 597.7L301.7 603.7L299.7 613.7L299.3 623.6"/><path d="M227.0 638.0L235.9 636.6L259.8 637.2L279.8 634.6L291.8 629.6L299.7 622.6L307.7 617.7L319.7 618.7L335.6 621.6L347.6 625.6L355.6 629.6L363.6 632.6L373.5 629.6L379.5 625.6L387.5 619.7L397.5 615.7L409.5 612.7L427.0 612.3"/><path d="M427.0 612.3L437.9 610.1L447.9 614.7L459.8 613.7L471.8 609.3L485.8 610.1L497.7 611.7L508.7 609.7L519.7 614.7L529.7 618.7L541.6 621.6L553.6 624.6L565.6 630.0L575.5 634.0L587.5 632.6L599.5 634.6L611.5 633.2L627.0 636.8"/><path d="M623.4 486.0L623.4 498.0L627.0 508.9"/><path d="M627.0 508.9L626.9 511.9L632.9 523.9L639.9 535.9L641.9 547.8L644.9 559.8L647.9 571.8L650.9 583.7L653.9 595.7L657.8 607.7L663.8 617.7L671.8 627.6L679.8 634.6L687.8 639.6L691.8 646.0"/><path d="M800.1 528.9L797.5 537.9L794.5 553.8L791.5 567.8L785.5 579.8L780.5 589.7L778.5 601.7L780.5 613.7L778.5 625.6L781.5 635.6L780.0 648.5"/><path d="M627.0 636.8L639.9 639.6L657.8 643.3"/><path d="M779.5 639.6L775.5 639.6L773.1 646.0"/><path d="M657.8 643.3L675.8 647.0L691.8 652.0L703.7 655.0L719.7 655.0L735.6 656.0L751.6 653.0L765.6 650.0L780.0 648.5"/><path d="M691.8 646.0L699.7 654.0L707.7 667.9L713.7 683.9L719.7 699.9L727.7 713.8L735.6 725.8L739.6 739.8L742.6 755.7L746.6 769.7L748.6 786.0"/><path d="M773.1 646.0L772.6 658.0L779.5 662.0L787.5 662.0L791.5 667.9L795.5 677.9L799.5 689.9"/><path d="M779.5 649.0L785.5 656.0L787.5 662.0"/><path d="M0.0 655.0L8.0 655.0L19.9 650.0L31.9 647.0L40.9 644.0"/><path d="M8.0 646.0L9.0 655.0"/><path d="M81.8 644.0L85.8 652.0L93.8 659.0L103.7 663.9L115.7 665.9L125.7 667.9L137.6 674.9L147.6 677.9L153.6 680.9"/><path d="M128.7 646.0L129.7 652.0L125.7 662.0L125.7 667.9"/><path d="M153.6 680.9L159.6 675.9L165.6 671.9L171.6 667.9L175.5 662.0L177.5 654.0L178.5 649.0L179.5 646.0"/><path d="M163.6 644.0L171.6 648.0L179.5 650.0L187.5 650.0L199.5 646.0L209.5 644.0"/></g></g>
<g id="states"><g fill="none" stroke="#000" stroke-width="1" stroke-linejoin="round"><path d="M0.0 99.1L148.6 99.1L150.0 103.7L154.6 107.7L154.6 115.7L150.6 121.7L145.6 125.7L141.6 130.7L136.6 137.6L131.7 143.2L180.5 143.2"/><path d="M196.5 0.0L197.5 8.0L202.5 16.0L202.5 22.9L196.5 25.9L196.5 30.9L201.5 35.9L205.5 45.9L211.5 50.9L214.4 54.9L217.0 52.3L214.4 48.9L219.4 47.9L223.4 42.9L227.0 40.9"/><path d="M217.0 52.3L221.0 52.9L226.0 56.9L225.4 63.8L222.4 67.8L223.4 75.8L219.4 79.8L222.4 85.8L216.4 92.8L209.5 87.8L205.5 93.8L202.5 100.7L197.5 98.7L198.5 93.8L194.5 91.4L191.5 94.8L194.5 99.7L193.5 105.7L195.5 111.7L191.5 115.7L184.5 117.7L182.5 121.7L189.5 124.7L191.5 131.7L184.5 137.6L181.5 143.2L186.5 149.6L183.5 153.6L177.5 157.6L175.0 162.0"/><path d="M202.5 98.7L227.0 98.5"/><path d="M227.0 40.9L231.9 35.9L239.9 33.9L244.9 36.9L251.9 39.9L257.8 42.9L265.8 47.9L271.8 47.9L276.8 42.9L274.8 35.9L270.8 31.9L271.8 23.9L274.8 19.0L279.8 17.0L287.8 14.0L299.7 12.0L303.7 10.0L302.7 4.0L298.7 0.0"/><path d="M227.0 98.5L259.8 99.1L305.7 99.1L306.7 91.8L303.7 82.8L311.7 82.8L319.7 85.8L427.0 85.5"/><path d="M427.0 85.5L439.9 86.2L479.8 87.8L519.7 87.8L559.6 89.4L599.5 90.8L627.0 91.1"/><path d="M627.0 91.1L629.9 90.8L759.6 90.4L780.5 87.8L800.1 92.2"/><path d="M629.9 89.8L639.9 84.8L651.9 79.8L669.8 76.8L674.8 68.8L689.8 63.8L691.8 55.9L700.7 49.9L701.7 42.9L711.7 37.9L723.7 31.9L735.6 26.9L743.6 19.0L751.6 11.0L757.6 8.0L759.6 6.0L751.6 5.0L745.6 3.0L742.6 0.0"/><path d="M759.6 7.0L755.6 12.0L759.6 16.0L760.6 21.9L767.6 25.9L773.5 31.9L779.5 35.9L787.5 35.9L795.5 32.9L800.1 28.9"/><path d="M780.5 87.8L777.5 92.8L777.5 99.7L774.5 107.7L776.5 112.7L767.6 111.7L759.6 119.7L755.6 127.7L751.6 132.7L743.6 131.7L737.6 129.7L729.7 132.7L723.7 137.6L717.7 145.6L711.7 146.6L708.7 138.6L703.7 139.6L697.7 143.6L693.8 148.6L687.8 149.6L685.8 157.6L683.3 162.0"/><path d="M175.0 162.0L169.6 165.0L164.6 166.0L163.6 172.0L170.6 174.0L167.6 178.0L163.6 180.0L166.6 185.9L161.6 182.9L156.6 185.9L157.6 191.9L153.6 189.9L147.6 193.9L146.6 197.9L151.6 199.9L155.6 196.9L148.6 203.9L147.6 209.9L154.6 211.9L152.6 217.9L147.6 220.8L145.6 227.8L138.6 228.8L136.6 232.8L141.6 235.8L140.6 241.8L135.6 244.8L129.7 246.8L127.7 241.8L123.7 243.8L124.7 249.8L119.7 251.8L121.7 256.8L116.7 260.7L121.7 264.7L125.7 259.7L118.7 258.7L119.7 271.7L116.7 276.7L117.7 283.7L111.7 286.7L108.7 289.7L109.7 293.7L103.7 288.7L104.7 295.7L97.7 299.6L91.8 299.6L93.8 304.6L98.7 307.6L93.8 310.6L88.8 309.6L93.8 315.6L90.8 320.6L83.8 321.6L79.8 324.0"/><path d="M137.6 232.4L227.0 232.4"/><path d="M227.0 232.4L293.8 232.4L329.7 231.4L427.0 232.3"/><path d="M293.8 232.4L295.8 236.8L301.7 240.8L298.7 265.7L296.7 289.7L293.8 313.6L292.8 324.0"/><path d="M427.0 232.3L627.0 233.0"/><path d="M486.2 233.2L489.8 249.8L492.8 269.7L496.7 289.7L500.7 313.6L502.7 324.0"/><path d="M627.0 181.9L616.4 184.9L608.5 190.9L604.5 196.9L603.5 204.9L599.5 209.9L589.5 208.9L584.5 212.9L582.5 233.2"/><path d="M683.3 162.0L671.8 163.0L665.8 170.0L655.9 174.0L642.9 181.9L635.9 180.4L627.0 181.9"/><path d="M627.0 233.0L672.8 231.8L685.8 226.8L697.7 223.8L703.7 220.8L713.7 217.9L723.7 214.9L725.7 212.9L727.7 215.9L735.6 214.3L751.6 214.9L779.5 216.3L800.1 217.5"/><path d="M672.8 231.8L669.8 239.8L659.8 245.8L655.9 251.8L654.9 257.8L659.8 263.7L667.8 269.7L675.8 276.7L687.8 277.7L691.8 283.7L695.8 293.7L699.7 299.6L700.7 305.6L707.7 313.6L711.7 324.0"/><path d="M87.8 324.0L81.8 326.0L80.8 332.0L85.8 336.0L86.8 342.0L79.8 340.0L74.8 343.0L76.8 348.9L82.8 349.9L79.8 345.9L69.8 347.9L68.8 351.9L74.8 355.9L68.8 359.9L71.8 365.9L68.8 370.9L74.8 373.9L80.8 370.9L78.8 376.9L74.8 380.9L77.8 385.8L81.8 387.8L78.8 391.8L78.8 397.8L71.8 398.8L70.8 402.8L75.8 405.8L72.8 409.8L69.8 415.8L74.8 418.8L75.8 412.8L79.8 413.8L78.8 421.7L73.8 425.7L74.8 431.7L79.8 434.7L76.8 441.7L75.8 445.7L83.8 442.7L85.8 446.7L78.8 449.7L78.8 455.7L85.8 457.7L87.8 463.6L93.8 465.6L91.8 471.6L85.8 475.6L79.8 479.6L73.8 481.6L72.8 486.0L78.8 488.8L85.8 486.0"/><path d="M0.0 409.4L72.8 409.4"/><path d="M292.8 324.0L289.8 349.9L285.8 383.8L281.8 419.8L278.8 451.7L275.6 486.0"/><path d="M502.7 324.0L507.7 353.9L513.7 387.8L519.7 423.7L523.7 437.7L527.7 447.7L531.7 455.7L533.7 463.6L531.7 469.6L539.6 475.6L535.6 481.6L528.7 486.0"/><path d="M711.7 324.0L719.7 330.0L729.7 336.0L737.6 343.9L741.6 353.9L751.6 358.9L757.6 365.9L761.6 371.9L759.6 378.9L765.6 383.8L769.6 389.8L773.5 397.8L785.5 403.8L792.5 409.8L793.5 417.8L798.5 425.7L798.5 435.7L800.1 439.7"/><path d="M85.8 486.0L81.8 490.0L76.8 492.0L75.8 496.0L79.8 498.0L77.8 502.0L71.8 504.0L67.8 509.9L61.8 512.9L59.8 517.9L65.8 520.9L64.8 522.9L58.8 521.9L56.9 529.9L51.9 530.9L47.9 533.9L50.9 538.9L56.9 534.9L55.9 543.8L47.9 549.8L42.9 551.8L42.9 555.8L48.9 554.8L46.9 562.8L39.9 564.8L37.9 569.8L40.9 573.8L38.9 579.8L42.9 583.7L38.9 588.2"/><path d="M38.9 588.2L180.5 588.3"/><path d="M180.5 588.3L179.5 594.7L175.5 601.7L172.6 609.7L171.6 617.7L173.5 625.6L177.5 631.6L182.5 635.6L184.5 643.6L186.5 646.0"/><path d="M275.6 486.0L274.8 525.9L275.8 565.8L277.8 605.7L278.8 633.6L279.4 643.6"/><path d="M338.6 588.3L427.0 588.5"/><path d="M338.6 588.3L337.6 594.7L335.6 600.7L339.6 605.7L344.6 611.7L352.6 617.7L353.6 623.6L350.6 629.6L351.6 635.6L355.6 639.6"/><path d="M528.7 486.0L527.7 496.0L527.7 532.9L525.7 549.8L523.7 563.8L524.7 571.8L529.7 580.8L531.7 589.7L535.6 596.7"/><path d="M427.0 588.5L530.7 588.3"/><path d="M541.6 614.7L579.5 616.1L627.0 618.4"/><path d="M627.0 618.4L659.8 620.6L699.7 623.6L737.6 626.2L738.6 633.6L740.6 638.6L741.6 643.6L747.6 645.2L752.6 644.6L753.6 637.6L754.6 629.6L752.6 623.6L751.6 615.7L752.6 608.7L757.6 604.7L762.6 603.7L765.6 606.7L773.5 608.7L780.5 610.7"/><path d="M186.5 646.0L188.5 652.0L191.5 659.0L197.5 662.0"/></g></g>
<g id="lakes"><g fill="#2b4a6c"><path d="M292.8 53.9L297.7 50.9L301.7 48.9L306.7 51.9L308.7 57.8L311.7 63.8L317.7 65.8L314.7 68.8L311.7 72.8L312.7 77.8L317.7 83.8L317.3 89.8L313.7 83.8L308.7 78.8L307.7 69.8L304.7 61.8L301.7 54.9L297.7 55.9L294.8 56.9Z"/><path d="M362.6 254.8L367.6 252.2L373.5 256.8L381.5 259.3L386.5 264.7L390.5 270.7L385.5 267.7L377.5 262.7L371.6 260.7L367.6 255.8L363.6 256.8Z"/><path d="M608.5 279.7L609.5 285.7L614.4 280.7L616.4 285.7L621.4 287.7L616.4 293.7L611.5 299.6L606.5 304.6L601.5 306.6L598.5 301.6L603.5 299.6L607.5 293.7L606.5 285.7Z"/><path d="M432.9 370.9L435.9 364.9L439.9 362.9L441.9 357.9L444.9 358.9L444.9 362.9L439.9 366.9L437.9 371.9Z"/><path d="M418.4 407.8L420.9 409.8L421.9 417.8L424.9 421.7L425.5 427.7L422.9 428.7L419.9 419.8L418.6 413.8Z"/><path d="M520.7 496.0L522.7 501.0L526.7 498.0L527.7 504.0L524.7 511.9L525.7 519.9L530.7 518.9L527.7 524.9L527.7 532.9L524.7 530.9L519.7 524.9L521.7 517.9L519.3 511.9L521.7 505.0Z"/><path d="M534.6 595.7L537.6 599.7L538.6 605.7L543.6 606.7L547.6 603.7L550.6 596.7L551.6 603.7L557.6 603.7L557.6 607.7L549.6 608.7L545.6 611.7L540.6 614.7L535.6 610.7L535.2 603.7Z"/><path d="M778.5 723.8L781.5 729.8L787.5 735.8L790.5 741.7L788.5 748.7L783.5 747.7L780.5 737.8L778.5 729.8Z"/><path d="M763.6 786.0L766.6 783.6L771.6 783.6L772.6 786.0Z"/><path d="M115.7 652.0L119.7 648.0L125.7 646.0L129.7 649.0L130.7 655.0L126.7 660.0L121.7 662.0L116.7 659.0Z"/><path d="M35.9 674.9L39.9 673.9L44.9 678.9L45.9 682.9L40.9 682.9L37.9 678.9Z"/><path d="M50.9 684.9L53.9 678.9L57.8 686.9L59.8 693.9L67.8 696.9L75.8 698.9L78.8 703.8L72.8 703.8L63.8 700.9L55.9 697.9L52.9 690.9Z"/><path d="M138.6 692.9L142.6 689.5L147.6 692.9L148.6 698.9L144.6 702.8L140.6 707.8L135.6 705.8L134.6 701.8L139.6 697.9Z"/></g></g>
<g id="rings" fill="none" stroke="#ece6e2" stroke-width="0.9">
<circle cx="401" cy="401" r="159.500"/><circle cx="401" cy="401" r="279.500"/><circle cx="401" cy="401" r="399.500"/><circle cx="401" cy="401" r="519.500"/>
<circle cx="401" cy="401" r="39.500" stroke="#ff0a0a" stroke-width="1"/>
</g>
<g font-family="DejaVu Sans, Liberation Sans, sans-serif" font-size="10" fill="#ffff8c" text-anchor="middle" lengthAdjust="spacingAndGlyphs">
<text x="400" y="365.500" textLength="13.500">31</text><text x="400" y="245.500" textLength="20">125</text><text x="400" y="125.500" textLength="20">219</text><text x="400" y="5.500" textLength="20">313</text>
</g>
<path d="M498 164.500h7M501.500 161v7" stroke="#ffd500" stroke-width="1" fill="none"/>
<g id="legend"><rect x="2.500" y="752.500" width="244" height="43" fill="#000" stroke="#b4b4b4"/><g font-family="Liberation Sans, sans-serif" font-size="10.500" fill="#e8e8e8"><text x="7.5" y="765.6" textLength="35.0" lengthAdjust="spacingAndGlyphs">Symbols</text><text x="46.4" y="765.6" textLength="17.5" lengthAdjust="spacingAndGlyphs">-CG</text><text x="71.5" y="765.6" textLength="14.0" lengthAdjust="spacingAndGlyphs">-IC</text><text x="92.4" y="765.6" textLength="20.5" lengthAdjust="spacingAndGlyphs">+CG</text><text x="117.8" y="765.6" textLength="17.0" lengthAdjust="spacingAndGlyphs">+IC</text><text x="147.3" y="765.6" textLength="90.0" lengthAdjust="spacingAndGlyphs">Strike age color codes</text><text x="7.5" y="778.4" textLength="30.0" lengthAdjust="spacingAndGlyphs">Recent</text><text x="7.5" y="791.2" textLength="15.0" lengthAdjust="spacingAndGlyphs">Old</text><text x="147.8" y="778.4" textLength="16.0" lengthAdjust="spacingAndGlyphs" fill="#ffe020">15+</text><text x="182.2" y="778.4" textLength="16.0" lengthAdjust="spacingAndGlyphs" fill="#f0a810">30+</text><text x="216.7" y="778.4" textLength="16.0" lengthAdjust="spacingAndGlyphs" fill="#f09410">45+</text><text x="147.8" y="791.2" textLength="16.0" lengthAdjust="spacingAndGlyphs" fill="#f08010">60+</text><text x="182.2" y="791.2" textLength="16.0" lengthAdjust="spacingAndGlyphs" fill="#f06018">75+</text><text x="216.7" y="791.2" textLength="16.0" lengthAdjust="spacingAndGlyphs" fill="#f03010">90+</text></g><circle cx="54.8" cy="774.7" r="4" fill="none" stroke="#20e8f8" stroke-width="1.1"/><path d="M52.3 774.7h5" stroke="#20e8f8" stroke-width="1.1"/><path d="M75.4 774.7h8" stroke="#20e8f8" stroke-width="1.2"/><circle cx="104.5" cy="774.7" r="4" fill="none" stroke="#20e8f8" stroke-width="1.1"/><path d="M102.0 774.7h5" stroke="#20e8f8" stroke-width="1.1"/><path d="M104.5 772.2v5" stroke="#20e8f8" stroke-width="1.1"/><path d="M124.8 774.7h8M128.8 770.7v8" stroke="#20e8f8" stroke-width="1.2"/><circle cx="54.8" cy="787.5" r="4" fill="none" stroke="#f8f020" stroke-width="1.1"/><path d="M52.3 787.5h5" stroke="#f8f020" stroke-width="1.1"/><path d="M75.4 787.5h8" stroke="#f8f020" stroke-width="1.2"/><circle cx="104.5" cy="787.5" r="4" fill="none" stroke="#f8f020" stroke-width="1.1"/><path d="M102.0 787.5h5" stroke="#f8f020" stroke-width="1.1"/><path d="M104.5 785.0v5" stroke="#f8f020" stroke-width="1.1"/><path d="M124.8 787.5h8M128.8 783.5v8" stroke="#f8f020" stroke-width="1.2"/></g>
<g id="copy"><rect x="680" y="786" width="120" height="14" fill="#000"/><text x="684.500" y="796.800" font-family="Liberation Sans, sans-serif" font-size="10.500" fill="#f0f0f0" textLength="111" lengthAdjust="spacingAndGlyphs">©2005 Astrogenic Systems</text></g>
</svg>
</div>

<!-- panel 1 -->
<div class="box" style="left:812px;top:8px;width:320px;height:320px"></div>
<div class="btn b" style="left:819px;top:16px;width:58px;height:18px;background:#5a0000;color:#d8d8d8;line-height:17px;font-size:12.5px">STRIKE</div>
<div class="btn b" style="left:883px;top:16px;width:58px;height:18px;background:#333;color:#c8c8c8;line-height:17px;font-size:12.5px">NOISE</div>
<div class="btn b" style="left:994px;top:16px;width:128px;height:18px;background:#333;line-height:17px;font-size:12.5px"><span style="position:absolute;left:4px;letter-spacing:-0.3px">Bng 23°</span><span class="gr" style="position:absolute;right:3px">200mi</span></div>

<div class="btn" style="left:821px;top:64px;width:82px;height:16px;background:#555;line-height:15px;color:#eee;font-size:11.8px">Strikes/min</div>
<div class="btn" style="left:931px;top:64px;width:82px;height:16px;background:#555;line-height:15px;color:#eee;font-size:11.8px">Close/min</div>
<div class="btn" style="left:1041px;top:64px;width:82px;height:16px;background:#555;line-height:15px;color:#eee;font-size:11.8px">Noises/min</div>
<div class="big" style="left:823px;width:80px;top:88px">0</div>
<div class="big" style="left:933px;width:80px;top:88px">0</div>
<div class="big g" style="left:1043px;width:80px;top:88px;color:#c0c0c0">0</div>
<div class="t r" style="left:803px;width:100px;top:131px">Total Strikes</div>
<div class="t r" style="left:913px;width:100px;top:131px">Total Close</div>
<div class="t r g" style="left:1023px;width:100px;top:131px">Total Noises</div>
<div class="t r g" style="left:803px;width:100px;top:149px">6</div>
<div class="t r g" style="left:913px;width:100px;top:149px">0</div>
<div class="t r g" style="left:1023px;width:100px;top:149px">32</div>

<div class="t g" style="left:821px;top:203px">Lightning type distribution</div>
<div style="position:absolute;left:821px;top:218px;width:303px;height:1px;background:#a0a0a0"></div>
<div class="t bc" style="left:821px;top:225px">Cloud-ground</div>
<div class="t g" style="left:912px;top:225px">+</div>
<div class="bar" style="left:925px;top:227px"><i style="width:8px;background:#f01010"></i></div>
<div class="t b" style="left:979px;top:225px">17%</div>
<div class="t b g" style="left:1015px;top:225px;width:7px;overflow:hidden"><span style="position:absolute;left:0;top:7px;width:7px;height:2px;background:#c8c8c8"></span><span style="opacity:0">−</span></div>
<div class="bar" style="left:1028px;top:227px"><i style="width:8px;background:#90c8f8"></i></div>
<div class="t b" style="left:1082px;top:225px">17%</div>
<div class="t bc g" style="left:821px;top:249px">Count</div>
<div class="t b" style="left:925px;top:249px">1</div>
<div class="t b" style="left:1028px;top:249px">1</div>
<div class="t bc" style="left:821px;top:279px">Intracloud</div>
<div class="t g" style="left:912px;top:279px">+</div>
<div class="bar" style="left:925px;top:281px"><i style="width:16px;background:#f060b0"></i></div>
<div class="t b" style="left:979px;top:279px">33%</div>
<div class="t b g" style="left:1015px;top:279px;width:7px;overflow:hidden"><span style="position:absolute;left:0;top:7px;width:7px;height:2px;background:#c8c8c8"></span><span style="opacity:0">−</span></div>
<div class="bar" style="left:1028px;top:281px"><i style="width:16px;background:#10f010"></i></div>
<div class="t b" style="left:1082px;top:279px">33%</div>
<div class="t bc g" style="left:821px;top:303px">Count</div>
<div class="t b" style="left:925px;top:303px">2</div>
<div class="t b" style="left:1028px;top:303px">2</div>

<!-- panel 2 -->
<div class="box" style="left:812px;top:333px;width:320px;height:115px"></div>
<div class="t b gr" style="left:821px;top:338px;font-size:16.5px;line-height:20px;height:20px">1/30/2026 7:04:52 AM</div>
<div style="position:absolute;left:821px;top:358px;width:302px;height:1px;background:#a0a0a0"></div>
<div class="t" style="left:821px;top:376px">Squelch</div><div class="t" style="left:909px;top:376px">0</div><div class="t" style="left:981px;top:376px">Upload</div><div class="t g" style="left:1061px;top:376px">Disabled</div>
<div class="t" style="left:821px;top:396px">Persistence</div><div class="t" style="left:909px;top:396px">90 min</div><div class="t" style="left:981px;top:396px">Capture</div><div class="t gr" style="left:1061px;top:396px">Active</div>
<div class="t" style="left:821px;top:416px">Range</div><div class="t" style="left:909px;top:416px">313 mi</div><div class="t" style="left:981px;top:416px">Receiver</div><div class="t gr" style="left:1061px;top:416px">Enabled</div>

<!-- panel 3 -->
<div class="box" style="left:812px;top:453px;width:320px;height:350px"></div>
<div class="t g" style="left:821px;top:463px">Uptime</div><div class="t" style="left:909px;top:463px">450:49</div><div class="t g" style="left:981px;top:463px">Peak time</div><div class="t g" style="left:1061px;top:463px">Plot</div>
<div class="t g" style="left:821px;top:486px">Peak rate</div><div class="t" style="left:909px;top:486px">2/min</div><div class="t" style="left:981px;top:486px">4:12 AM</div><div class="t" style="left:1061px;top:486px">Strike</div>
<div class="t g" style="left:822px;top:516px">Trend graph</div><div class="t" style="left:908px;top:516px">60 min</div>
<svg style="position:absolute;left:812px;top:530px" width="320" height="272">
<g stroke="#d0d0d0" stroke-width="1" fill="none" shape-rendering="crispEdges">
<path d="M10 247.500H277M276.500 12V248M272 12.500h4M272 90.500h4M272 168.500h4M274 51.500h2M274 129.500h2M274 207.500h2M10.500 245v4M54.500 245v4M99.500 245v4M143.500 245v4M187.500 245v4M232.500 245v4"/>
<path d="M204.500 247l2-7h3l2 7" stroke="#fff" shape-rendering="auto"/>
</g>
<g font-family="Liberation Sans, sans-serif" font-size="11.500" fill="#d0d0d0">
<text x="281" y="17">30</text><text x="281" y="95">20</text><text x="281" y="173">10</text>
<text x="8" y="263">60</text><text x="52" y="263">50</text><text x="97" y="263">40</text><text x="141" y="263">30</text><text x="185" y="263">20</text><text x="230" y="263">10</text><text x="278" y="263">0</text><text x="289" y="263" font-size="11">min</text>
</g>
</svg>
</body></html>
